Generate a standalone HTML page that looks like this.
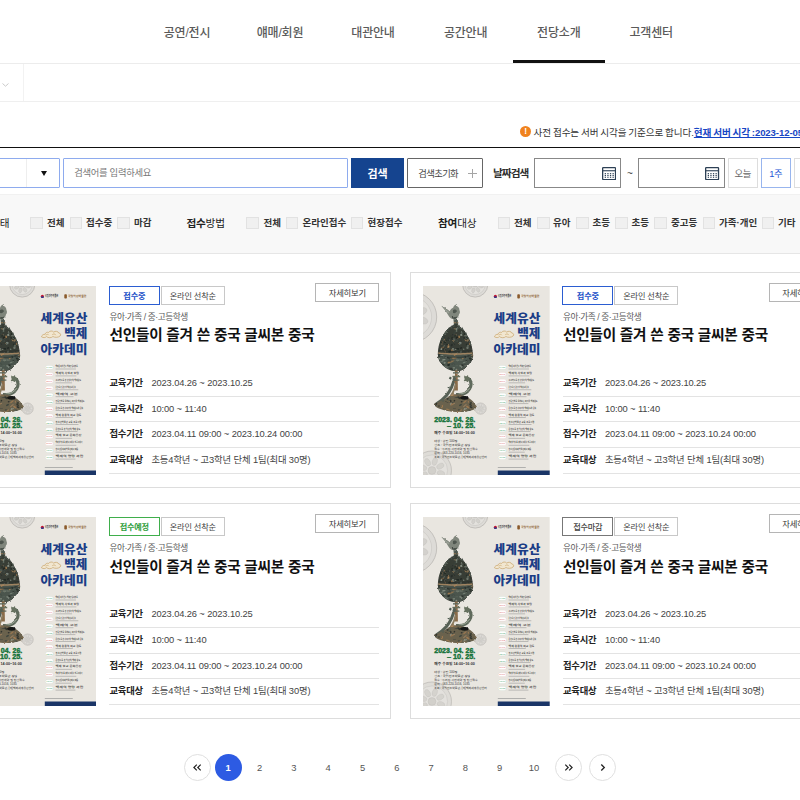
<!DOCTYPE html>
<html lang="ko"><head><meta charset="utf-8"><title>교육 프로그램</title>
<style>
*{box-sizing:border-box;margin:0;padding:0}
html,body{width:800px;height:800px;overflow:hidden;background:#fff}
body{position:relative;font-family:"Liberation Sans","Noto Sans CJK KR",sans-serif;color:#333;font-size:10.67px;line-height:1}
.abs{position:absolute}
.nav{position:absolute;top:0;left:0;width:800px;height:64px;border-bottom:1px solid #ececec}
.nav span{position:absolute;top:23.7px;width:93px;text-align:center;font-size:12px;font-weight:500;color:#5a5a5a;line-height:18px;letter-spacing:-0.2px}
.nav i{position:absolute;left:512.5px;top:60.3px;width:92.5px;height:2.4px;background:#111}
.sub{position:absolute;top:64px;left:0;width:800px;height:37.6px;border-bottom:1px solid #efefef}
.sub b{position:absolute;left:23px;top:0;width:1px;height:36.6px;background:#f2f2f2}
.notice{position:absolute;top:122px;left:519px;height:19px;white-space:nowrap;font-size:9.6px;line-height:19px;color:#333}
.notice .ic{position:absolute;left:1.2px;top:3.5px;width:11.2px;height:11.2px;border-radius:50%;background:#f0821e;color:#fff;font-size:8.5px;font-weight:700;text-align:center;line-height:11.4px}
.notice .t{position:absolute;left:14.6px;top:0.8px;letter-spacing:-0.1px;word-spacing:-0.7px}
.notice a{color:#1746c4;font-weight:700;text-decoration:underline}
.sbox{position:absolute;top:146.5px;left:0;width:800px;height:48px;border-top:1.6px solid #111;background:#fff}
.filt{position:absolute;top:194px;left:0;width:800px;height:60px;background:#f8f8f8;border-top:1px solid #f1f1f1;border-bottom:1px solid #e6e6e6}
.sel{position:absolute;left:-40px;top:158px;width:100px;height:30px;border:1px solid #8eabee;border-radius:1px;background:#fff}
.sel b{position:absolute;right:32px;top:0;width:1px;height:28px;background:#eee}
.sel i{position:absolute;right:12.5px;top:12px;width:0;height:0;border-left:3.3px solid transparent;border-right:3.3px solid transparent;border-top:5px solid #111}
.inp{position:absolute;left:63px;top:158px;width:285px;height:30px;border:1px solid #8eabee;border-radius:1px;background:#fff;font-size:9.33px;color:#777;line-height:29px;padding-left:10.2px;letter-spacing:-0.3px}
.btns{position:absolute;left:351px;top:158px;width:53px;height:30px;background:#15448f;color:#fff;font-weight:700;font-size:11px;text-align:center;line-height:32.5px}
.btnr{position:absolute;left:407px;top:158px;width:76px;height:30px;border:1px solid #666;background:#fff;font-size:9.33px;color:#444;line-height:31.5px;padding-left:10.2px;letter-spacing:-0.6px;border-radius:1px}
.btnr i{position:absolute;left:59.8px;top:10.4px;width:9px;height:9px}
.btnr i:before{content:"";position:absolute;left:0;top:4px;width:9px;height:1px;background:#a5a5a5}
.btnr i:after{content:"";position:absolute;left:4px;top:0;width:1px;height:9px;background:#a5a5a5}
.dlab{position:absolute;left:493px;top:158px;line-height:31.6px;font-weight:700;font-size:10.67px;color:#2e2e2e;letter-spacing:-0.95px}
.date{position:absolute;top:158px;width:87px;height:30px;border:1px solid #888;background:#fff}
.date svg{position:absolute;right:4.2px;top:7.8px;width:14.2px;height:13.2px}
.tilde{position:absolute;left:627px;top:159px;line-height:30px;font-size:10px;color:#444}
.db{position:absolute;top:158px;width:30px;height:30px;border:1px solid #ddd;background:#fff;font-size:9.33px;color:#666;text-align:center;line-height:31px;letter-spacing:-0.3px}
.db.on{border-color:#98b5ee;color:#2456d6}
.fl{position:absolute;top:213.5px;line-height:18px;font-size:10.67px;color:#222;letter-spacing:-0.2px;white-space:nowrap}
.fl b{font-weight:700}
.cb{position:absolute;top:216.5px;width:12.5px;height:12.5px;background:#f0f0f0;border:1px solid #e2e2e2}
.ct{position:absolute;top:213.5px;line-height:18px;font-size:9.5px;font-weight:700;color:#333;letter-spacing:0;white-space:nowrap}
.card{position:absolute;width:434.5px;height:215.5px;border:1px solid #ddd;background:#fff}
.card .poster{position:absolute;left:12.5px;top:13px;width:126.7px;height:189px}
.bd{position:absolute;top:12.7px;height:19.5px;border:1px solid #c8c8c8;font-size:8.2px;line-height:20.5px;text-align:center;color:#444;letter-spacing:-0.2px;background:#fff}
.bd.b1{left:151.8px;width:51px;font-weight:700}
.bd.b2{left:203.8px;width:64px}
.bd.blue{border-color:#2b5dd1;color:#2150c8}
.bd.green{border-color:#3fae4b;color:#2f9e3d}
.bd.gray{border-color:#777;color:#444;font-weight:500}
.more{position:absolute;left:358.3px;top:9.6px;width:64px;height:19.3px;border:1px solid #b5b5b5;font-size:8.3px;line-height:18.5px;text-align:center;color:#333;letter-spacing:-0.2px;background:#fff}
.cat{position:absolute;left:152.4px;top:36.1px;font-size:8.67px;line-height:16px;color:#5a5a5a;letter-spacing:-0.45px;white-space:nowrap}
.tit{position:absolute;left:152.4px;top:50.4px;font-size:14.67px;line-height:24px;font-weight:700;color:#111;letter-spacing:-0.21px;white-space:nowrap}
.row{position:absolute;left:152.4px;width:270px;height:25.75px;border-bottom:1px solid #e3e3e3;font-size:9.33px;line-height:25.5px;color:#444;white-space:nowrap;letter-spacing:-0.12px}
.row b{display:inline-block;width:42px;color:#222;font-weight:700;letter-spacing:-0.2px}
.pg{position:absolute;top:754px;width:27px;height:27px;border-radius:50%;font-size:9.4px;line-height:27px;text-align:center;color:#555}
.pg.c{border:1px solid #e0e0e0}.pg.c svg{position:absolute;left:0;top:0;width:25px;height:25px}
.pg.on{background:#2d5be3;color:#fff;font-weight:700}
</style></head><body>
<div class="nav"><span style="left:140.5px">공연/전시</span><span style="left:233.5px">얘매/회원</span><span style="left:326.5px">대관안내</span><span style="left:419.1px">공간안내</span><span style="left:512.3px">전당소개</span><span style="left:604.7px">고객센터</span><i></i></div>
<div class="sub"><b></b><svg class="abs" style="left:1.6px;top:18.9px" width="7" height="4" viewBox="0 0 7 4"><path d="M0.5 0.5L3.5 3.2L6.5 0.5" fill="none" stroke="#c4c4c4" stroke-width="0.9"/></svg></div>
<div class="notice"><span class="ic">!</span><span class="t">사전 접수는 서버 시각을 기준으로 합니다.<a>현재 서버 시각 :2023-12-05 14:25:31</a></span></div>
<div class="sbox"></div>
<div class="filt"></div>
<div class="sel"><b></b><i></i></div>
<div class="inp">검색어를 입력하세요</div>
<div class="btns">검색</div>
<div class="btnr">검색초기화<i></i></div>
<div class="dlab">날짜검색</div>
<div class="date" style="left:534px"><svg viewBox="0 0 14.2 13.2"><rect x="0.65" y="0.65" width="12.9" height="11.9" rx="0.6" fill="#fff" stroke="#2d4055" stroke-width="1.3"/><rect x="0.6" y="3.2" width="13" height="1.1" fill="#2d4055"/><g fill="#2d4055"><rect x="2.7" y="6.1" width="1.3" height="1.1"/><rect x="2.7" y="7.9" width="1.3" height="1.1"/><rect x="2.7" y="9.7" width="1.3" height="1.1"/><rect x="5.3" y="6.1" width="1.3" height="1.1"/><rect x="5.3" y="7.9" width="1.3" height="1.1"/><rect x="5.3" y="9.7" width="1.3" height="1.1"/><rect x="7.9" y="6.1" width="1.3" height="1.1"/><rect x="7.9" y="7.9" width="1.3" height="1.1"/><rect x="7.9" y="9.7" width="1.3" height="1.1"/><rect x="10.5" y="6.1" width="1.3" height="1.1"/><rect x="10.5" y="7.9" width="1.3" height="1.1"/><rect x="10.5" y="9.7" width="1.3" height="1.1"/></g></svg></div><div class="tilde">~</div><div class="date" style="left:637.7px"><svg viewBox="0 0 14.2 13.2"><rect x="0.65" y="0.65" width="12.9" height="11.9" rx="0.6" fill="#fff" stroke="#2d4055" stroke-width="1.3"/><rect x="0.6" y="3.2" width="13" height="1.1" fill="#2d4055"/><g fill="#2d4055"><rect x="2.7" y="6.1" width="1.3" height="1.1"/><rect x="2.7" y="7.9" width="1.3" height="1.1"/><rect x="2.7" y="9.7" width="1.3" height="1.1"/><rect x="5.3" y="6.1" width="1.3" height="1.1"/><rect x="5.3" y="7.9" width="1.3" height="1.1"/><rect x="5.3" y="9.7" width="1.3" height="1.1"/><rect x="7.9" y="6.1" width="1.3" height="1.1"/><rect x="7.9" y="7.9" width="1.3" height="1.1"/><rect x="7.9" y="9.7" width="1.3" height="1.1"/><rect x="10.5" y="6.1" width="1.3" height="1.1"/><rect x="10.5" y="7.9" width="1.3" height="1.1"/><rect x="10.5" y="9.7" width="1.3" height="1.1"/></g></svg></div>
<div class="db" style="left:727.8px">오늘</div><div class="db on" style="left:760.6px;width:30.3px">1주</div><div class="db" style="left:793.8px"></div>
<div class="fl" style="left:-29px"><b>접수</b>상태</div><div class="cb" style="left:30px"></div><div class="ct" style="left:47px">전체</div><div class="cb" style="left:69.5px"></div><div class="ct" style="left:86px">접수중</div><div class="cb" style="left:117px"></div><div class="ct" style="left:134px">마감</div><div class="fl" style="left:186.4px"><b>접수</b>방법</div><div class="cb" style="left:246.4px"></div><div class="ct" style="left:263.6px">전체</div><div class="cb" style="left:285.7px"></div><div class="ct" style="left:302.6px">온라인접수</div><div class="cb" style="left:350.6px"></div><div class="ct" style="left:367.5px">현장접수</div><div class="fl" style="left:438px"><b>참여</b>대상</div><div class="cb" style="left:497.5px"></div><div class="ct" style="left:514px">전체</div><div class="cb" style="left:537px"></div><div class="ct" style="left:553px">유아</div><div class="cb" style="left:576px"></div><div class="ct" style="left:592.5px">초등</div><div class="cb" style="left:615px"></div><div class="ct" style="left:631.5px">초등</div><div class="cb" style="left:654px"></div><div class="ct" style="left:671px">중고등</div><div class="cb" style="left:702.5px"></div><div class="ct" style="left:719px">가족·개인</div><div class="cb" style="left:761.5px"></div><div class="ct" style="left:778px">기타</div>
<div class="card" style="left:-44px;top:272px"><svg class="poster" viewBox="0 0 126.7 189" preserveAspectRatio="none"><rect width="126.7" height="189" fill="#e9e6e0"/><g opacity="1.0"><circle cx="52.2" cy="-1.5" r="12.6" fill="#dddbd7" stroke="#b4b2ae" stroke-width="0.7"/><circle cx="52.2" cy="-1.5" r="10.08" fill="#e3e1dd" stroke="#c2c0bc" stroke-width="0.5"/><ellipse cx="57.98" cy="0.29" rx="2.52" ry="1.64" transform="rotate(17.2 57.98 0.29)" fill="#d3d1cd" stroke="#bab8b4" stroke-width="0.3"/><ellipse cx="55.02" cy="3.85" rx="2.52" ry="1.64" transform="rotate(62.2 55.02 3.85)" fill="#d3d1cd" stroke="#bab8b4" stroke-width="0.3"/><ellipse cx="50.41" cy="4.28" rx="2.52" ry="1.64" transform="rotate(107.2 50.41 4.28)" fill="#d3d1cd" stroke="#bab8b4" stroke-width="0.3"/><ellipse cx="46.85" cy="1.32" rx="2.52" ry="1.64" transform="rotate(152.2 46.85 1.32)" fill="#d3d1cd" stroke="#bab8b4" stroke-width="0.3"/><ellipse cx="46.42" cy="-3.29" rx="2.52" ry="1.64" transform="rotate(197.2 46.42 -3.29)" fill="#d3d1cd" stroke="#bab8b4" stroke-width="0.3"/><ellipse cx="49.38" cy="-6.85" rx="2.52" ry="1.64" transform="rotate(242.2 49.38 -6.85)" fill="#d3d1cd" stroke="#bab8b4" stroke-width="0.3"/><ellipse cx="53.99" cy="-7.28" rx="2.52" ry="1.64" transform="rotate(287.2 53.99 -7.28)" fill="#d3d1cd" stroke="#bab8b4" stroke-width="0.3"/><ellipse cx="57.55" cy="-4.32" rx="2.52" ry="1.64" transform="rotate(332.2 57.55 -4.32)" fill="#d3d1cd" stroke="#bab8b4" stroke-width="0.3"/><circle cx="52.2" cy="-1.5" r="2.52" fill="#d0cec9" stroke="#b8b6b2" stroke-width="0.4"/></g><g opacity="1.0"><circle cx="-11.5" cy="31" r="25.2" fill="#dddbd7" stroke="#b4b2ae" stroke-width="0.7"/><circle cx="-11.5" cy="31" r="20.16" fill="#e3e1dd" stroke="#c2c0bc" stroke-width="0.5"/><ellipse cx="0.06" cy="34.57" rx="5.04" ry="3.28" transform="rotate(17.2 0.06 34.57)" fill="#d3d1cd" stroke="#bab8b4" stroke-width="0.3"/><ellipse cx="-5.86" cy="41.70" rx="5.04" ry="3.28" transform="rotate(62.2 -5.86 41.70)" fill="#d3d1cd" stroke="#bab8b4" stroke-width="0.3"/><ellipse cx="-15.07" cy="42.56" rx="5.04" ry="3.28" transform="rotate(107.2 -15.07 42.56)" fill="#d3d1cd" stroke="#bab8b4" stroke-width="0.3"/><ellipse cx="-22.20" cy="36.64" rx="5.04" ry="3.28" transform="rotate(152.2 -22.20 36.64)" fill="#d3d1cd" stroke="#bab8b4" stroke-width="0.3"/><ellipse cx="-23.06" cy="27.43" rx="5.04" ry="3.28" transform="rotate(197.2 -23.06 27.43)" fill="#d3d1cd" stroke="#bab8b4" stroke-width="0.3"/><ellipse cx="-17.14" cy="20.30" rx="5.04" ry="3.28" transform="rotate(242.2 -17.14 20.30)" fill="#d3d1cd" stroke="#bab8b4" stroke-width="0.3"/><ellipse cx="-7.93" cy="19.44" rx="5.04" ry="3.28" transform="rotate(287.2 -7.93 19.44)" fill="#d3d1cd" stroke="#bab8b4" stroke-width="0.3"/><ellipse cx="-0.80" cy="25.36" rx="5.04" ry="3.28" transform="rotate(332.2 -0.80 25.36)" fill="#d3d1cd" stroke="#bab8b4" stroke-width="0.3"/><circle cx="-11.5" cy="31" r="5.04" fill="#d0cec9" stroke="#b8b6b2" stroke-width="0.4"/></g><g opacity="0.9"><circle cx="9" cy="184.5" r="19.5" fill="#dddbd7" stroke="#b4b2ae" stroke-width="0.7"/><circle cx="9" cy="184.5" r="15.60" fill="#e3e1dd" stroke="#c2c0bc" stroke-width="0.5"/><ellipse cx="17.94" cy="187.27" rx="3.90" ry="2.54" transform="rotate(17.2 17.94 187.27)" fill="#d3d1cd" stroke="#bab8b4" stroke-width="0.3"/><ellipse cx="13.37" cy="192.78" rx="3.90" ry="2.54" transform="rotate(62.2 13.37 192.78)" fill="#d3d1cd" stroke="#bab8b4" stroke-width="0.3"/><ellipse cx="6.23" cy="193.44" rx="3.90" ry="2.54" transform="rotate(107.2 6.23 193.44)" fill="#d3d1cd" stroke="#bab8b4" stroke-width="0.3"/><ellipse cx="0.72" cy="188.87" rx="3.90" ry="2.54" transform="rotate(152.2 0.72 188.87)" fill="#d3d1cd" stroke="#bab8b4" stroke-width="0.3"/><ellipse cx="0.06" cy="181.73" rx="3.90" ry="2.54" transform="rotate(197.2 0.06 181.73)" fill="#d3d1cd" stroke="#bab8b4" stroke-width="0.3"/><ellipse cx="4.63" cy="176.22" rx="3.90" ry="2.54" transform="rotate(242.2 4.63 176.22)" fill="#d3d1cd" stroke="#bab8b4" stroke-width="0.3"/><ellipse cx="11.77" cy="175.56" rx="3.90" ry="2.54" transform="rotate(287.2 11.77 175.56)" fill="#d3d1cd" stroke="#bab8b4" stroke-width="0.3"/><ellipse cx="17.28" cy="180.13" rx="3.90" ry="2.54" transform="rotate(332.2 17.28 180.13)" fill="#d3d1cd" stroke="#bab8b4" stroke-width="0.3"/><circle cx="9" cy="184.5" r="3.90" fill="#d0cec9" stroke="#b8b6b2" stroke-width="0.4"/></g><g opacity="0.9"><circle cx="57.6" cy="122.6" r="5.6" fill="#dddbd7" stroke="#b4b2ae" stroke-width="0.7"/><circle cx="57.6" cy="122.6" r="4.48" fill="#e3e1dd" stroke="#c2c0bc" stroke-width="0.5"/><ellipse cx="60.17" cy="123.39" rx="1.12" ry="0.73" transform="rotate(17.2 60.17 123.39)" fill="#d3d1cd" stroke="#bab8b4" stroke-width="0.3"/><ellipse cx="58.85" cy="124.98" rx="1.12" ry="0.73" transform="rotate(62.2 58.85 124.98)" fill="#d3d1cd" stroke="#bab8b4" stroke-width="0.3"/><ellipse cx="56.81" cy="125.17" rx="1.12" ry="0.73" transform="rotate(107.2 56.81 125.17)" fill="#d3d1cd" stroke="#bab8b4" stroke-width="0.3"/><ellipse cx="55.22" cy="123.85" rx="1.12" ry="0.73" transform="rotate(152.2 55.22 123.85)" fill="#d3d1cd" stroke="#bab8b4" stroke-width="0.3"/><ellipse cx="55.03" cy="121.81" rx="1.12" ry="0.73" transform="rotate(197.2 55.03 121.81)" fill="#d3d1cd" stroke="#bab8b4" stroke-width="0.3"/><ellipse cx="56.35" cy="120.22" rx="1.12" ry="0.73" transform="rotate(242.2 56.35 120.22)" fill="#d3d1cd" stroke="#bab8b4" stroke-width="0.3"/><ellipse cx="58.39" cy="120.03" rx="1.12" ry="0.73" transform="rotate(287.2 58.39 120.03)" fill="#d3d1cd" stroke="#bab8b4" stroke-width="0.3"/><ellipse cx="59.98" cy="121.35" rx="1.12" ry="0.73" transform="rotate(332.2 59.98 121.35)" fill="#d3d1cd" stroke="#bab8b4" stroke-width="0.3"/><circle cx="57.6" cy="122.6" r="1.12" fill="#d0cec9" stroke="#b8b6b2" stroke-width="0.4"/></g><circle cx="72.4" cy="10.4" r="1.6" fill="#c8102e"/><path d="M70.8 10.4a1.6 1.6 0 0 0 3.2 0z" fill="#1d3f94"/><text x="74.8" y="11.4" font-family="Liberation Sans,Noto Sans CJK KR,sans-serif" font-size="2.9" font-weight="700" fill="#333" textLength="13.5" lengthAdjust="spacingAndGlyphs">국립전주박물관</text><rect x="94.3" y="8.3" width="2.6" height="4.2" rx="0.8" fill="#8a5a2b"/><text x="98" y="11.3" font-family="Liberation Sans,Noto Sans CJK KR,sans-serif" font-size="2.6" font-weight="700" fill="#8a5a2b" textLength="18.5" lengthAdjust="spacingAndGlyphs">국립익산박물관</text><text x="70.6" y="36.9" font-family="Liberation Sans,Noto Sans CJK KR,sans-serif" font-weight="900" fill="#1b3d86" font-size="12.400" textLength="46.8" lengthAdjust="spacingAndGlyphs">세계유산</text><text x="94.2" y="52.4" font-family="Liberation Sans,Noto Sans CJK KR,sans-serif" font-weight="900" fill="#1b3d86" font-size="12.400" textLength="23.2" lengthAdjust="spacingAndGlyphs">백제</text><text x="70.6" y="67.6" font-family="Liberation Sans,Noto Sans CJK KR,sans-serif" font-weight="900" fill="#1b3d86" font-size="12.400" textLength="46.8" lengthAdjust="spacingAndGlyphs">아카데미</text><path d="M71.5 50.8c1.5 1.2 4 1 5-.2c1.6 1.5 5 1.5 6.4-.1c2 1.3 5.600 1 7.200-.5c1.300-1.300 .4-3-1.400-3c-.3-1.800-3.600-2.300-5-.9c-1-1.500-4.200-1.500-5 .3c-1.800-.6-3.600 .4-3.500 1.900c-1.800-.2-3.500 1-3.700 2.500z" fill="#f1e6d0" stroke="#c8a468" stroke-width="0.7"/><path d="M76 49.400c.2-1.300 2.400-1.500 2.800-.2m3.400-.2c.5-1.500 3.200-1.500 3.600 .2" fill="none" stroke="#c8a468" stroke-width="0.6"/><filter id="rg1" x="-10%" y="-10%" width="120%" height="120%"><feTurbulence type="fractalNoise" baseFrequency="0.55" numOctaves="2" seed="4" result="n"/><feDisplacementMap in="SourceGraphic" in2="n" scale="2.2" xChannelSelector="R" yChannelSelector="G"/></filter><g filter="url(#rg1)"><g transform="translate(28 34.6) scale(1.12) translate(-28 -33)"><path d="M19.400 19.800l3.200 1.600l4.300 3.300c.6-1.500 1.700-2.600 3-3.100c.3-1.400 1.300-2.600 2.600-3l1 1.500c1.300 .6 2.100 1.900 2 3.400c.8 1.300 .6 3-.4 4.100c-.2 1.800-1.300 3.200-2.900 3.800l.2 2.700h-2.200l-.2-2.500c-1.900-.3-3.500-1.500-4.300-3.200l-2.200-3.600z" fill="#80867c"/><path d="M19.400 19.800l7.200 5.800l-1 1z" fill="#9aa096"/><path d="M30 23.500c1.200-.8 2.800-.4 3.400 1c-.6 1.600-2.400 2.300-3.900 1.500z" fill="#4f5750"/><path d="M28.500 29.500c1.500 1 3.500 1 4.800-.2l-.3 1.600c-1.300 .8-3 .7-4.200-.2z" fill="#3c443e"/></g><path d="M31.300 33.500h3.400l.7 6.500h-4.800z" fill="#4e5750"/><rect x="30.600" y="36.200" width="4.800" height="1" fill="#8d7353"/><clipPath id="eggc1"><path d="M32.5 38.3L28.5 40.5L25.8 42.3L23.2 45L19.7 50L17.7 55L16.2 60L15.5 65L15.2 70L16.7 75L20.7 80L24.5 82.6L28.2 84L33.2 85L38.2 84L41.5 82.6L43.8 80L48.3 75L49.7 70L49.2 65L48.2 60L46.7 55L44.2 50L41.2 45L38.6 42.3L36 40.5L34 38.3z"/></clipPath><path d="M32.5 38.3L28.5 40.5L25.8 42.3L23.2 45L19.7 50L17.7 55L16.2 60L15.5 65L15.2 70L16.7 75L20.7 80L24.5 82.6L28.2 84L33.2 85L38.2 84L41.5 82.6L43.8 80L48.3 75L49.7 70L49.2 65L48.2 60L46.7 55L44.2 50L41.2 45L38.6 42.3L36 40.5L34 38.3z" fill="#383d36" stroke="#383d36" stroke-width="1" stroke-linejoin="round"/><g clip-path="url(#eggc1)"><path d="M14 67h40v20h-40z" fill="#4b554d"/><ellipse cx="26.7" cy="42.2" rx="1.2" ry="0.5" fill="#3b443e" opacity="0.63" transform="rotate(-56 26.7 42.2)"/><ellipse cx="47.7" cy="44.0" rx="0.5" ry="0.7" fill="#1f2622" opacity="0.63" transform="rotate(38 47.7 44.0)"/><ellipse cx="17.1" cy="53.8" rx="1.5" ry="0.9" fill="#3b443e" opacity="0.93" transform="rotate(31 17.1 53.8)"/><ellipse cx="16.8" cy="44.2" rx="1.1" ry="0.5" fill="#8b9488" opacity="0.65" transform="rotate(-40 16.8 44.2)"/><ellipse cx="35.6" cy="53.7" rx="1.2" ry="0.5" fill="#3b443e" opacity="0.82" transform="rotate(25 35.6 53.7)"/><ellipse cx="18.5" cy="57.9" rx="1.1" ry="0.9" fill="#a57d52" opacity="0.84" transform="rotate(39 18.5 57.9)"/><ellipse cx="43.0" cy="51.0" rx="1.5" ry="0.7" fill="#1f2622" opacity="0.88" transform="rotate(-8 43.0 51.0)"/><ellipse cx="17.9" cy="46.4" rx="1.0" ry="0.7" fill="#a57d52" opacity="0.70" transform="rotate(-52 17.9 46.4)"/><ellipse cx="19.3" cy="49.7" rx="1.3" ry="0.5" fill="#a57d52" opacity="0.75" transform="rotate(-51 19.3 49.7)"/><ellipse cx="42.5" cy="54.0" rx="1.5" ry="0.7" fill="#b08a5e" opacity="0.72" transform="rotate(57 42.5 54.0)"/><ellipse cx="35.9" cy="50.8" rx="1.4" ry="1.2" fill="#a57d52" opacity="0.84" transform="rotate(-54 35.9 50.8)"/><ellipse cx="17.2" cy="57.6" rx="1.2" ry="1.2" fill="#59635a" opacity="0.76" transform="rotate(28 17.2 57.6)"/><ellipse cx="46.9" cy="47.7" rx="1.5" ry="0.7" fill="#3b443e" opacity="0.64" transform="rotate(-55 46.9 47.7)"/><ellipse cx="22.9" cy="46.0" rx="1.3" ry="0.7" fill="#59635a" opacity="0.77" transform="rotate(-28 22.9 46.0)"/><ellipse cx="31.2" cy="53.4" rx="1.5" ry="1.1" fill="#59635a" opacity="0.79" transform="rotate(36 31.2 53.4)"/><ellipse cx="50.5" cy="57.1" rx="0.9" ry="0.6" fill="#2a2f2a" opacity="0.66" transform="rotate(-11 50.5 57.1)"/><ellipse cx="38.7" cy="38.3" rx="1.4" ry="0.5" fill="#1f2622" opacity="0.60" transform="rotate(37 38.7 38.3)"/><ellipse cx="34.2" cy="55.1" rx="0.8" ry="0.5" fill="#59635a" opacity="0.78" transform="rotate(-57 34.2 55.1)"/><ellipse cx="31.4" cy="62.4" rx="1.5" ry="0.9" fill="#3b443e" opacity="0.74" transform="rotate(32 31.4 62.4)"/><ellipse cx="29.2" cy="51.5" rx="0.9" ry="0.6" fill="#1f2622" opacity="0.75" transform="rotate(-42 29.2 51.5)"/><ellipse cx="27.2" cy="39.5" rx="0.4" ry="0.5" fill="#2a2f2a" opacity="0.93" transform="rotate(-64 27.2 39.5)"/><ellipse cx="17.5" cy="43.8" rx="0.9" ry="0.9" fill="#6c7468" opacity="0.81" transform="rotate(51 17.5 43.8)"/><ellipse cx="19.4" cy="61.8" rx="1.6" ry="0.8" fill="#a57d52" opacity="0.71" transform="rotate(-34 19.4 61.8)"/><ellipse cx="18.7" cy="47.6" rx="0.7" ry="1.1" fill="#1f2622" opacity="0.78" transform="rotate(-18 18.7 47.6)"/><ellipse cx="49.2" cy="52.8" rx="0.6" ry="0.8" fill="#2a2f2a" opacity="0.87" transform="rotate(6 49.2 52.8)"/><ellipse cx="50.2" cy="62.2" rx="1.2" ry="0.6" fill="#6c7468" opacity="0.92" transform="rotate(21 50.2 62.2)"/><ellipse cx="42.8" cy="52.9" rx="1.3" ry="0.7" fill="#1f2622" opacity="0.81" transform="rotate(-21 42.8 52.9)"/><ellipse cx="44.0" cy="60.9" rx="1.3" ry="0.6" fill="#3b443e" opacity="0.77" transform="rotate(-63 44.0 60.9)"/><ellipse cx="50.6" cy="60.1" rx="1.0" ry="0.6" fill="#3b443e" opacity="0.93" transform="rotate(44 50.6 60.1)"/><ellipse cx="44.1" cy="58.2" rx="0.8" ry="1.2" fill="#2a2f2a" opacity="0.68" transform="rotate(-12 44.1 58.2)"/><ellipse cx="31.9" cy="47.5" rx="1.0" ry="1.2" fill="#3b443e" opacity="0.89" transform="rotate(52 31.9 47.5)"/><ellipse cx="47.7" cy="47.6" rx="1.2" ry="1.1" fill="#2a2f2a" opacity="0.92" transform="rotate(-19 47.7 47.6)"/><ellipse cx="32.2" cy="43.0" rx="1.3" ry="0.7" fill="#8d6f4c" opacity="0.93" transform="rotate(31 32.2 43.0)"/><ellipse cx="31.7" cy="58.8" rx="0.5" ry="0.5" fill="#1f2622" opacity="0.61" transform="rotate(49 31.7 58.8)"/><ellipse cx="44.0" cy="42.1" rx="1.4" ry="1.2" fill="#7f8a7e" opacity="0.93" transform="rotate(-31 44.0 42.1)"/><ellipse cx="34.8" cy="41.7" rx="0.4" ry="1.2" fill="#7f8a7e" opacity="0.64" transform="rotate(-35 34.8 41.7)"/><ellipse cx="30.6" cy="62.4" rx="1.4" ry="0.6" fill="#1f2622" opacity="0.67" transform="rotate(58 30.6 62.4)"/><ellipse cx="23.7" cy="54.4" rx="0.7" ry="0.7" fill="#1f2622" opacity="0.62" transform="rotate(20 23.7 54.4)"/><ellipse cx="47.3" cy="56.5" rx="1.4" ry="0.8" fill="#59635a" opacity="0.92" transform="rotate(58 47.3 56.5)"/><ellipse cx="19.7" cy="42.3" rx="1.0" ry="1.1" fill="#8d6f4c" opacity="0.66" transform="rotate(-69 19.7 42.3)"/><ellipse cx="42.9" cy="42.2" rx="0.6" ry="0.9" fill="#2a2f2a" opacity="0.79" transform="rotate(13 42.9 42.2)"/><ellipse cx="39.6" cy="52.9" rx="1.0" ry="1.0" fill="#3b443e" opacity="0.62" transform="rotate(-22 39.6 52.9)"/><ellipse cx="25.0" cy="59.6" rx="1.0" ry="0.8" fill="#8d6f4c" opacity="0.91" transform="rotate(-54 25.0 59.6)"/><ellipse cx="31.0" cy="55.2" rx="1.0" ry="0.8" fill="#b08a5e" opacity="0.70" transform="rotate(60 31.0 55.2)"/><ellipse cx="34.2" cy="51.4" rx="1.5" ry="1.0" fill="#1f2622" opacity="0.92" transform="rotate(-19 34.2 51.4)"/><ellipse cx="45.2" cy="41.8" rx="0.5" ry="0.8" fill="#2a2f2a" opacity="0.83" transform="rotate(39 45.2 41.8)"/><ellipse cx="17.6" cy="56.7" rx="1.3" ry="1.1" fill="#1f2622" opacity="0.93" transform="rotate(23 17.6 56.7)"/><ellipse cx="20.1" cy="62.7" rx="1.6" ry="0.6" fill="#2a2f2a" opacity="0.74" transform="rotate(54 20.1 62.7)"/><ellipse cx="20.9" cy="56.7" rx="0.7" ry="1.0" fill="#3b443e" opacity="0.74" transform="rotate(37 20.9 56.7)"/><ellipse cx="22.0" cy="46.9" rx="1.3" ry="0.4" fill="#3b443e" opacity="0.76" transform="rotate(-66 22.0 46.9)"/><ellipse cx="28.8" cy="52.5" rx="0.8" ry="1.2" fill="#2a2f2a" opacity="0.94" transform="rotate(-12 28.8 52.5)"/><ellipse cx="50.0" cy="40.9" rx="0.7" ry="0.4" fill="#8d6f4c" opacity="0.66" transform="rotate(-37 50.0 40.9)"/><ellipse cx="44.5" cy="61.8" rx="1.2" ry="1.2" fill="#8b9488" opacity="0.65" transform="rotate(61 44.5 61.8)"/><ellipse cx="35.5" cy="57.6" rx="0.5" ry="0.4" fill="#b08a5e" opacity="0.66" transform="rotate(-52 35.5 57.6)"/><ellipse cx="24.7" cy="38.5" rx="0.5" ry="0.6" fill="#3b443e" opacity="0.90" transform="rotate(-53 24.7 38.5)"/><ellipse cx="24.5" cy="41.4" rx="0.4" ry="1.2" fill="#8b9488" opacity="0.92" transform="rotate(-2 24.5 41.4)"/><ellipse cx="37.4" cy="39.2" rx="1.3" ry="1.2" fill="#1f2622" opacity="0.69" transform="rotate(-24 37.4 39.2)"/><ellipse cx="22.3" cy="46.7" rx="0.8" ry="1.0" fill="#1f2622" opacity="0.76" transform="rotate(-25 22.3 46.7)"/><ellipse cx="24.7" cy="60.5" rx="1.6" ry="0.4" fill="#2a2f2a" opacity="0.86" transform="rotate(-22 24.7 60.5)"/><ellipse cx="33.5" cy="44.9" rx="0.9" ry="0.9" fill="#7f8a7e" opacity="0.75" transform="rotate(56 33.5 44.9)"/><ellipse cx="34.7" cy="62.9" rx="1.6" ry="0.6" fill="#1f2622" opacity="0.94" transform="rotate(17 34.7 62.9)"/><ellipse cx="22.2" cy="62.7" rx="1.3" ry="0.5" fill="#6c7468" opacity="0.94" transform="rotate(-37 22.2 62.7)"/><ellipse cx="15.5" cy="55.5" rx="1.5" ry="0.7" fill="#2a2f2a" opacity="0.63" transform="rotate(27 15.5 55.5)"/><ellipse cx="46.3" cy="56.8" rx="0.7" ry="0.6" fill="#1f2622" opacity="0.62" transform="rotate(-23 46.3 56.8)"/><ellipse cx="20.7" cy="50.5" rx="0.7" ry="1.2" fill="#3b443e" opacity="0.71" transform="rotate(-62 20.7 50.5)"/><ellipse cx="49.8" cy="46.7" rx="0.8" ry="0.4" fill="#8b9488" opacity="0.63" transform="rotate(1 49.8 46.7)"/><ellipse cx="33.1" cy="43.6" rx="1.0" ry="0.4" fill="#1f2622" opacity="0.89" transform="rotate(-34 33.1 43.6)"/><ellipse cx="29.4" cy="39.2" rx="0.4" ry="0.6" fill="#1f2622" opacity="0.63" transform="rotate(65 29.4 39.2)"/><ellipse cx="45.7" cy="42.3" rx="1.5" ry="1.0" fill="#3b443e" opacity="0.74" transform="rotate(13 45.7 42.3)"/><ellipse cx="40.9" cy="51.8" rx="0.7" ry="0.9" fill="#1f2622" opacity="0.62" transform="rotate(61 40.9 51.8)"/><ellipse cx="37.6" cy="58.5" rx="1.4" ry="0.5" fill="#3b443e" opacity="0.86" transform="rotate(-66 37.6 58.5)"/><ellipse cx="44.8" cy="54.4" rx="1.5" ry="0.9" fill="#b08a5e" opacity="0.83" transform="rotate(-49 44.8 54.4)"/><ellipse cx="16.1" cy="41.7" rx="0.8" ry="0.5" fill="#59635a" opacity="0.76" transform="rotate(-58 16.1 41.7)"/><ellipse cx="37.6" cy="55.5" rx="1.2" ry="0.8" fill="#2a2f2a" opacity="0.76" transform="rotate(-53 37.6 55.5)"/><ellipse cx="41.9" cy="52.1" rx="1.0" ry="0.9" fill="#2a2f2a" opacity="0.86" transform="rotate(51 41.9 52.1)"/><ellipse cx="24.1" cy="40.1" rx="0.7" ry="1.0" fill="#1f2622" opacity="0.68" transform="rotate(47 24.1 40.1)"/><ellipse cx="32.8" cy="48.7" rx="1.0" ry="0.9" fill="#8d6f4c" opacity="0.62" transform="rotate(-20 32.8 48.7)"/><ellipse cx="17.8" cy="42.1" rx="0.7" ry="1.0" fill="#1f2622" opacity="0.82" transform="rotate(-36 17.8 42.1)"/><ellipse cx="15.4" cy="39.7" rx="0.7" ry="0.9" fill="#b08a5e" opacity="0.68" transform="rotate(55 15.4 39.7)"/><ellipse cx="25.5" cy="52.5" rx="1.0" ry="0.8" fill="#2a2f2a" opacity="0.95" transform="rotate(70 25.5 52.5)"/><ellipse cx="22.2" cy="65.4" rx="1.5" ry="0.4" fill="#a57d52" opacity="0.63" transform="rotate(59 22.2 65.4)"/><ellipse cx="49.9" cy="50.6" rx="0.7" ry="0.6" fill="#1f2622" opacity="0.63" transform="rotate(-47 49.9 50.6)"/><ellipse cx="20.1" cy="52.7" rx="1.5" ry="0.5" fill="#59635a" opacity="0.82" transform="rotate(1 20.1 52.7)"/><ellipse cx="46.9" cy="57.7" rx="0.7" ry="1.1" fill="#a57d52" opacity="0.74" transform="rotate(-30 46.9 57.7)"/><ellipse cx="15.1" cy="51.8" rx="0.9" ry="0.6" fill="#1f2622" opacity="0.75" transform="rotate(26 15.1 51.8)"/><ellipse cx="26.4" cy="61.5" rx="0.4" ry="1.0" fill="#59635a" opacity="0.74" transform="rotate(-20 26.4 61.5)"/><ellipse cx="40.7" cy="63.2" rx="0.7" ry="0.7" fill="#8b9488" opacity="0.74" transform="rotate(-51 40.7 63.2)"/><ellipse cx="28.0" cy="50.0" rx="0.7" ry="0.4" fill="#2a2f2a" opacity="0.62" transform="rotate(3 28.0 50.0)"/><ellipse cx="37.9" cy="42.2" rx="1.6" ry="0.7" fill="#6c7468" opacity="0.67" transform="rotate(25 37.9 42.2)"/><ellipse cx="43.3" cy="50.0" rx="0.4" ry="1.0" fill="#8b9488" opacity="0.92" transform="rotate(70 43.3 50.0)"/><ellipse cx="22.3" cy="40.3" rx="1.5" ry="0.7" fill="#3b443e" opacity="0.86" transform="rotate(3 22.3 40.3)"/><ellipse cx="32.5" cy="63.5" rx="1.1" ry="0.5" fill="#8b9488" opacity="0.72" transform="rotate(6 32.5 63.5)"/><ellipse cx="24.2" cy="58.7" rx="1.2" ry="0.7" fill="#1f2622" opacity="0.71" transform="rotate(30 24.2 58.7)"/><ellipse cx="19.3" cy="56.0" rx="0.5" ry="0.8" fill="#8d6f4c" opacity="0.77" transform="rotate(-14 19.3 56.0)"/><ellipse cx="31.3" cy="47.3" rx="1.3" ry="0.7" fill="#3b443e" opacity="0.67" transform="rotate(-47 31.3 47.3)"/><ellipse cx="21.3" cy="53.6" rx="0.8" ry="0.7" fill="#8d6f4c" opacity="0.80" transform="rotate(-65 21.3 53.6)"/><ellipse cx="42.0" cy="49.6" rx="0.9" ry="0.8" fill="#8b9488" opacity="0.69" transform="rotate(-55 42.0 49.6)"/><ellipse cx="32.9" cy="54.1" rx="0.8" ry="0.9" fill="#3b443e" opacity="0.82" transform="rotate(-15 32.9 54.1)"/><ellipse cx="18.3" cy="63.1" rx="0.9" ry="0.9" fill="#8b9488" opacity="0.93" transform="rotate(-65 18.3 63.1)"/><ellipse cx="19.6" cy="49.9" rx="1.3" ry="1.0" fill="#3b443e" opacity="0.77" transform="rotate(-52 19.6 49.9)"/><ellipse cx="29.1" cy="64.0" rx="1.4" ry="1.1" fill="#a57d52" opacity="0.69" transform="rotate(-43 29.1 64.0)"/><ellipse cx="23.1" cy="42.3" rx="1.6" ry="0.5" fill="#59635a" opacity="0.85" transform="rotate(47 23.1 42.3)"/><ellipse cx="18.1" cy="59.8" rx="0.4" ry="0.5" fill="#3b443e" opacity="0.92" transform="rotate(7 18.1 59.8)"/><ellipse cx="49.6" cy="55.5" rx="1.0" ry="0.7" fill="#8d6f4c" opacity="0.64" transform="rotate(-52 49.6 55.5)"/><ellipse cx="25.8" cy="64.4" rx="0.6" ry="0.6" fill="#8d6f4c" opacity="0.81" transform="rotate(-68 25.8 64.4)"/><ellipse cx="34.3" cy="65.9" rx="0.7" ry="0.7" fill="#59635a" opacity="0.91" transform="rotate(51 34.3 65.9)"/><ellipse cx="33.9" cy="53.3" rx="0.4" ry="0.7" fill="#7f8a7e" opacity="0.71" transform="rotate(-65 33.9 53.3)"/><ellipse cx="22.0" cy="62.8" rx="1.2" ry="0.5" fill="#1f2622" opacity="0.83" transform="rotate(24 22.0 62.8)"/><ellipse cx="23.2" cy="39.0" rx="0.8" ry="0.7" fill="#7f8a7e" opacity="0.74" transform="rotate(-69 23.2 39.0)"/><ellipse cx="43.7" cy="58.7" rx="1.0" ry="0.6" fill="#1f2622" opacity="0.71" transform="rotate(-21 43.7 58.7)"/><ellipse cx="23.3" cy="44.2" rx="1.3" ry="0.6" fill="#3b443e" opacity="0.77" transform="rotate(-23 23.3 44.2)"/><ellipse cx="47.3" cy="51.6" rx="1.5" ry="0.4" fill="#3b443e" opacity="0.65" transform="rotate(30 47.3 51.6)"/><ellipse cx="17.0" cy="38.7" rx="1.1" ry="0.7" fill="#b08a5e" opacity="0.62" transform="rotate(30 17.0 38.7)"/><ellipse cx="31.2" cy="57.9" rx="0.8" ry="0.5" fill="#2a2f2a" opacity="0.93" transform="rotate(14 31.2 57.9)"/><ellipse cx="21.9" cy="56.3" rx="1.0" ry="0.8" fill="#1f2622" opacity="0.83" transform="rotate(26 21.9 56.3)"/><ellipse cx="45.2" cy="65.6" rx="0.9" ry="0.5" fill="#2a2f2a" opacity="0.70" transform="rotate(19 45.2 65.6)"/><ellipse cx="30.1" cy="62.8" rx="1.1" ry="1.0" fill="#8b9488" opacity="0.72" transform="rotate(9 30.1 62.8)"/><ellipse cx="44.6" cy="50.1" rx="0.5" ry="0.8" fill="#6c7468" opacity="0.79" transform="rotate(44 44.6 50.1)"/><ellipse cx="21.9" cy="48.2" rx="1.5" ry="0.4" fill="#8b9488" opacity="0.69" transform="rotate(33 21.9 48.2)"/><ellipse cx="16.5" cy="39.0" rx="0.5" ry="1.1" fill="#1f2622" opacity="0.67" transform="rotate(-54 16.5 39.0)"/><ellipse cx="47.3" cy="47.5" rx="0.7" ry="1.2" fill="#3b443e" opacity="0.62" transform="rotate(11 47.3 47.5)"/><ellipse cx="48.3" cy="46.3" rx="1.3" ry="0.9" fill="#8d6f4c" opacity="0.82" transform="rotate(-54 48.3 46.3)"/><ellipse cx="15.9" cy="44.5" rx="1.0" ry="1.2" fill="#8d6f4c" opacity="0.74" transform="rotate(-6 15.9 44.5)"/><ellipse cx="47.9" cy="60.8" rx="0.6" ry="0.8" fill="#2a2f2a" opacity="0.88" transform="rotate(7 47.9 60.8)"/><ellipse cx="44.6" cy="59.6" rx="1.1" ry="0.7" fill="#6c7468" opacity="0.76" transform="rotate(-50 44.6 59.6)"/><ellipse cx="33.4" cy="49.0" rx="0.6" ry="0.7" fill="#7f8a7e" opacity="0.61" transform="rotate(69 33.4 49.0)"/><ellipse cx="26.7" cy="65.4" rx="1.5" ry="1.2" fill="#1f2622" opacity="0.82" transform="rotate(-17 26.7 65.4)"/><ellipse cx="18.5" cy="52.0" rx="1.3" ry="0.8" fill="#1f2622" opacity="0.65" transform="rotate(47 18.5 52.0)"/><ellipse cx="37.3" cy="56.9" rx="1.3" ry="1.1" fill="#7f8a7e" opacity="0.87" transform="rotate(5 37.3 56.9)"/><ellipse cx="25.6" cy="53.9" rx="0.8" ry="1.0" fill="#1f2622" opacity="0.75" transform="rotate(-23 25.6 53.9)"/><ellipse cx="23.8" cy="42.3" rx="1.5" ry="0.9" fill="#6c7468" opacity="0.62" transform="rotate(-6 23.8 42.3)"/><ellipse cx="50.7" cy="52.2" rx="0.7" ry="1.0" fill="#7f8a7e" opacity="0.76" transform="rotate(-61 50.7 52.2)"/><ellipse cx="18.7" cy="51.3" rx="1.4" ry="1.1" fill="#6c7468" opacity="0.61" transform="rotate(5 18.7 51.3)"/><ellipse cx="23.4" cy="39.4" rx="1.1" ry="1.1" fill="#1f2622" opacity="0.93" transform="rotate(25 23.4 39.4)"/><ellipse cx="33.5" cy="43.0" rx="1.1" ry="1.0" fill="#7f8a7e" opacity="0.93" transform="rotate(-43 33.5 43.0)"/><ellipse cx="37.9" cy="57.9" rx="0.8" ry="0.4" fill="#6c7468" opacity="0.65" transform="rotate(-18 37.9 57.9)"/><ellipse cx="51.0" cy="39.1" rx="1.3" ry="1.1" fill="#59635a" opacity="0.60" transform="rotate(13 51.0 39.1)"/><ellipse cx="29.7" cy="48.4" rx="1.1" ry="0.5" fill="#2a2f2a" opacity="0.88" transform="rotate(70 29.7 48.4)"/><ellipse cx="32.4" cy="49.4" rx="1.4" ry="0.9" fill="#1f2622" opacity="0.82" transform="rotate(-47 32.4 49.4)"/><ellipse cx="38.5" cy="49.1" rx="0.7" ry="1.2" fill="#7f8a7e" opacity="0.71" transform="rotate(-57 38.5 49.1)"/><ellipse cx="26.2" cy="53.9" rx="0.8" ry="0.7" fill="#59635a" opacity="0.87" transform="rotate(23 26.2 53.9)"/><ellipse cx="38.2" cy="48.9" rx="0.9" ry="1.2" fill="#8b9488" opacity="0.92" transform="rotate(38 38.2 48.9)"/><ellipse cx="19.1" cy="40.5" rx="1.1" ry="0.7" fill="#8d6f4c" opacity="0.66" transform="rotate(-67 19.1 40.5)"/><ellipse cx="16.9" cy="42.0" rx="1.4" ry="0.7" fill="#3b443e" opacity="0.82" transform="rotate(24 16.9 42.0)"/><ellipse cx="41.5" cy="42.8" rx="0.8" ry="0.5" fill="#1f2622" opacity="0.92" transform="rotate(-43 41.5 42.8)"/><ellipse cx="28.8" cy="59.1" rx="1.4" ry="1.0" fill="#1f2622" opacity="0.64" transform="rotate(-59 28.8 59.1)"/><ellipse cx="50.1" cy="51.5" rx="0.5" ry="1.1" fill="#8b9488" opacity="0.63" transform="rotate(-29 50.1 51.5)"/><ellipse cx="38.1" cy="62.0" rx="1.1" ry="0.9" fill="#1f2622" opacity="0.89" transform="rotate(-24 38.1 62.0)"/><ellipse cx="35.4" cy="39.2" rx="1.5" ry="0.5" fill="#6c7468" opacity="0.64" transform="rotate(-7 35.4 39.2)"/><ellipse cx="49.9" cy="60.8" rx="0.6" ry="1.1" fill="#59635a" opacity="0.87" transform="rotate(-61 49.9 60.8)"/><ellipse cx="39.0" cy="47.1" rx="0.9" ry="0.8" fill="#59635a" opacity="0.82" transform="rotate(8 39.0 47.1)"/><ellipse cx="38.4" cy="46.6" rx="0.7" ry="0.7" fill="#6c7468" opacity="0.76" transform="rotate(42 38.4 46.6)"/><ellipse cx="21.4" cy="38.1" rx="1.6" ry="0.8" fill="#a57d52" opacity="0.87" transform="rotate(47 21.4 38.1)"/><ellipse cx="45.1" cy="60.7" rx="0.9" ry="0.5" fill="#6c7468" opacity="0.75" transform="rotate(-47 45.1 60.7)"/><ellipse cx="43.9" cy="52.1" rx="1.2" ry="0.4" fill="#1f2622" opacity="0.63" transform="rotate(10 43.9 52.1)"/><ellipse cx="43.0" cy="52.3" rx="0.5" ry="0.8" fill="#8b9488" opacity="0.83" transform="rotate(-36 43.0 52.3)"/><ellipse cx="15.9" cy="39.9" rx="1.1" ry="1.0" fill="#2a2f2a" opacity="0.67" transform="rotate(55 15.9 39.9)"/><ellipse cx="25.4" cy="60.7" rx="1.4" ry="0.9" fill="#b08a5e" opacity="0.93" transform="rotate(-54 25.4 60.7)"/><ellipse cx="45.0" cy="55.1" rx="0.7" ry="0.7" fill="#3b443e" opacity="0.70" transform="rotate(46 45.0 55.1)"/><ellipse cx="20.2" cy="52.1" rx="1.5" ry="0.6" fill="#1f2622" opacity="0.82" transform="rotate(-10 20.2 52.1)"/><ellipse cx="26.5" cy="39.0" rx="0.6" ry="0.5" fill="#1f2622" opacity="0.84" transform="rotate(26 26.5 39.0)"/><ellipse cx="21.1" cy="60.0" rx="0.5" ry="0.8" fill="#7f8a7e" opacity="0.90" transform="rotate(45 21.1 60.0)"/><ellipse cx="35.0" cy="54.2" rx="1.5" ry="0.5" fill="#3b443e" opacity="0.82" transform="rotate(30 35.0 54.2)"/><ellipse cx="41.6" cy="48.4" rx="0.9" ry="0.7" fill="#1f2622" opacity="0.73" transform="rotate(-50 41.6 48.4)"/><ellipse cx="30.9" cy="42.9" rx="1.3" ry="0.4" fill="#59635a" opacity="0.78" transform="rotate(9 30.9 42.9)"/><ellipse cx="38.0" cy="65.6" rx="1.1" ry="0.9" fill="#6c7468" opacity="0.86" transform="rotate(-62 38.0 65.6)"/><ellipse cx="23.0" cy="46.1" rx="1.2" ry="0.7" fill="#6c7468" opacity="0.91" transform="rotate(-37 23.0 46.1)"/><ellipse cx="32.6" cy="55.2" rx="0.5" ry="0.4" fill="#3b443e" opacity="0.72" transform="rotate(-43 32.6 55.2)"/><ellipse cx="33.8" cy="53.0" rx="0.9" ry="0.6" fill="#1f2622" opacity="0.67" transform="rotate(51 33.8 53.0)"/><ellipse cx="20.7" cy="38.4" rx="1.4" ry="1.0" fill="#a57d52" opacity="0.63" transform="rotate(-33 20.7 38.4)"/><ellipse cx="46.4" cy="82.1" rx="1.3" ry="0.6" fill="#2a2f2a" opacity="0.57" transform="rotate(22 46.4 82.1)"/><ellipse cx="35.2" cy="74.3" rx="1.8" ry="0.7" fill="#7f8a7e" opacity="0.81" transform="rotate(-15 35.2 74.3)"/><ellipse cx="20.9" cy="68.0" rx="0.7" ry="0.4" fill="#1f2622" opacity="0.63" transform="rotate(-27 20.9 68.0)"/><ellipse cx="47.8" cy="69.9" rx="1.7" ry="0.9" fill="#6c7468" opacity="0.60" transform="rotate(-18 47.8 69.9)"/><ellipse cx="33.7" cy="79.6" rx="1.8" ry="0.7" fill="#59635a" opacity="0.61" transform="rotate(-11 33.7 79.6)"/><ellipse cx="17.3" cy="79.3" rx="2.4" ry="0.9" fill="#3b443e" opacity="0.80" transform="rotate(-30 17.3 79.3)"/><ellipse cx="28.5" cy="75.9" rx="2.2" ry="0.5" fill="#a57d52" opacity="0.71" transform="rotate(-16 28.5 75.9)"/><ellipse cx="50.9" cy="72.7" rx="1.8" ry="0.5" fill="#8b9488" opacity="0.80" transform="rotate(-13 50.9 72.7)"/><ellipse cx="37.9" cy="80.2" rx="1.8" ry="1.0" fill="#8b9488" opacity="0.65" transform="rotate(29 37.9 80.2)"/><ellipse cx="49.7" cy="71.9" rx="2.2" ry="0.4" fill="#8b9488" opacity="0.87" transform="rotate(23 49.7 71.9)"/><ellipse cx="41.8" cy="85.0" rx="1.9" ry="0.6" fill="#3b443e" opacity="0.66" transform="rotate(-15 41.8 85.0)"/><ellipse cx="28.7" cy="83.3" rx="2.3" ry="1.1" fill="#7f8a7e" opacity="0.71" transform="rotate(23 28.7 83.3)"/><ellipse cx="34.1" cy="68.1" rx="0.6" ry="1.1" fill="#6c7468" opacity="0.75" transform="rotate(-11 34.1 68.1)"/><ellipse cx="43.4" cy="75.0" rx="1.7" ry="0.8" fill="#1f2622" opacity="0.60" transform="rotate(-29 43.4 75.0)"/><ellipse cx="19.0" cy="79.2" rx="0.9" ry="1.1" fill="#2a2f2a" opacity="0.56" transform="rotate(-22 19.0 79.2)"/><ellipse cx="39.9" cy="79.4" rx="1.9" ry="0.9" fill="#2a2f2a" opacity="0.85" transform="rotate(18 39.9 79.4)"/><ellipse cx="28.1" cy="82.7" rx="2.1" ry="1.0" fill="#2a2f2a" opacity="0.86" transform="rotate(18 28.1 82.7)"/><ellipse cx="47.9" cy="85.0" rx="0.8" ry="0.5" fill="#2a2f2a" opacity="0.56" transform="rotate(30 47.9 85.0)"/><ellipse cx="45.5" cy="82.6" rx="1.7" ry="1.0" fill="#a57d52" opacity="0.77" transform="rotate(0 45.5 82.6)"/><ellipse cx="18.6" cy="69.8" rx="2.0" ry="0.5" fill="#9aa69a" opacity="0.67" transform="rotate(-14 18.6 69.8)"/><ellipse cx="15.8" cy="72.6" rx="1.1" ry="0.9" fill="#9aa69a" opacity="0.87" transform="rotate(19 15.8 72.6)"/><ellipse cx="49.7" cy="77.1" rx="2.1" ry="0.8" fill="#2a2f2a" opacity="0.83" transform="rotate(-29 49.7 77.1)"/><ellipse cx="30.7" cy="81.9" rx="1.2" ry="0.9" fill="#7f8a7e" opacity="0.75" transform="rotate(15 30.7 81.9)"/><ellipse cx="46.0" cy="69.6" rx="2.1" ry="0.5" fill="#2a2f2a" opacity="0.73" transform="rotate(-12 46.0 69.6)"/><ellipse cx="42.4" cy="85.6" rx="0.6" ry="0.7" fill="#3b443e" opacity="0.79" transform="rotate(22 42.4 85.6)"/><ellipse cx="21.6" cy="76.9" rx="1.2" ry="1.0" fill="#8b9488" opacity="0.75" transform="rotate(-20 21.6 76.9)"/><ellipse cx="25.2" cy="71.9" rx="1.9" ry="0.7" fill="#2a2f2a" opacity="0.88" transform="rotate(19 25.2 71.9)"/><ellipse cx="17.9" cy="82.2" rx="1.9" ry="1.0" fill="#a57d52" opacity="0.66" transform="rotate(-24 17.9 82.2)"/><ellipse cx="29.4" cy="75.1" rx="2.2" ry="0.5" fill="#a57d52" opacity="0.56" transform="rotate(-17 29.4 75.1)"/><ellipse cx="25.9" cy="75.7" rx="1.6" ry="0.5" fill="#a57d52" opacity="0.63" transform="rotate(-1 25.9 75.7)"/><ellipse cx="19.6" cy="78.7" rx="1.8" ry="0.8" fill="#2a2f2a" opacity="0.67" transform="rotate(-10 19.6 78.7)"/><ellipse cx="33.8" cy="83.6" rx="1.4" ry="0.8" fill="#9aa69a" opacity="0.61" transform="rotate(-2 33.8 83.6)"/><ellipse cx="39.8" cy="72.6" rx="1.0" ry="0.6" fill="#a57d52" opacity="0.86" transform="rotate(-15 39.8 72.6)"/><ellipse cx="33.3" cy="72.8" rx="2.0" ry="1.0" fill="#59635a" opacity="0.60" transform="rotate(-21 33.3 72.8)"/><ellipse cx="50.1" cy="81.0" rx="1.7" ry="0.6" fill="#6c7468" opacity="0.66" transform="rotate(-18 50.1 81.0)"/><ellipse cx="24.3" cy="85.2" rx="2.4" ry="0.5" fill="#a57d52" opacity="0.59" transform="rotate(-6 24.3 85.2)"/><ellipse cx="20.4" cy="70.7" rx="1.1" ry="0.6" fill="#8b9488" opacity="0.62" transform="rotate(10 20.4 70.7)"/><ellipse cx="47.8" cy="73.1" rx="2.2" ry="0.7" fill="#2a2f2a" opacity="0.69" transform="rotate(20 47.8 73.1)"/><ellipse cx="30.7" cy="72.0" rx="2.4" ry="0.6" fill="#2a2f2a" opacity="0.60" transform="rotate(8 30.7 72.0)"/><ellipse cx="41.6" cy="68.1" rx="1.0" ry="1.0" fill="#59635a" opacity="0.76" transform="rotate(11 41.6 68.1)"/><ellipse cx="30.2" cy="72.1" rx="1.9" ry="1.0" fill="#a57d52" opacity="0.80" transform="rotate(24 30.2 72.1)"/><ellipse cx="23.2" cy="71.3" rx="0.8" ry="0.7" fill="#8b9488" opacity="0.77" transform="rotate(-24 23.2 71.3)"/><ellipse cx="47.2" cy="72.4" rx="1.3" ry="0.9" fill="#1f2622" opacity="0.64" transform="rotate(-3 47.2 72.4)"/><ellipse cx="32.4" cy="68.4" rx="2.1" ry="0.8" fill="#a57d52" opacity="0.88" transform="rotate(-19 32.4 68.4)"/><ellipse cx="47.2" cy="73.9" rx="0.6" ry="1.0" fill="#2a2f2a" opacity="0.56" transform="rotate(4 47.2 73.9)"/><ellipse cx="22.8" cy="80.9" rx="2.3" ry="0.5" fill="#9aa69a" opacity="0.59" transform="rotate(6 22.8 80.9)"/><ellipse cx="31.4" cy="71.7" rx="1.5" ry="0.4" fill="#9aa69a" opacity="0.73" transform="rotate(-4 31.4 71.7)"/><ellipse cx="41.7" cy="76.2" rx="2.4" ry="0.5" fill="#7f8a7e" opacity="0.82" transform="rotate(-23 41.7 76.2)"/><ellipse cx="41.2" cy="79.1" rx="1.7" ry="0.6" fill="#3b443e" opacity="0.69" transform="rotate(-30 41.2 79.1)"/><ellipse cx="17.7" cy="84.5" rx="1.7" ry="0.9" fill="#59635a" opacity="0.64" transform="rotate(-16 17.7 84.5)"/><ellipse cx="25.9" cy="75.2" rx="2.3" ry="1.1" fill="#3b443e" opacity="0.71" transform="rotate(-20 25.9 75.2)"/><ellipse cx="19.7" cy="82.0" rx="2.1" ry="0.8" fill="#3b443e" opacity="0.77" transform="rotate(16 19.7 82.0)"/><ellipse cx="23.1" cy="85.3" rx="1.2" ry="0.8" fill="#3b443e" opacity="0.71" transform="rotate(-12 23.1 85.3)"/><ellipse cx="42.4" cy="79.7" rx="2.0" ry="0.7" fill="#6c7468" opacity="0.64" transform="rotate(-6 42.4 79.7)"/><ellipse cx="39.7" cy="85.7" rx="1.8" ry="0.7" fill="#8b9488" opacity="0.68" transform="rotate(11 39.7 85.7)"/><ellipse cx="25.9" cy="76.6" rx="1.4" ry="0.8" fill="#a57d52" opacity="0.86" transform="rotate(-21 25.9 76.6)"/><ellipse cx="48.4" cy="83.4" rx="0.7" ry="1.0" fill="#9aa69a" opacity="0.82" transform="rotate(-22 48.4 83.4)"/><ellipse cx="34.1" cy="74.2" rx="1.6" ry="0.9" fill="#6c7468" opacity="0.88" transform="rotate(11 34.1 74.2)"/><ellipse cx="25.5" cy="78.9" rx="1.6" ry="1.0" fill="#1f2622" opacity="0.82" transform="rotate(-8 25.5 78.9)"/><ellipse cx="43.3" cy="71.8" rx="1.3" ry="0.8" fill="#59635a" opacity="0.86" transform="rotate(8 43.3 71.8)"/><ellipse cx="50.2" cy="69.6" rx="2.2" ry="0.8" fill="#a57d52" opacity="0.84" transform="rotate(-18 50.2 69.6)"/><ellipse cx="32.8" cy="71.8" rx="0.7" ry="1.0" fill="#a57d52" opacity="0.86" transform="rotate(5 32.8 71.8)"/><ellipse cx="19.3" cy="75.5" rx="2.1" ry="0.7" fill="#7f8a7e" opacity="0.57" transform="rotate(-1 19.3 75.5)"/><ellipse cx="47.6" cy="80.6" rx="1.0" ry="0.5" fill="#59635a" opacity="0.85" transform="rotate(-30 47.6 80.6)"/><ellipse cx="20.8" cy="73.8" rx="1.9" ry="0.7" fill="#8b9488" opacity="0.84" transform="rotate(-7 20.8 73.8)"/><ellipse cx="30.3" cy="86.0" rx="1.8" ry="0.5" fill="#9aa69a" opacity="0.77" transform="rotate(-29 30.3 86.0)"/><ellipse cx="15.7" cy="68.8" rx="1.9" ry="1.1" fill="#2a2f2a" opacity="0.73" transform="rotate(1 15.7 68.8)"/><ellipse cx="42.3" cy="70.6" rx="1.0" ry="0.7" fill="#1f2622" opacity="0.67" transform="rotate(25 42.3 70.6)"/><ellipse cx="38.7" cy="74.1" rx="2.0" ry="0.8" fill="#6c7468" opacity="0.65" transform="rotate(-9 38.7 74.1)"/><ellipse cx="30.2" cy="78.0" rx="2.1" ry="0.6" fill="#3b443e" opacity="0.69" transform="rotate(2 30.2 78.0)"/></g><path d="M24.5 44.5l1-3.2l1 3.2z" fill="#4a534c"/><path d="M27.5 42.5l1-3.6l1 3.6z" fill="#4a534c"/><path d="M35.5 42l1-3.4l1 3.4z" fill="#4a534c"/><path d="M38.5 44l1-3.2l1 3.2z" fill="#4a534c"/><path d="M21.5 48.5l1-2.8l1 2.8z" fill="#4a534c"/><path d="M42 48.5l1-2.8l1 2.8z" fill="#4a534c"/><path d="M19 53.5l1-2.4l1 2.4z" fill="#4a534c"/><path d="M44.6 53.5l1-2.4l1 2.4z" fill="#4a534c"/><path d="M17 59l1-2.2l1 2.2z" fill="#4a534c"/><path d="M46.5 59l1-2.2l1 2.2z" fill="#4a534c"/><path d="M30 41l1-2.5l1 2.5z" fill="#4a534c"/></g><path d="M15.300 66.200c6 1.300 28 1.300 34.200 0v1.500c-6 1.300-28 1.300-34.200 0z" fill="#a88863" opacity="0.9"/><path d="M15.200 69.800c6 1.300 28.500 1.300 34.500 0v.9c-6 1.300-28.500 1.300-34.500 0z" fill="#2a322d" opacity="0.7"/><path d="M15.800 64c6 1.200 27 1.200 33.200 0v.8c-6 1.200-27 1.200-33.200 0z" fill="#232a26" opacity="0.7"/><g filter="url(#rg1)"><path d="M32 84.500h2.600l.3 20h-3.200z" fill="#8a6c4a"/><rect x="30" y="86.200" width="6.600" height="1.300" fill="#5b6558"/><rect x="29.400" y="89.800" width="7.800" height="1.500" fill="#6b6f5c"/><rect x="30.200" y="93.500" width="6.200" height="1.200" fill="#5b6558"/><path d="M31.500 92c-1.200 6-3.500 12-8 17.500c-2.500 3-6 6-11 9" fill="none" stroke-linecap="round" stroke="#566054" stroke-width="3"/><path d="M32.500 99c-1 5-3.500 10-7.500 14c-2 2-4 3.500-6 4.500" fill="none" stroke-linecap="round" stroke="#8a7a5e" stroke-width="1.800"/><path d="M27 90.500l1.800 1.200l-1 2l-2-1.200zM25.500 100l1.500 1l-1 1.600l-1.600-1z" fill="#4f5a50"/><path d="M34.500 108.500c5 .5 9.500-1.500 12-5.500c1.800-3 2-6.500 .3-9c-.8-1.200-2.200-1.800-3.500-1.600" fill="none" stroke-linecap="round" stroke="#5f6a5c" stroke-width="3.200"/><path d="M41 89.500l2.200 1l1.800-1.500l.4 2.500l2 1.200l-2 1.200l-.5 2.300l-2-1.300l-2.300 .3l1.200-2.200z" fill="#66715f"/><path d="M36 108c4.500 0 8.500-2 10.500-5.500" fill="none" stroke-linecap="round" stroke="#a3ad9c" stroke-width="0.900"/><clipPath id="basec1"><path d="M11 118.500c2.500-2.200 6-3.200 9-4.500c3-1.500 6-3.500 8.500-5.500c2.500-.5 5.500-.5 8 0c3 .5 6 1.500 8.500 3c3.500 2 6.500 5 9 9.500c-1 1.600-3 2.600-5 3.200c-4.500 1.500-10 2-15.500 1.800c-6-.2-12-1.200-17-3.200c-2.500-1-4.700-2.500-5.500-4.300z"/></clipPath><path d="M11 118.500c2.500-2.200 6-3.200 9-4.500c3-1.500 6-3.500 8.500-5.500c2.500-.5 5.500-.5 8 0c3 .5 6 1.500 8.500 3c3.500 2 6.500 5 9 9.500c-1 1.600-3 2.600-5 3.200c-4.500 1.500-10 2-15.500 1.800c-6-.2-12-1.200-17-3.200c-2.500-1-4.700-2.500-5.500-4.300z" fill="#6b624e"/><g clip-path="url(#basec1)"><ellipse cx="54.3" cy="124.3" rx="1.2" ry="0.5" fill="#565e53" opacity="0.88" transform="rotate(2 54.3 124.3)"/><ellipse cx="18.7" cy="121.0" rx="0.8" ry="1.1" fill="#a57d52" opacity="0.87" transform="rotate(-35 18.7 121.0)"/><ellipse cx="27.9" cy="117.6" rx="1.3" ry="0.8" fill="#8b9488" opacity="0.71" transform="rotate(-40 27.9 117.6)"/><ellipse cx="12.1" cy="123.3" rx="1.5" ry="0.9" fill="#a57d52" opacity="0.88" transform="rotate(29 12.1 123.3)"/><ellipse cx="37.5" cy="119.0" rx="1.7" ry="0.9" fill="#3b443e" opacity="0.91" transform="rotate(-30 37.5 119.0)"/><ellipse cx="19.6" cy="120.0" rx="1.4" ry="0.9" fill="#a57d52" opacity="0.83" transform="rotate(-36 19.6 120.0)"/><ellipse cx="29.0" cy="108.1" rx="2.3" ry="0.4" fill="#b89068" opacity="0.88" transform="rotate(31 29.0 108.1)"/><ellipse cx="42.0" cy="124.1" rx="0.9" ry="0.4" fill="#a57d52" opacity="0.75" transform="rotate(34 42.0 124.1)"/><ellipse cx="52.0" cy="107.1" rx="1.6" ry="0.4" fill="#a57d52" opacity="0.87" transform="rotate(13 52.0 107.1)"/><ellipse cx="35.9" cy="125.3" rx="1.4" ry="0.4" fill="#8b9488" opacity="0.81" transform="rotate(-21 35.9 125.3)"/><ellipse cx="31.4" cy="114.7" rx="0.8" ry="0.9" fill="#2a2f2a" opacity="0.91" transform="rotate(40 31.4 114.7)"/><ellipse cx="10.7" cy="106.1" rx="1.8" ry="0.5" fill="#a57d52" opacity="0.68" transform="rotate(-25 10.7 106.1)"/><ellipse cx="15.8" cy="106.4" rx="1.9" ry="0.6" fill="#b89068" opacity="0.92" transform="rotate(6 15.8 106.4)"/><ellipse cx="44.8" cy="121.0" rx="2.1" ry="0.9" fill="#a57d52" opacity="0.70" transform="rotate(31 44.8 121.0)"/><ellipse cx="41.9" cy="115.7" rx="2.3" ry="0.6" fill="#a57d52" opacity="0.85" transform="rotate(-39 41.9 115.7)"/><ellipse cx="12.7" cy="124.5" rx="1.8" ry="0.8" fill="#8b9488" opacity="0.71" transform="rotate(36 12.7 124.5)"/><ellipse cx="17.5" cy="124.1" rx="1.5" ry="0.4" fill="#2a2f2a" opacity="0.93" transform="rotate(16 17.5 124.1)"/><ellipse cx="31.1" cy="109.5" rx="2.3" ry="0.5" fill="#8d6f4c" opacity="0.66" transform="rotate(13 31.1 109.5)"/><ellipse cx="31.5" cy="122.3" rx="1.4" ry="0.6" fill="#3b443e" opacity="0.72" transform="rotate(-5 31.5 122.3)"/><ellipse cx="12.7" cy="126.5" rx="1.9" ry="1.0" fill="#2a2f2a" opacity="0.90" transform="rotate(-39 12.7 126.5)"/><ellipse cx="47.4" cy="118.6" rx="1.2" ry="0.7" fill="#2a2f2a" opacity="0.73" transform="rotate(8 47.4 118.6)"/><ellipse cx="37.1" cy="124.8" rx="2.1" ry="0.6" fill="#a57d52" opacity="0.71" transform="rotate(-6 37.1 124.8)"/><ellipse cx="29.0" cy="118.3" rx="2.1" ry="1.0" fill="#a57d52" opacity="0.70" transform="rotate(-22 29.0 118.3)"/><ellipse cx="46.5" cy="124.2" rx="1.6" ry="0.6" fill="#3b443e" opacity="0.84" transform="rotate(23 46.5 124.2)"/><ellipse cx="25.6" cy="107.8" rx="1.6" ry="1.0" fill="#2a2f2a" opacity="0.88" transform="rotate(-11 25.6 107.8)"/><ellipse cx="23.9" cy="107.2" rx="1.3" ry="0.9" fill="#2a2f2a" opacity="0.81" transform="rotate(-39 23.9 107.2)"/><ellipse cx="45.6" cy="115.7" rx="0.8" ry="1.0" fill="#a57d52" opacity="0.68" transform="rotate(34 45.6 115.7)"/><ellipse cx="33.4" cy="111.5" rx="2.1" ry="0.6" fill="#3b443e" opacity="0.81" transform="rotate(-16 33.4 111.5)"/><ellipse cx="19.6" cy="107.9" rx="2.1" ry="0.6" fill="#3b443e" opacity="0.80" transform="rotate(11 19.6 107.9)"/><ellipse cx="45.1" cy="124.0" rx="1.0" ry="1.0" fill="#565e53" opacity="0.73" transform="rotate(-27 45.1 124.0)"/><ellipse cx="26.7" cy="115.7" rx="0.7" ry="0.6" fill="#a57d52" opacity="0.72" transform="rotate(26 26.7 115.7)"/><ellipse cx="37.3" cy="108.0" rx="1.0" ry="1.0" fill="#3b443e" opacity="0.77" transform="rotate(32 37.3 108.0)"/><ellipse cx="19.6" cy="125.4" rx="1.1" ry="0.5" fill="#565e53" opacity="0.87" transform="rotate(37 19.6 125.4)"/><ellipse cx="53.4" cy="111.3" rx="0.7" ry="0.5" fill="#b89068" opacity="0.73" transform="rotate(-37 53.4 111.3)"/><ellipse cx="12.3" cy="117.7" rx="2.2" ry="0.7" fill="#a57d52" opacity="0.90" transform="rotate(10 12.3 117.7)"/><ellipse cx="51.5" cy="120.8" rx="0.8" ry="0.6" fill="#2a2f2a" opacity="0.82" transform="rotate(24 51.5 120.8)"/><ellipse cx="27.7" cy="115.4" rx="0.9" ry="1.1" fill="#2a2f2a" opacity="0.66" transform="rotate(-8 27.7 115.4)"/><ellipse cx="52.4" cy="107.2" rx="1.6" ry="0.4" fill="#a57d52" opacity="0.69" transform="rotate(25 52.4 107.2)"/><ellipse cx="41.9" cy="119.6" rx="2.4" ry="0.4" fill="#b89068" opacity="0.71" transform="rotate(-40 41.9 119.6)"/><ellipse cx="52.3" cy="120.2" rx="1.1" ry="0.8" fill="#8d6f4c" opacity="0.64" transform="rotate(1 52.3 120.2)"/><ellipse cx="26.7" cy="114.2" rx="1.3" ry="0.7" fill="#565e53" opacity="0.68" transform="rotate(-22 26.7 114.2)"/><ellipse cx="51.1" cy="124.7" rx="1.4" ry="1.0" fill="#a57d52" opacity="0.65" transform="rotate(-12 51.1 124.7)"/><ellipse cx="13.5" cy="119.0" rx="1.3" ry="0.9" fill="#565e53" opacity="0.94" transform="rotate(9 13.5 119.0)"/><ellipse cx="47.9" cy="119.2" rx="1.4" ry="0.6" fill="#2a2f2a" opacity="0.77" transform="rotate(40 47.9 119.2)"/><ellipse cx="26.5" cy="113.0" rx="1.9" ry="0.5" fill="#565e53" opacity="0.79" transform="rotate(-22 26.5 113.0)"/><ellipse cx="29.8" cy="109.1" rx="1.4" ry="0.6" fill="#a57d52" opacity="0.69" transform="rotate(-3 29.8 109.1)"/><ellipse cx="25.1" cy="109.5" rx="1.5" ry="0.6" fill="#565e53" opacity="0.64" transform="rotate(25 25.1 109.5)"/><ellipse cx="12.6" cy="124.8" rx="1.8" ry="0.5" fill="#565e53" opacity="0.89" transform="rotate(-25 12.6 124.8)"/><ellipse cx="21.6" cy="110.2" rx="1.3" ry="1.1" fill="#2a2f2a" opacity="0.92" transform="rotate(-28 21.6 110.2)"/><ellipse cx="27.6" cy="114.7" rx="0.9" ry="1.0" fill="#2a2f2a" opacity="0.65" transform="rotate(-38 27.6 114.7)"/><ellipse cx="29.9" cy="116.7" rx="1.5" ry="0.7" fill="#3b443e" opacity="0.70" transform="rotate(6 29.9 116.7)"/><ellipse cx="29.6" cy="125.2" rx="1.0" ry="0.8" fill="#b89068" opacity="0.90" transform="rotate(26 29.6 125.2)"/><ellipse cx="44.7" cy="120.9" rx="1.0" ry="0.5" fill="#a57d52" opacity="0.91" transform="rotate(23 44.7 120.9)"/><ellipse cx="44.3" cy="109.7" rx="0.8" ry="0.9" fill="#8d6f4c" opacity="0.88" transform="rotate(34 44.3 109.7)"/><ellipse cx="23.9" cy="106.2" rx="1.8" ry="0.8" fill="#a57d52" opacity="0.78" transform="rotate(4 23.9 106.2)"/><ellipse cx="25.1" cy="123.7" rx="2.2" ry="0.7" fill="#a57d52" opacity="0.74" transform="rotate(21 25.1 123.7)"/><ellipse cx="16.0" cy="120.0" rx="1.0" ry="0.8" fill="#2a2f2a" opacity="0.61" transform="rotate(7 16.0 120.0)"/><ellipse cx="35.9" cy="124.0" rx="1.2" ry="1.1" fill="#3b443e" opacity="0.62" transform="rotate(5 35.9 124.0)"/><ellipse cx="42.2" cy="123.1" rx="2.2" ry="0.6" fill="#8b9488" opacity="0.80" transform="rotate(-33 42.2 123.1)"/><ellipse cx="23.1" cy="108.3" rx="1.9" ry="0.7" fill="#a57d52" opacity="0.79" transform="rotate(28 23.1 108.3)"/><ellipse cx="16.0" cy="111.1" rx="0.8" ry="0.8" fill="#b89068" opacity="0.64" transform="rotate(-8 16.0 111.1)"/><ellipse cx="35.0" cy="126.1" rx="0.6" ry="1.0" fill="#2a2f2a" opacity="0.69" transform="rotate(36 35.0 126.1)"/><ellipse cx="38.7" cy="115.7" rx="1.0" ry="0.7" fill="#2a2f2a" opacity="0.90" transform="rotate(-18 38.7 115.7)"/><ellipse cx="12.0" cy="108.6" rx="1.5" ry="0.8" fill="#2a2f2a" opacity="0.64" transform="rotate(-25 12.0 108.6)"/><ellipse cx="28.3" cy="108.9" rx="1.7" ry="1.0" fill="#b89068" opacity="0.83" transform="rotate(19 28.3 108.9)"/><ellipse cx="43.6" cy="109.5" rx="2.1" ry="1.1" fill="#8b9488" opacity="0.84" transform="rotate(36 43.6 109.5)"/><ellipse cx="47.8" cy="117.0" rx="1.3" ry="1.1" fill="#2a2f2a" opacity="0.72" transform="rotate(-10 47.8 117.0)"/><ellipse cx="47.7" cy="121.0" rx="2.1" ry="0.8" fill="#2a2f2a" opacity="0.89" transform="rotate(31 47.7 121.0)"/><ellipse cx="12.4" cy="116.9" rx="2.3" ry="1.1" fill="#2a2f2a" opacity="0.90" transform="rotate(40 12.4 116.9)"/><ellipse cx="10.5" cy="108.3" rx="0.9" ry="0.6" fill="#2a2f2a" opacity="0.78" transform="rotate(-38 10.5 108.3)"/><ellipse cx="20.1" cy="114.8" rx="1.3" ry="1.1" fill="#565e53" opacity="0.82" transform="rotate(-35 20.1 114.8)"/><ellipse cx="11.5" cy="119.5" rx="1.1" ry="0.9" fill="#2a2f2a" opacity="0.82" transform="rotate(-36 11.5 119.5)"/><ellipse cx="38.0" cy="111.3" rx="1.5" ry="0.7" fill="#a57d52" opacity="0.70" transform="rotate(-1 38.0 111.3)"/><ellipse cx="25.6" cy="109.5" rx="0.7" ry="1.1" fill="#3b443e" opacity="0.92" transform="rotate(-30 25.6 109.5)"/><ellipse cx="31.0" cy="117.2" rx="0.9" ry="0.5" fill="#b89068" opacity="0.91" transform="rotate(12 31.0 117.2)"/><ellipse cx="36.0" cy="111.8" rx="1.9" ry="0.9" fill="#2a2f2a" opacity="0.89" transform="rotate(38 36.0 111.8)"/><ellipse cx="41.3" cy="110.7" rx="1.3" ry="0.8" fill="#2a2f2a" opacity="0.76" transform="rotate(30 41.3 110.7)"/><ellipse cx="23.7" cy="116.0" rx="2.1" ry="0.4" fill="#2a2f2a" opacity="0.68" transform="rotate(25 23.7 116.0)"/><ellipse cx="34.6" cy="126.4" rx="1.3" ry="1.0" fill="#b89068" opacity="0.90" transform="rotate(-10 34.6 126.4)"/><ellipse cx="24.6" cy="112.8" rx="1.1" ry="1.0" fill="#2a2f2a" opacity="0.70" transform="rotate(-38 24.6 112.8)"/></g><path d="M37 111c2.500-1.200 6.500-1.200 8.500 .2l-.5 2c-2.500 .8-5.500 .6-7.500-.4z" fill="#151916"/></g><text x="11.3" y="135.700" font-family="Liberation Sans,Noto Sans CJK KR,sans-serif" font-weight="900" fill="#16733a" stroke="#16733a" stroke-width="0.45" stroke-linejoin="round" font-size="7.700" textLength="41" lengthAdjust="spacingAndGlyphs">2023. 04. 26.</text><text x="24" y="142.500" font-family="Liberation Sans,Noto Sans CJK KR,sans-serif" font-weight="900" fill="#16733a" stroke="#16733a" stroke-width="0.45" stroke-linejoin="round" font-size="7.700" textLength="28.3" lengthAdjust="spacingAndGlyphs">– 10. 25.</text><text x="11.3" y="148.300" font-family="Liberation Sans,Noto Sans CJK KR,sans-serif" fill="#333" font-weight="700" font-size="3.6" textLength="40.500" lengthAdjust="spacingAndGlyphs">매주 수요일 14:00~16:00</text><text x="11.3" y="155.70" font-family="Liberation Sans,Noto Sans CJK KR,sans-serif" fill="#333" font-size="2.800" textLength="23" lengthAdjust="spacingAndGlyphs">대상 : 성인 100명</text><text x="11.3" y="159.78" font-family="Liberation Sans,Noto Sans CJK KR,sans-serif" fill="#333" font-size="2.800" textLength="36" lengthAdjust="spacingAndGlyphs">장소 : 국립전주박물관 강당</text><text x="11.3" y="163.86" font-family="Liberation Sans,Noto Sans CJK KR,sans-serif" fill="#333" font-size="2.800" textLength="43.5" lengthAdjust="spacingAndGlyphs">접수 : 누리집 사전예약 및 현장접수</text><text x="11.3" y="167.94" font-family="Liberation Sans,Noto Sans CJK KR,sans-serif" fill="#333" font-size="2.800" textLength="35.5" lengthAdjust="spacingAndGlyphs">문의 : 063-220-1016, 1035</text><text x="11.3" y="172.02" font-family="Liberation Sans,Noto Sans CJK KR,sans-serif" fill="#333" font-size="2.800" textLength="52.5" lengthAdjust="spacingAndGlyphs">주최 : 국립전주박물관, (재)백제세계유산센터</text><rect x="75.400" y="79.50" width="7.800" height="3.800" rx="1.900" fill="#fff" stroke="#3e9a5e" stroke-width="0.2" stroke-opacity="0.35"/><text x="76.300" y="82.20" font-family="Liberation Sans,sans-serif" font-size="2.200" font-weight="700" fill="#3e9a5e" fill-opacity="0.7" textLength="6" lengthAdjust="spacingAndGlyphs">04/26</text><text x="85.600" y="81.20" font-family="Liberation Sans,Noto Sans CJK KR,sans-serif" fill="#333" font-weight="700" font-size="2.300" fill-opacity="0.85" textLength="22.1" lengthAdjust="spacingAndGlyphs">백제문화의 정수 백제금동대향로</text><rect x="85.600" y="82.60" width="20.4" height="0.800" fill="#888" opacity="0.6"/><rect x="75.400" y="86.43" width="7.800" height="3.800" rx="1.900" fill="#fff" stroke="#d75a5a" stroke-width="0.2" stroke-opacity="0.35"/><text x="76.300" y="89.13" font-family="Liberation Sans,sans-serif" font-size="2.200" font-weight="700" fill="#d75a5a" fill-opacity="0.7" textLength="6" lengthAdjust="spacingAndGlyphs">05/10</text><text x="85.600" y="88.13" font-family="Liberation Sans,Noto Sans CJK KR,sans-serif" fill="#333" font-weight="700" font-size="2.300" fill-opacity="0.85" textLength="23.3" lengthAdjust="spacingAndGlyphs">백제의 사찰과 불탑</text><rect x="85.600" y="89.53" width="20.8" height="0.800" fill="#888" opacity="0.6"/><rect x="75.400" y="93.36" width="7.800" height="3.800" rx="1.900" fill="#fff" stroke="#d75a5a" stroke-width="0.2" stroke-opacity="0.35"/><text x="76.300" y="96.06" font-family="Liberation Sans,sans-serif" font-size="2.200" font-weight="700" fill="#d75a5a" fill-opacity="0.7" textLength="6" lengthAdjust="spacingAndGlyphs">05/17</text><text x="85.600" y="95.06" font-family="Liberation Sans,Noto Sans CJK KR,sans-serif" fill="#333" font-weight="700" font-size="2.300" fill-opacity="0.85" textLength="25.6" lengthAdjust="spacingAndGlyphs">고고학으로 본 한성기의 백제왕도</text><rect x="85.600" y="96.46" width="16.5" height="0.800" fill="#888" opacity="0.6"/><rect x="75.400" y="100.29" width="7.800" height="3.800" rx="1.900" fill="#fff" stroke="#d75a5a" stroke-width="0.2" stroke-opacity="0.35"/><text x="76.300" y="102.99" font-family="Liberation Sans,sans-serif" font-size="2.200" font-weight="700" fill="#d75a5a" fill-opacity="0.7" textLength="6" lengthAdjust="spacingAndGlyphs">05/24</text><text x="85.600" y="101.99" font-family="Liberation Sans,Noto Sans CJK KR,sans-serif" fill="#333" font-weight="700" font-size="2.300" fill-opacity="0.85" textLength="20.1" lengthAdjust="spacingAndGlyphs">문헌으로 본 웅진기의 백제왕도와 문화</text><rect x="85.600" y="103.39" width="22.7" height="0.800" fill="#888" opacity="0.6"/><rect x="75.400" y="107.22" width="7.800" height="3.800" rx="1.900" fill="#fff" stroke="#3e9a5e" stroke-width="0.2" stroke-opacity="0.35"/><text x="76.300" y="109.92" font-family="Liberation Sans,sans-serif" font-size="2.200" font-weight="700" fill="#3e9a5e" fill-opacity="0.7" textLength="6" lengthAdjust="spacingAndGlyphs">06/14</text><text x="85.600" y="108.92" font-family="Liberation Sans,Noto Sans CJK KR,sans-serif" fill="#333" font-weight="700" font-size="2.300" fill-opacity="0.85" textLength="22.3" lengthAdjust="spacingAndGlyphs">백제의 고분</text><rect x="85.600" y="110.32" width="17.9" height="0.800" fill="#888" opacity="0.6"/><rect x="75.400" y="114.15" width="7.800" height="3.800" rx="1.900" fill="#fff" stroke="#3e9a5e" stroke-width="0.2" stroke-opacity="0.35"/><text x="76.300" y="116.85" font-family="Liberation Sans,sans-serif" font-size="2.200" font-weight="700" fill="#3e9a5e" fill-opacity="0.7" textLength="6" lengthAdjust="spacingAndGlyphs">06/28</text><text x="85.600" y="115.85" font-family="Liberation Sans,Noto Sans CJK KR,sans-serif" fill="#333" font-weight="700" font-size="2.300" fill-opacity="0.85" textLength="29.0" lengthAdjust="spacingAndGlyphs">금동신발로 풀어보는 마지막 백제왕도</text><rect x="85.600" y="117.25" width="19.8" height="0.800" fill="#888" opacity="0.6"/><rect x="75.400" y="121.08" width="7.800" height="3.800" rx="1.900" fill="#fff" stroke="#d75a5a" stroke-width="0.2" stroke-opacity="0.35"/><text x="76.300" y="123.78" font-family="Liberation Sans,sans-serif" font-size="2.200" font-weight="700" fill="#d75a5a" fill-opacity="0.7" textLength="6" lengthAdjust="spacingAndGlyphs">07/05</text><text x="85.600" y="122.78" font-family="Liberation Sans,Noto Sans CJK KR,sans-serif" fill="#333" font-weight="700" font-size="2.300" fill-opacity="0.85" textLength="27.5" lengthAdjust="spacingAndGlyphs">문헌으로 본 사비기의 백제왕도와 문화</text><rect x="85.600" y="124.18" width="19.8" height="0.800" fill="#888" opacity="0.6"/><rect x="75.400" y="128.01" width="7.800" height="3.800" rx="1.900" fill="#fff" stroke="#d75a5a" stroke-width="0.2" stroke-opacity="0.35"/><text x="76.300" y="130.71" font-family="Liberation Sans,sans-serif" font-size="2.200" font-weight="700" fill="#d75a5a" fill-opacity="0.7" textLength="6" lengthAdjust="spacingAndGlyphs">07/19</text><text x="85.600" y="129.71" font-family="Liberation Sans,Noto Sans CJK KR,sans-serif" fill="#333" font-weight="700" font-size="2.300" fill-opacity="0.85" textLength="25.8" lengthAdjust="spacingAndGlyphs">백제 왕릉의 비교 검토</text><rect x="85.600" y="131.11" width="17.2" height="0.800" fill="#888" opacity="0.6"/><rect x="75.400" y="134.94" width="7.800" height="3.800" rx="1.900" fill="#fff" stroke="#3e9a5e" stroke-width="0.2" stroke-opacity="0.35"/><text x="76.300" y="137.64" font-family="Liberation Sans,sans-serif" font-size="2.200" font-weight="700" fill="#3e9a5e" fill-opacity="0.7" textLength="6" lengthAdjust="spacingAndGlyphs">08/16</text><text x="85.600" y="136.64" font-family="Liberation Sans,Noto Sans CJK KR,sans-serif" fill="#333" font-weight="700" font-size="2.300" fill-opacity="0.85" textLength="25.7" lengthAdjust="spacingAndGlyphs">청소년박물관 교육 프로그램</text><rect x="85.600" y="138.04" width="22.9" height="0.800" fill="#888" opacity="0.6"/><rect x="75.400" y="141.87" width="7.800" height="3.800" rx="1.900" fill="#fff" stroke="#3e9a5e" stroke-width="0.2" stroke-opacity="0.35"/><text x="76.300" y="144.57" font-family="Liberation Sans,sans-serif" font-size="2.200" font-weight="700" fill="#3e9a5e" fill-opacity="0.7" textLength="6" lengthAdjust="spacingAndGlyphs">08/30</text><text x="85.600" y="143.57" font-family="Liberation Sans,Noto Sans CJK KR,sans-serif" fill="#333" font-weight="700" font-size="2.300" fill-opacity="0.85" textLength="24.7" lengthAdjust="spacingAndGlyphs">문헌으로 본 익산의 백제 왕도</text><rect x="85.600" y="144.97" width="21.9" height="0.800" fill="#888" opacity="0.6"/><rect x="75.400" y="148.80" width="7.800" height="3.800" rx="1.900" fill="#fff" stroke="#d75a5a" stroke-width="0.2" stroke-opacity="0.35"/><text x="76.300" y="151.50" font-family="Liberation Sans,sans-serif" font-size="2.200" font-weight="700" fill="#d75a5a" fill-opacity="0.7" textLength="6" lengthAdjust="spacingAndGlyphs">09/13</text><text x="85.600" y="150.50" font-family="Liberation Sans,Noto Sans CJK KR,sans-serif" fill="#333" font-weight="700" font-size="2.300" fill-opacity="0.85" textLength="26.0" lengthAdjust="spacingAndGlyphs">백제 불교 문화유산</text><rect x="85.600" y="151.90" width="16.5" height="0.800" fill="#888" opacity="0.6"/><rect x="75.400" y="155.73" width="7.800" height="3.800" rx="1.900" fill="#fff" stroke="#d75a5a" stroke-width="0.2" stroke-opacity="0.35"/><text x="76.300" y="158.43" font-family="Liberation Sans,sans-serif" font-size="2.200" font-weight="700" fill="#d75a5a" fill-opacity="0.7" textLength="6" lengthAdjust="spacingAndGlyphs">09/27</text><text x="85.600" y="157.43" font-family="Liberation Sans,Noto Sans CJK KR,sans-serif" fill="#333" font-weight="700" font-size="2.300" fill-opacity="0.85" textLength="26.8" lengthAdjust="spacingAndGlyphs">백제의 역사를 찾아서 미륵사 발굴 이야기</text><rect x="85.600" y="158.83" width="20.7" height="0.800" fill="#888" opacity="0.6"/><rect x="75.400" y="162.66" width="7.800" height="3.800" rx="1.900" fill="#fff" stroke="#3e9a5e" stroke-width="0.2" stroke-opacity="0.35"/><text x="76.300" y="165.36" font-family="Liberation Sans,sans-serif" font-size="2.200" font-weight="700" fill="#3e9a5e" fill-opacity="0.7" textLength="6" lengthAdjust="spacingAndGlyphs">10/11</text><text x="85.600" y="164.36" font-family="Liberation Sans,Noto Sans CJK KR,sans-serif" fill="#333" font-weight="700" font-size="2.300" fill-opacity="0.85" textLength="22.7" lengthAdjust="spacingAndGlyphs">청소년문화재 박물관에서 배움</text><rect x="85.600" y="165.76" width="16.2" height="0.800" fill="#888" opacity="0.6"/><rect x="75.400" y="169.59" width="7.800" height="3.800" rx="1.900" fill="#fff" stroke="#3e9a5e" stroke-width="0.2" stroke-opacity="0.35"/><text x="76.300" y="172.29" font-family="Liberation Sans,sans-serif" font-size="2.200" font-weight="700" fill="#3e9a5e" fill-opacity="0.7" textLength="6" lengthAdjust="spacingAndGlyphs">10/25</text><text x="85.600" y="171.29" font-family="Liberation Sans,Noto Sans CJK KR,sans-serif" fill="#333" font-weight="700" font-size="2.300" fill-opacity="0.85" textLength="27.8" lengthAdjust="spacingAndGlyphs">백제의 멸망 과정</text><rect x="85.600" y="172.69" width="19.8" height="0.800" fill="#888" opacity="0.6"/><rect x="74.800" y="181.200" width="28" height="0.700" fill="#999"/><rect x="74.800" y="184.500" width="51.9" height="4.500" fill="#1a3567"/></svg>
<div class="bd b1 blue">접수중</div><div class="bd b2">온라인 선착순</div><div class="more">자세히보기</div>
<div class="cat">유아·가족 / 중·고등학생</div><div class="tit">선인들이 즐겨 쓴 중국 글씨본 중국</div><div class="row" style="top:97.9px"><b>교육기간</b>2023.04.26 ~ 2023.10.25</div><div class="row" style="top:123.65px"><b>교육시간</b>10:00 ~ 11:40</div><div class="row" style="top:149.4px"><b>접수기간</b>2023.04.11 09:00 ~ 2023.10.24 00:00</div><div class="row" style="top:175.15px"><b>교육대상</b>초등4학년 ~ 고3학년 단체 1팀(최대 30명)</div></div>
<div class="card" style="left:409.5px;top:272px"><svg class="poster" viewBox="0 0 126.7 189" preserveAspectRatio="none"><rect width="126.7" height="189" fill="#e9e6e0"/><g opacity="1.0"><circle cx="52.2" cy="-1.5" r="12.6" fill="#dddbd7" stroke="#b4b2ae" stroke-width="0.7"/><circle cx="52.2" cy="-1.5" r="10.08" fill="#e3e1dd" stroke="#c2c0bc" stroke-width="0.5"/><ellipse cx="57.98" cy="0.29" rx="2.52" ry="1.64" transform="rotate(17.2 57.98 0.29)" fill="#d3d1cd" stroke="#bab8b4" stroke-width="0.3"/><ellipse cx="55.02" cy="3.85" rx="2.52" ry="1.64" transform="rotate(62.2 55.02 3.85)" fill="#d3d1cd" stroke="#bab8b4" stroke-width="0.3"/><ellipse cx="50.41" cy="4.28" rx="2.52" ry="1.64" transform="rotate(107.2 50.41 4.28)" fill="#d3d1cd" stroke="#bab8b4" stroke-width="0.3"/><ellipse cx="46.85" cy="1.32" rx="2.52" ry="1.64" transform="rotate(152.2 46.85 1.32)" fill="#d3d1cd" stroke="#bab8b4" stroke-width="0.3"/><ellipse cx="46.42" cy="-3.29" rx="2.52" ry="1.64" transform="rotate(197.2 46.42 -3.29)" fill="#d3d1cd" stroke="#bab8b4" stroke-width="0.3"/><ellipse cx="49.38" cy="-6.85" rx="2.52" ry="1.64" transform="rotate(242.2 49.38 -6.85)" fill="#d3d1cd" stroke="#bab8b4" stroke-width="0.3"/><ellipse cx="53.99" cy="-7.28" rx="2.52" ry="1.64" transform="rotate(287.2 53.99 -7.28)" fill="#d3d1cd" stroke="#bab8b4" stroke-width="0.3"/><ellipse cx="57.55" cy="-4.32" rx="2.52" ry="1.64" transform="rotate(332.2 57.55 -4.32)" fill="#d3d1cd" stroke="#bab8b4" stroke-width="0.3"/><circle cx="52.2" cy="-1.5" r="2.52" fill="#d0cec9" stroke="#b8b6b2" stroke-width="0.4"/></g><g opacity="1.0"><circle cx="-11.5" cy="31" r="25.2" fill="#dddbd7" stroke="#b4b2ae" stroke-width="0.7"/><circle cx="-11.5" cy="31" r="20.16" fill="#e3e1dd" stroke="#c2c0bc" stroke-width="0.5"/><ellipse cx="0.06" cy="34.57" rx="5.04" ry="3.28" transform="rotate(17.2 0.06 34.57)" fill="#d3d1cd" stroke="#bab8b4" stroke-width="0.3"/><ellipse cx="-5.86" cy="41.70" rx="5.04" ry="3.28" transform="rotate(62.2 -5.86 41.70)" fill="#d3d1cd" stroke="#bab8b4" stroke-width="0.3"/><ellipse cx="-15.07" cy="42.56" rx="5.04" ry="3.28" transform="rotate(107.2 -15.07 42.56)" fill="#d3d1cd" stroke="#bab8b4" stroke-width="0.3"/><ellipse cx="-22.20" cy="36.64" rx="5.04" ry="3.28" transform="rotate(152.2 -22.20 36.64)" fill="#d3d1cd" stroke="#bab8b4" stroke-width="0.3"/><ellipse cx="-23.06" cy="27.43" rx="5.04" ry="3.28" transform="rotate(197.2 -23.06 27.43)" fill="#d3d1cd" stroke="#bab8b4" stroke-width="0.3"/><ellipse cx="-17.14" cy="20.30" rx="5.04" ry="3.28" transform="rotate(242.2 -17.14 20.30)" fill="#d3d1cd" stroke="#bab8b4" stroke-width="0.3"/><ellipse cx="-7.93" cy="19.44" rx="5.04" ry="3.28" transform="rotate(287.2 -7.93 19.44)" fill="#d3d1cd" stroke="#bab8b4" stroke-width="0.3"/><ellipse cx="-0.80" cy="25.36" rx="5.04" ry="3.28" transform="rotate(332.2 -0.80 25.36)" fill="#d3d1cd" stroke="#bab8b4" stroke-width="0.3"/><circle cx="-11.5" cy="31" r="5.04" fill="#d0cec9" stroke="#b8b6b2" stroke-width="0.4"/></g><g opacity="0.9"><circle cx="9" cy="184.5" r="19.5" fill="#dddbd7" stroke="#b4b2ae" stroke-width="0.7"/><circle cx="9" cy="184.5" r="15.60" fill="#e3e1dd" stroke="#c2c0bc" stroke-width="0.5"/><ellipse cx="17.94" cy="187.27" rx="3.90" ry="2.54" transform="rotate(17.2 17.94 187.27)" fill="#d3d1cd" stroke="#bab8b4" stroke-width="0.3"/><ellipse cx="13.37" cy="192.78" rx="3.90" ry="2.54" transform="rotate(62.2 13.37 192.78)" fill="#d3d1cd" stroke="#bab8b4" stroke-width="0.3"/><ellipse cx="6.23" cy="193.44" rx="3.90" ry="2.54" transform="rotate(107.2 6.23 193.44)" fill="#d3d1cd" stroke="#bab8b4" stroke-width="0.3"/><ellipse cx="0.72" cy="188.87" rx="3.90" ry="2.54" transform="rotate(152.2 0.72 188.87)" fill="#d3d1cd" stroke="#bab8b4" stroke-width="0.3"/><ellipse cx="0.06" cy="181.73" rx="3.90" ry="2.54" transform="rotate(197.2 0.06 181.73)" fill="#d3d1cd" stroke="#bab8b4" stroke-width="0.3"/><ellipse cx="4.63" cy="176.22" rx="3.90" ry="2.54" transform="rotate(242.2 4.63 176.22)" fill="#d3d1cd" stroke="#bab8b4" stroke-width="0.3"/><ellipse cx="11.77" cy="175.56" rx="3.90" ry="2.54" transform="rotate(287.2 11.77 175.56)" fill="#d3d1cd" stroke="#bab8b4" stroke-width="0.3"/><ellipse cx="17.28" cy="180.13" rx="3.90" ry="2.54" transform="rotate(332.2 17.28 180.13)" fill="#d3d1cd" stroke="#bab8b4" stroke-width="0.3"/><circle cx="9" cy="184.5" r="3.90" fill="#d0cec9" stroke="#b8b6b2" stroke-width="0.4"/></g><g opacity="0.9"><circle cx="57.6" cy="122.6" r="5.6" fill="#dddbd7" stroke="#b4b2ae" stroke-width="0.7"/><circle cx="57.6" cy="122.6" r="4.48" fill="#e3e1dd" stroke="#c2c0bc" stroke-width="0.5"/><ellipse cx="60.17" cy="123.39" rx="1.12" ry="0.73" transform="rotate(17.2 60.17 123.39)" fill="#d3d1cd" stroke="#bab8b4" stroke-width="0.3"/><ellipse cx="58.85" cy="124.98" rx="1.12" ry="0.73" transform="rotate(62.2 58.85 124.98)" fill="#d3d1cd" stroke="#bab8b4" stroke-width="0.3"/><ellipse cx="56.81" cy="125.17" rx="1.12" ry="0.73" transform="rotate(107.2 56.81 125.17)" fill="#d3d1cd" stroke="#bab8b4" stroke-width="0.3"/><ellipse cx="55.22" cy="123.85" rx="1.12" ry="0.73" transform="rotate(152.2 55.22 123.85)" fill="#d3d1cd" stroke="#bab8b4" stroke-width="0.3"/><ellipse cx="55.03" cy="121.81" rx="1.12" ry="0.73" transform="rotate(197.2 55.03 121.81)" fill="#d3d1cd" stroke="#bab8b4" stroke-width="0.3"/><ellipse cx="56.35" cy="120.22" rx="1.12" ry="0.73" transform="rotate(242.2 56.35 120.22)" fill="#d3d1cd" stroke="#bab8b4" stroke-width="0.3"/><ellipse cx="58.39" cy="120.03" rx="1.12" ry="0.73" transform="rotate(287.2 58.39 120.03)" fill="#d3d1cd" stroke="#bab8b4" stroke-width="0.3"/><ellipse cx="59.98" cy="121.35" rx="1.12" ry="0.73" transform="rotate(332.2 59.98 121.35)" fill="#d3d1cd" stroke="#bab8b4" stroke-width="0.3"/><circle cx="57.6" cy="122.6" r="1.12" fill="#d0cec9" stroke="#b8b6b2" stroke-width="0.4"/></g><circle cx="72.4" cy="10.4" r="1.6" fill="#c8102e"/><path d="M70.8 10.4a1.6 1.6 0 0 0 3.2 0z" fill="#1d3f94"/><text x="74.8" y="11.4" font-family="Liberation Sans,Noto Sans CJK KR,sans-serif" font-size="2.9" font-weight="700" fill="#333" textLength="13.5" lengthAdjust="spacingAndGlyphs">국립전주박물관</text><rect x="94.3" y="8.3" width="2.6" height="4.2" rx="0.8" fill="#8a5a2b"/><text x="98" y="11.3" font-family="Liberation Sans,Noto Sans CJK KR,sans-serif" font-size="2.6" font-weight="700" fill="#8a5a2b" textLength="18.5" lengthAdjust="spacingAndGlyphs">국립익산박물관</text><text x="70.6" y="36.9" font-family="Liberation Sans,Noto Sans CJK KR,sans-serif" font-weight="900" fill="#1b3d86" font-size="12.400" textLength="46.8" lengthAdjust="spacingAndGlyphs">세계유산</text><text x="94.2" y="52.4" font-family="Liberation Sans,Noto Sans CJK KR,sans-serif" font-weight="900" fill="#1b3d86" font-size="12.400" textLength="23.2" lengthAdjust="spacingAndGlyphs">백제</text><text x="70.6" y="67.6" font-family="Liberation Sans,Noto Sans CJK KR,sans-serif" font-weight="900" fill="#1b3d86" font-size="12.400" textLength="46.8" lengthAdjust="spacingAndGlyphs">아카데미</text><path d="M71.5 50.8c1.5 1.2 4 1 5-.2c1.6 1.5 5 1.5 6.4-.1c2 1.3 5.600 1 7.200-.5c1.300-1.300 .4-3-1.400-3c-.3-1.800-3.600-2.300-5-.9c-1-1.500-4.200-1.500-5 .3c-1.800-.6-3.600 .4-3.500 1.900c-1.800-.2-3.500 1-3.700 2.500z" fill="#f1e6d0" stroke="#c8a468" stroke-width="0.7"/><path d="M76 49.400c.2-1.300 2.400-1.500 2.800-.2m3.400-.2c.5-1.500 3.200-1.500 3.600 .2" fill="none" stroke="#c8a468" stroke-width="0.6"/><filter id="rg2" x="-10%" y="-10%" width="120%" height="120%"><feTurbulence type="fractalNoise" baseFrequency="0.55" numOctaves="2" seed="4" result="n"/><feDisplacementMap in="SourceGraphic" in2="n" scale="2.2" xChannelSelector="R" yChannelSelector="G"/></filter><g filter="url(#rg2)"><g transform="translate(28 34.6) scale(1.12) translate(-28 -33)"><path d="M19.400 19.800l3.200 1.600l4.300 3.300c.6-1.500 1.700-2.600 3-3.100c.3-1.400 1.300-2.600 2.600-3l1 1.500c1.300 .6 2.100 1.900 2 3.400c.8 1.300 .6 3-.4 4.100c-.2 1.800-1.300 3.200-2.900 3.800l.2 2.700h-2.200l-.2-2.500c-1.900-.3-3.500-1.500-4.300-3.200l-2.200-3.600z" fill="#80867c"/><path d="M19.400 19.800l7.200 5.800l-1 1z" fill="#9aa096"/><path d="M30 23.500c1.200-.8 2.800-.4 3.400 1c-.6 1.600-2.400 2.300-3.900 1.500z" fill="#4f5750"/><path d="M28.500 29.500c1.500 1 3.500 1 4.800-.2l-.3 1.600c-1.300 .8-3 .7-4.200-.2z" fill="#3c443e"/></g><path d="M31.300 33.500h3.400l.7 6.500h-4.800z" fill="#4e5750"/><rect x="30.600" y="36.200" width="4.800" height="1" fill="#8d7353"/><clipPath id="eggc2"><path d="M32.5 38.3L28.5 40.5L25.8 42.3L23.2 45L19.7 50L17.7 55L16.2 60L15.5 65L15.2 70L16.7 75L20.7 80L24.5 82.6L28.2 84L33.2 85L38.2 84L41.5 82.6L43.8 80L48.3 75L49.7 70L49.2 65L48.2 60L46.7 55L44.2 50L41.2 45L38.6 42.3L36 40.5L34 38.3z"/></clipPath><path d="M32.5 38.3L28.5 40.5L25.8 42.3L23.2 45L19.7 50L17.7 55L16.2 60L15.5 65L15.2 70L16.7 75L20.7 80L24.5 82.6L28.2 84L33.2 85L38.2 84L41.5 82.6L43.8 80L48.3 75L49.7 70L49.2 65L48.2 60L46.7 55L44.2 50L41.2 45L38.6 42.3L36 40.5L34 38.3z" fill="#383d36" stroke="#383d36" stroke-width="1" stroke-linejoin="round"/><g clip-path="url(#eggc2)"><path d="M14 67h40v20h-40z" fill="#4b554d"/><ellipse cx="26.7" cy="42.2" rx="1.2" ry="0.5" fill="#3b443e" opacity="0.63" transform="rotate(-56 26.7 42.2)"/><ellipse cx="47.7" cy="44.0" rx="0.5" ry="0.7" fill="#1f2622" opacity="0.63" transform="rotate(38 47.7 44.0)"/><ellipse cx="17.1" cy="53.8" rx="1.5" ry="0.9" fill="#3b443e" opacity="0.93" transform="rotate(31 17.1 53.8)"/><ellipse cx="16.8" cy="44.2" rx="1.1" ry="0.5" fill="#8b9488" opacity="0.65" transform="rotate(-40 16.8 44.2)"/><ellipse cx="35.6" cy="53.7" rx="1.2" ry="0.5" fill="#3b443e" opacity="0.82" transform="rotate(25 35.6 53.7)"/><ellipse cx="18.5" cy="57.9" rx="1.1" ry="0.9" fill="#a57d52" opacity="0.84" transform="rotate(39 18.5 57.9)"/><ellipse cx="43.0" cy="51.0" rx="1.5" ry="0.7" fill="#1f2622" opacity="0.88" transform="rotate(-8 43.0 51.0)"/><ellipse cx="17.9" cy="46.4" rx="1.0" ry="0.7" fill="#a57d52" opacity="0.70" transform="rotate(-52 17.9 46.4)"/><ellipse cx="19.3" cy="49.7" rx="1.3" ry="0.5" fill="#a57d52" opacity="0.75" transform="rotate(-51 19.3 49.7)"/><ellipse cx="42.5" cy="54.0" rx="1.5" ry="0.7" fill="#b08a5e" opacity="0.72" transform="rotate(57 42.5 54.0)"/><ellipse cx="35.9" cy="50.8" rx="1.4" ry="1.2" fill="#a57d52" opacity="0.84" transform="rotate(-54 35.9 50.8)"/><ellipse cx="17.2" cy="57.6" rx="1.2" ry="1.2" fill="#59635a" opacity="0.76" transform="rotate(28 17.2 57.6)"/><ellipse cx="46.9" cy="47.7" rx="1.5" ry="0.7" fill="#3b443e" opacity="0.64" transform="rotate(-55 46.9 47.7)"/><ellipse cx="22.9" cy="46.0" rx="1.3" ry="0.7" fill="#59635a" opacity="0.77" transform="rotate(-28 22.9 46.0)"/><ellipse cx="31.2" cy="53.4" rx="1.5" ry="1.1" fill="#59635a" opacity="0.79" transform="rotate(36 31.2 53.4)"/><ellipse cx="50.5" cy="57.1" rx="0.9" ry="0.6" fill="#2a2f2a" opacity="0.66" transform="rotate(-11 50.5 57.1)"/><ellipse cx="38.7" cy="38.3" rx="1.4" ry="0.5" fill="#1f2622" opacity="0.60" transform="rotate(37 38.7 38.3)"/><ellipse cx="34.2" cy="55.1" rx="0.8" ry="0.5" fill="#59635a" opacity="0.78" transform="rotate(-57 34.2 55.1)"/><ellipse cx="31.4" cy="62.4" rx="1.5" ry="0.9" fill="#3b443e" opacity="0.74" transform="rotate(32 31.4 62.4)"/><ellipse cx="29.2" cy="51.5" rx="0.9" ry="0.6" fill="#1f2622" opacity="0.75" transform="rotate(-42 29.2 51.5)"/><ellipse cx="27.2" cy="39.5" rx="0.4" ry="0.5" fill="#2a2f2a" opacity="0.93" transform="rotate(-64 27.2 39.5)"/><ellipse cx="17.5" cy="43.8" rx="0.9" ry="0.9" fill="#6c7468" opacity="0.81" transform="rotate(51 17.5 43.8)"/><ellipse cx="19.4" cy="61.8" rx="1.6" ry="0.8" fill="#a57d52" opacity="0.71" transform="rotate(-34 19.4 61.8)"/><ellipse cx="18.7" cy="47.6" rx="0.7" ry="1.1" fill="#1f2622" opacity="0.78" transform="rotate(-18 18.7 47.6)"/><ellipse cx="49.2" cy="52.8" rx="0.6" ry="0.8" fill="#2a2f2a" opacity="0.87" transform="rotate(6 49.2 52.8)"/><ellipse cx="50.2" cy="62.2" rx="1.2" ry="0.6" fill="#6c7468" opacity="0.92" transform="rotate(21 50.2 62.2)"/><ellipse cx="42.8" cy="52.9" rx="1.3" ry="0.7" fill="#1f2622" opacity="0.81" transform="rotate(-21 42.8 52.9)"/><ellipse cx="44.0" cy="60.9" rx="1.3" ry="0.6" fill="#3b443e" opacity="0.77" transform="rotate(-63 44.0 60.9)"/><ellipse cx="50.6" cy="60.1" rx="1.0" ry="0.6" fill="#3b443e" opacity="0.93" transform="rotate(44 50.6 60.1)"/><ellipse cx="44.1" cy="58.2" rx="0.8" ry="1.2" fill="#2a2f2a" opacity="0.68" transform="rotate(-12 44.1 58.2)"/><ellipse cx="31.9" cy="47.5" rx="1.0" ry="1.2" fill="#3b443e" opacity="0.89" transform="rotate(52 31.9 47.5)"/><ellipse cx="47.7" cy="47.6" rx="1.2" ry="1.1" fill="#2a2f2a" opacity="0.92" transform="rotate(-19 47.7 47.6)"/><ellipse cx="32.2" cy="43.0" rx="1.3" ry="0.7" fill="#8d6f4c" opacity="0.93" transform="rotate(31 32.2 43.0)"/><ellipse cx="31.7" cy="58.8" rx="0.5" ry="0.5" fill="#1f2622" opacity="0.61" transform="rotate(49 31.7 58.8)"/><ellipse cx="44.0" cy="42.1" rx="1.4" ry="1.2" fill="#7f8a7e" opacity="0.93" transform="rotate(-31 44.0 42.1)"/><ellipse cx="34.8" cy="41.7" rx="0.4" ry="1.2" fill="#7f8a7e" opacity="0.64" transform="rotate(-35 34.8 41.7)"/><ellipse cx="30.6" cy="62.4" rx="1.4" ry="0.6" fill="#1f2622" opacity="0.67" transform="rotate(58 30.6 62.4)"/><ellipse cx="23.7" cy="54.4" rx="0.7" ry="0.7" fill="#1f2622" opacity="0.62" transform="rotate(20 23.7 54.4)"/><ellipse cx="47.3" cy="56.5" rx="1.4" ry="0.8" fill="#59635a" opacity="0.92" transform="rotate(58 47.3 56.5)"/><ellipse cx="19.7" cy="42.3" rx="1.0" ry="1.1" fill="#8d6f4c" opacity="0.66" transform="rotate(-69 19.7 42.3)"/><ellipse cx="42.9" cy="42.2" rx="0.6" ry="0.9" fill="#2a2f2a" opacity="0.79" transform="rotate(13 42.9 42.2)"/><ellipse cx="39.6" cy="52.9" rx="1.0" ry="1.0" fill="#3b443e" opacity="0.62" transform="rotate(-22 39.6 52.9)"/><ellipse cx="25.0" cy="59.6" rx="1.0" ry="0.8" fill="#8d6f4c" opacity="0.91" transform="rotate(-54 25.0 59.6)"/><ellipse cx="31.0" cy="55.2" rx="1.0" ry="0.8" fill="#b08a5e" opacity="0.70" transform="rotate(60 31.0 55.2)"/><ellipse cx="34.2" cy="51.4" rx="1.5" ry="1.0" fill="#1f2622" opacity="0.92" transform="rotate(-19 34.2 51.4)"/><ellipse cx="45.2" cy="41.8" rx="0.5" ry="0.8" fill="#2a2f2a" opacity="0.83" transform="rotate(39 45.2 41.8)"/><ellipse cx="17.6" cy="56.7" rx="1.3" ry="1.1" fill="#1f2622" opacity="0.93" transform="rotate(23 17.6 56.7)"/><ellipse cx="20.1" cy="62.7" rx="1.6" ry="0.6" fill="#2a2f2a" opacity="0.74" transform="rotate(54 20.1 62.7)"/><ellipse cx="20.9" cy="56.7" rx="0.7" ry="1.0" fill="#3b443e" opacity="0.74" transform="rotate(37 20.9 56.7)"/><ellipse cx="22.0" cy="46.9" rx="1.3" ry="0.4" fill="#3b443e" opacity="0.76" transform="rotate(-66 22.0 46.9)"/><ellipse cx="28.8" cy="52.5" rx="0.8" ry="1.2" fill="#2a2f2a" opacity="0.94" transform="rotate(-12 28.8 52.5)"/><ellipse cx="50.0" cy="40.9" rx="0.7" ry="0.4" fill="#8d6f4c" opacity="0.66" transform="rotate(-37 50.0 40.9)"/><ellipse cx="44.5" cy="61.8" rx="1.2" ry="1.2" fill="#8b9488" opacity="0.65" transform="rotate(61 44.5 61.8)"/><ellipse cx="35.5" cy="57.6" rx="0.5" ry="0.4" fill="#b08a5e" opacity="0.66" transform="rotate(-52 35.5 57.6)"/><ellipse cx="24.7" cy="38.5" rx="0.5" ry="0.6" fill="#3b443e" opacity="0.90" transform="rotate(-53 24.7 38.5)"/><ellipse cx="24.5" cy="41.4" rx="0.4" ry="1.2" fill="#8b9488" opacity="0.92" transform="rotate(-2 24.5 41.4)"/><ellipse cx="37.4" cy="39.2" rx="1.3" ry="1.2" fill="#1f2622" opacity="0.69" transform="rotate(-24 37.4 39.2)"/><ellipse cx="22.3" cy="46.7" rx="0.8" ry="1.0" fill="#1f2622" opacity="0.76" transform="rotate(-25 22.3 46.7)"/><ellipse cx="24.7" cy="60.5" rx="1.6" ry="0.4" fill="#2a2f2a" opacity="0.86" transform="rotate(-22 24.7 60.5)"/><ellipse cx="33.5" cy="44.9" rx="0.9" ry="0.9" fill="#7f8a7e" opacity="0.75" transform="rotate(56 33.5 44.9)"/><ellipse cx="34.7" cy="62.9" rx="1.6" ry="0.6" fill="#1f2622" opacity="0.94" transform="rotate(17 34.7 62.9)"/><ellipse cx="22.2" cy="62.7" rx="1.3" ry="0.5" fill="#6c7468" opacity="0.94" transform="rotate(-37 22.2 62.7)"/><ellipse cx="15.5" cy="55.5" rx="1.5" ry="0.7" fill="#2a2f2a" opacity="0.63" transform="rotate(27 15.5 55.5)"/><ellipse cx="46.3" cy="56.8" rx="0.7" ry="0.6" fill="#1f2622" opacity="0.62" transform="rotate(-23 46.3 56.8)"/><ellipse cx="20.7" cy="50.5" rx="0.7" ry="1.2" fill="#3b443e" opacity="0.71" transform="rotate(-62 20.7 50.5)"/><ellipse cx="49.8" cy="46.7" rx="0.8" ry="0.4" fill="#8b9488" opacity="0.63" transform="rotate(1 49.8 46.7)"/><ellipse cx="33.1" cy="43.6" rx="1.0" ry="0.4" fill="#1f2622" opacity="0.89" transform="rotate(-34 33.1 43.6)"/><ellipse cx="29.4" cy="39.2" rx="0.4" ry="0.6" fill="#1f2622" opacity="0.63" transform="rotate(65 29.4 39.2)"/><ellipse cx="45.7" cy="42.3" rx="1.5" ry="1.0" fill="#3b443e" opacity="0.74" transform="rotate(13 45.7 42.3)"/><ellipse cx="40.9" cy="51.8" rx="0.7" ry="0.9" fill="#1f2622" opacity="0.62" transform="rotate(61 40.9 51.8)"/><ellipse cx="37.6" cy="58.5" rx="1.4" ry="0.5" fill="#3b443e" opacity="0.86" transform="rotate(-66 37.6 58.5)"/><ellipse cx="44.8" cy="54.4" rx="1.5" ry="0.9" fill="#b08a5e" opacity="0.83" transform="rotate(-49 44.8 54.4)"/><ellipse cx="16.1" cy="41.7" rx="0.8" ry="0.5" fill="#59635a" opacity="0.76" transform="rotate(-58 16.1 41.7)"/><ellipse cx="37.6" cy="55.5" rx="1.2" ry="0.8" fill="#2a2f2a" opacity="0.76" transform="rotate(-53 37.6 55.5)"/><ellipse cx="41.9" cy="52.1" rx="1.0" ry="0.9" fill="#2a2f2a" opacity="0.86" transform="rotate(51 41.9 52.1)"/><ellipse cx="24.1" cy="40.1" rx="0.7" ry="1.0" fill="#1f2622" opacity="0.68" transform="rotate(47 24.1 40.1)"/><ellipse cx="32.8" cy="48.7" rx="1.0" ry="0.9" fill="#8d6f4c" opacity="0.62" transform="rotate(-20 32.8 48.7)"/><ellipse cx="17.8" cy="42.1" rx="0.7" ry="1.0" fill="#1f2622" opacity="0.82" transform="rotate(-36 17.8 42.1)"/><ellipse cx="15.4" cy="39.7" rx="0.7" ry="0.9" fill="#b08a5e" opacity="0.68" transform="rotate(55 15.4 39.7)"/><ellipse cx="25.5" cy="52.5" rx="1.0" ry="0.8" fill="#2a2f2a" opacity="0.95" transform="rotate(70 25.5 52.5)"/><ellipse cx="22.2" cy="65.4" rx="1.5" ry="0.4" fill="#a57d52" opacity="0.63" transform="rotate(59 22.2 65.4)"/><ellipse cx="49.9" cy="50.6" rx="0.7" ry="0.6" fill="#1f2622" opacity="0.63" transform="rotate(-47 49.9 50.6)"/><ellipse cx="20.1" cy="52.7" rx="1.5" ry="0.5" fill="#59635a" opacity="0.82" transform="rotate(1 20.1 52.7)"/><ellipse cx="46.9" cy="57.7" rx="0.7" ry="1.1" fill="#a57d52" opacity="0.74" transform="rotate(-30 46.9 57.7)"/><ellipse cx="15.1" cy="51.8" rx="0.9" ry="0.6" fill="#1f2622" opacity="0.75" transform="rotate(26 15.1 51.8)"/><ellipse cx="26.4" cy="61.5" rx="0.4" ry="1.0" fill="#59635a" opacity="0.74" transform="rotate(-20 26.4 61.5)"/><ellipse cx="40.7" cy="63.2" rx="0.7" ry="0.7" fill="#8b9488" opacity="0.74" transform="rotate(-51 40.7 63.2)"/><ellipse cx="28.0" cy="50.0" rx="0.7" ry="0.4" fill="#2a2f2a" opacity="0.62" transform="rotate(3 28.0 50.0)"/><ellipse cx="37.9" cy="42.2" rx="1.6" ry="0.7" fill="#6c7468" opacity="0.67" transform="rotate(25 37.9 42.2)"/><ellipse cx="43.3" cy="50.0" rx="0.4" ry="1.0" fill="#8b9488" opacity="0.92" transform="rotate(70 43.3 50.0)"/><ellipse cx="22.3" cy="40.3" rx="1.5" ry="0.7" fill="#3b443e" opacity="0.86" transform="rotate(3 22.3 40.3)"/><ellipse cx="32.5" cy="63.5" rx="1.1" ry="0.5" fill="#8b9488" opacity="0.72" transform="rotate(6 32.5 63.5)"/><ellipse cx="24.2" cy="58.7" rx="1.2" ry="0.7" fill="#1f2622" opacity="0.71" transform="rotate(30 24.2 58.7)"/><ellipse cx="19.3" cy="56.0" rx="0.5" ry="0.8" fill="#8d6f4c" opacity="0.77" transform="rotate(-14 19.3 56.0)"/><ellipse cx="31.3" cy="47.3" rx="1.3" ry="0.7" fill="#3b443e" opacity="0.67" transform="rotate(-47 31.3 47.3)"/><ellipse cx="21.3" cy="53.6" rx="0.8" ry="0.7" fill="#8d6f4c" opacity="0.80" transform="rotate(-65 21.3 53.6)"/><ellipse cx="42.0" cy="49.6" rx="0.9" ry="0.8" fill="#8b9488" opacity="0.69" transform="rotate(-55 42.0 49.6)"/><ellipse cx="32.9" cy="54.1" rx="0.8" ry="0.9" fill="#3b443e" opacity="0.82" transform="rotate(-15 32.9 54.1)"/><ellipse cx="18.3" cy="63.1" rx="0.9" ry="0.9" fill="#8b9488" opacity="0.93" transform="rotate(-65 18.3 63.1)"/><ellipse cx="19.6" cy="49.9" rx="1.3" ry="1.0" fill="#3b443e" opacity="0.77" transform="rotate(-52 19.6 49.9)"/><ellipse cx="29.1" cy="64.0" rx="1.4" ry="1.1" fill="#a57d52" opacity="0.69" transform="rotate(-43 29.1 64.0)"/><ellipse cx="23.1" cy="42.3" rx="1.6" ry="0.5" fill="#59635a" opacity="0.85" transform="rotate(47 23.1 42.3)"/><ellipse cx="18.1" cy="59.8" rx="0.4" ry="0.5" fill="#3b443e" opacity="0.92" transform="rotate(7 18.1 59.8)"/><ellipse cx="49.6" cy="55.5" rx="1.0" ry="0.7" fill="#8d6f4c" opacity="0.64" transform="rotate(-52 49.6 55.5)"/><ellipse cx="25.8" cy="64.4" rx="0.6" ry="0.6" fill="#8d6f4c" opacity="0.81" transform="rotate(-68 25.8 64.4)"/><ellipse cx="34.3" cy="65.9" rx="0.7" ry="0.7" fill="#59635a" opacity="0.91" transform="rotate(51 34.3 65.9)"/><ellipse cx="33.9" cy="53.3" rx="0.4" ry="0.7" fill="#7f8a7e" opacity="0.71" transform="rotate(-65 33.9 53.3)"/><ellipse cx="22.0" cy="62.8" rx="1.2" ry="0.5" fill="#1f2622" opacity="0.83" transform="rotate(24 22.0 62.8)"/><ellipse cx="23.2" cy="39.0" rx="0.8" ry="0.7" fill="#7f8a7e" opacity="0.74" transform="rotate(-69 23.2 39.0)"/><ellipse cx="43.7" cy="58.7" rx="1.0" ry="0.6" fill="#1f2622" opacity="0.71" transform="rotate(-21 43.7 58.7)"/><ellipse cx="23.3" cy="44.2" rx="1.3" ry="0.6" fill="#3b443e" opacity="0.77" transform="rotate(-23 23.3 44.2)"/><ellipse cx="47.3" cy="51.6" rx="1.5" ry="0.4" fill="#3b443e" opacity="0.65" transform="rotate(30 47.3 51.6)"/><ellipse cx="17.0" cy="38.7" rx="1.1" ry="0.7" fill="#b08a5e" opacity="0.62" transform="rotate(30 17.0 38.7)"/><ellipse cx="31.2" cy="57.9" rx="0.8" ry="0.5" fill="#2a2f2a" opacity="0.93" transform="rotate(14 31.2 57.9)"/><ellipse cx="21.9" cy="56.3" rx="1.0" ry="0.8" fill="#1f2622" opacity="0.83" transform="rotate(26 21.9 56.3)"/><ellipse cx="45.2" cy="65.6" rx="0.9" ry="0.5" fill="#2a2f2a" opacity="0.70" transform="rotate(19 45.2 65.6)"/><ellipse cx="30.1" cy="62.8" rx="1.1" ry="1.0" fill="#8b9488" opacity="0.72" transform="rotate(9 30.1 62.8)"/><ellipse cx="44.6" cy="50.1" rx="0.5" ry="0.8" fill="#6c7468" opacity="0.79" transform="rotate(44 44.6 50.1)"/><ellipse cx="21.9" cy="48.2" rx="1.5" ry="0.4" fill="#8b9488" opacity="0.69" transform="rotate(33 21.9 48.2)"/><ellipse cx="16.5" cy="39.0" rx="0.5" ry="1.1" fill="#1f2622" opacity="0.67" transform="rotate(-54 16.5 39.0)"/><ellipse cx="47.3" cy="47.5" rx="0.7" ry="1.2" fill="#3b443e" opacity="0.62" transform="rotate(11 47.3 47.5)"/><ellipse cx="48.3" cy="46.3" rx="1.3" ry="0.9" fill="#8d6f4c" opacity="0.82" transform="rotate(-54 48.3 46.3)"/><ellipse cx="15.9" cy="44.5" rx="1.0" ry="1.2" fill="#8d6f4c" opacity="0.74" transform="rotate(-6 15.9 44.5)"/><ellipse cx="47.9" cy="60.8" rx="0.6" ry="0.8" fill="#2a2f2a" opacity="0.88" transform="rotate(7 47.9 60.8)"/><ellipse cx="44.6" cy="59.6" rx="1.1" ry="0.7" fill="#6c7468" opacity="0.76" transform="rotate(-50 44.6 59.6)"/><ellipse cx="33.4" cy="49.0" rx="0.6" ry="0.7" fill="#7f8a7e" opacity="0.61" transform="rotate(69 33.4 49.0)"/><ellipse cx="26.7" cy="65.4" rx="1.5" ry="1.2" fill="#1f2622" opacity="0.82" transform="rotate(-17 26.7 65.4)"/><ellipse cx="18.5" cy="52.0" rx="1.3" ry="0.8" fill="#1f2622" opacity="0.65" transform="rotate(47 18.5 52.0)"/><ellipse cx="37.3" cy="56.9" rx="1.3" ry="1.1" fill="#7f8a7e" opacity="0.87" transform="rotate(5 37.3 56.9)"/><ellipse cx="25.6" cy="53.9" rx="0.8" ry="1.0" fill="#1f2622" opacity="0.75" transform="rotate(-23 25.6 53.9)"/><ellipse cx="23.8" cy="42.3" rx="1.5" ry="0.9" fill="#6c7468" opacity="0.62" transform="rotate(-6 23.8 42.3)"/><ellipse cx="50.7" cy="52.2" rx="0.7" ry="1.0" fill="#7f8a7e" opacity="0.76" transform="rotate(-61 50.7 52.2)"/><ellipse cx="18.7" cy="51.3" rx="1.4" ry="1.1" fill="#6c7468" opacity="0.61" transform="rotate(5 18.7 51.3)"/><ellipse cx="23.4" cy="39.4" rx="1.1" ry="1.1" fill="#1f2622" opacity="0.93" transform="rotate(25 23.4 39.4)"/><ellipse cx="33.5" cy="43.0" rx="1.1" ry="1.0" fill="#7f8a7e" opacity="0.93" transform="rotate(-43 33.5 43.0)"/><ellipse cx="37.9" cy="57.9" rx="0.8" ry="0.4" fill="#6c7468" opacity="0.65" transform="rotate(-18 37.9 57.9)"/><ellipse cx="51.0" cy="39.1" rx="1.3" ry="1.1" fill="#59635a" opacity="0.60" transform="rotate(13 51.0 39.1)"/><ellipse cx="29.7" cy="48.4" rx="1.1" ry="0.5" fill="#2a2f2a" opacity="0.88" transform="rotate(70 29.7 48.4)"/><ellipse cx="32.4" cy="49.4" rx="1.4" ry="0.9" fill="#1f2622" opacity="0.82" transform="rotate(-47 32.4 49.4)"/><ellipse cx="38.5" cy="49.1" rx="0.7" ry="1.2" fill="#7f8a7e" opacity="0.71" transform="rotate(-57 38.5 49.1)"/><ellipse cx="26.2" cy="53.9" rx="0.8" ry="0.7" fill="#59635a" opacity="0.87" transform="rotate(23 26.2 53.9)"/><ellipse cx="38.2" cy="48.9" rx="0.9" ry="1.2" fill="#8b9488" opacity="0.92" transform="rotate(38 38.2 48.9)"/><ellipse cx="19.1" cy="40.5" rx="1.1" ry="0.7" fill="#8d6f4c" opacity="0.66" transform="rotate(-67 19.1 40.5)"/><ellipse cx="16.9" cy="42.0" rx="1.4" ry="0.7" fill="#3b443e" opacity="0.82" transform="rotate(24 16.9 42.0)"/><ellipse cx="41.5" cy="42.8" rx="0.8" ry="0.5" fill="#1f2622" opacity="0.92" transform="rotate(-43 41.5 42.8)"/><ellipse cx="28.8" cy="59.1" rx="1.4" ry="1.0" fill="#1f2622" opacity="0.64" transform="rotate(-59 28.8 59.1)"/><ellipse cx="50.1" cy="51.5" rx="0.5" ry="1.1" fill="#8b9488" opacity="0.63" transform="rotate(-29 50.1 51.5)"/><ellipse cx="38.1" cy="62.0" rx="1.1" ry="0.9" fill="#1f2622" opacity="0.89" transform="rotate(-24 38.1 62.0)"/><ellipse cx="35.4" cy="39.2" rx="1.5" ry="0.5" fill="#6c7468" opacity="0.64" transform="rotate(-7 35.4 39.2)"/><ellipse cx="49.9" cy="60.8" rx="0.6" ry="1.1" fill="#59635a" opacity="0.87" transform="rotate(-61 49.9 60.8)"/><ellipse cx="39.0" cy="47.1" rx="0.9" ry="0.8" fill="#59635a" opacity="0.82" transform="rotate(8 39.0 47.1)"/><ellipse cx="38.4" cy="46.6" rx="0.7" ry="0.7" fill="#6c7468" opacity="0.76" transform="rotate(42 38.4 46.6)"/><ellipse cx="21.4" cy="38.1" rx="1.6" ry="0.8" fill="#a57d52" opacity="0.87" transform="rotate(47 21.4 38.1)"/><ellipse cx="45.1" cy="60.7" rx="0.9" ry="0.5" fill="#6c7468" opacity="0.75" transform="rotate(-47 45.1 60.7)"/><ellipse cx="43.9" cy="52.1" rx="1.2" ry="0.4" fill="#1f2622" opacity="0.63" transform="rotate(10 43.9 52.1)"/><ellipse cx="43.0" cy="52.3" rx="0.5" ry="0.8" fill="#8b9488" opacity="0.83" transform="rotate(-36 43.0 52.3)"/><ellipse cx="15.9" cy="39.9" rx="1.1" ry="1.0" fill="#2a2f2a" opacity="0.67" transform="rotate(55 15.9 39.9)"/><ellipse cx="25.4" cy="60.7" rx="1.4" ry="0.9" fill="#b08a5e" opacity="0.93" transform="rotate(-54 25.4 60.7)"/><ellipse cx="45.0" cy="55.1" rx="0.7" ry="0.7" fill="#3b443e" opacity="0.70" transform="rotate(46 45.0 55.1)"/><ellipse cx="20.2" cy="52.1" rx="1.5" ry="0.6" fill="#1f2622" opacity="0.82" transform="rotate(-10 20.2 52.1)"/><ellipse cx="26.5" cy="39.0" rx="0.6" ry="0.5" fill="#1f2622" opacity="0.84" transform="rotate(26 26.5 39.0)"/><ellipse cx="21.1" cy="60.0" rx="0.5" ry="0.8" fill="#7f8a7e" opacity="0.90" transform="rotate(45 21.1 60.0)"/><ellipse cx="35.0" cy="54.2" rx="1.5" ry="0.5" fill="#3b443e" opacity="0.82" transform="rotate(30 35.0 54.2)"/><ellipse cx="41.6" cy="48.4" rx="0.9" ry="0.7" fill="#1f2622" opacity="0.73" transform="rotate(-50 41.6 48.4)"/><ellipse cx="30.9" cy="42.9" rx="1.3" ry="0.4" fill="#59635a" opacity="0.78" transform="rotate(9 30.9 42.9)"/><ellipse cx="38.0" cy="65.6" rx="1.1" ry="0.9" fill="#6c7468" opacity="0.86" transform="rotate(-62 38.0 65.6)"/><ellipse cx="23.0" cy="46.1" rx="1.2" ry="0.7" fill="#6c7468" opacity="0.91" transform="rotate(-37 23.0 46.1)"/><ellipse cx="32.6" cy="55.2" rx="0.5" ry="0.4" fill="#3b443e" opacity="0.72" transform="rotate(-43 32.6 55.2)"/><ellipse cx="33.8" cy="53.0" rx="0.9" ry="0.6" fill="#1f2622" opacity="0.67" transform="rotate(51 33.8 53.0)"/><ellipse cx="20.7" cy="38.4" rx="1.4" ry="1.0" fill="#a57d52" opacity="0.63" transform="rotate(-33 20.7 38.4)"/><ellipse cx="46.4" cy="82.1" rx="1.3" ry="0.6" fill="#2a2f2a" opacity="0.57" transform="rotate(22 46.4 82.1)"/><ellipse cx="35.2" cy="74.3" rx="1.8" ry="0.7" fill="#7f8a7e" opacity="0.81" transform="rotate(-15 35.2 74.3)"/><ellipse cx="20.9" cy="68.0" rx="0.7" ry="0.4" fill="#1f2622" opacity="0.63" transform="rotate(-27 20.9 68.0)"/><ellipse cx="47.8" cy="69.9" rx="1.7" ry="0.9" fill="#6c7468" opacity="0.60" transform="rotate(-18 47.8 69.9)"/><ellipse cx="33.7" cy="79.6" rx="1.8" ry="0.7" fill="#59635a" opacity="0.61" transform="rotate(-11 33.7 79.6)"/><ellipse cx="17.3" cy="79.3" rx="2.4" ry="0.9" fill="#3b443e" opacity="0.80" transform="rotate(-30 17.3 79.3)"/><ellipse cx="28.5" cy="75.9" rx="2.2" ry="0.5" fill="#a57d52" opacity="0.71" transform="rotate(-16 28.5 75.9)"/><ellipse cx="50.9" cy="72.7" rx="1.8" ry="0.5" fill="#8b9488" opacity="0.80" transform="rotate(-13 50.9 72.7)"/><ellipse cx="37.9" cy="80.2" rx="1.8" ry="1.0" fill="#8b9488" opacity="0.65" transform="rotate(29 37.9 80.2)"/><ellipse cx="49.7" cy="71.9" rx="2.2" ry="0.4" fill="#8b9488" opacity="0.87" transform="rotate(23 49.7 71.9)"/><ellipse cx="41.8" cy="85.0" rx="1.9" ry="0.6" fill="#3b443e" opacity="0.66" transform="rotate(-15 41.8 85.0)"/><ellipse cx="28.7" cy="83.3" rx="2.3" ry="1.1" fill="#7f8a7e" opacity="0.71" transform="rotate(23 28.7 83.3)"/><ellipse cx="34.1" cy="68.1" rx="0.6" ry="1.1" fill="#6c7468" opacity="0.75" transform="rotate(-11 34.1 68.1)"/><ellipse cx="43.4" cy="75.0" rx="1.7" ry="0.8" fill="#1f2622" opacity="0.60" transform="rotate(-29 43.4 75.0)"/><ellipse cx="19.0" cy="79.2" rx="0.9" ry="1.1" fill="#2a2f2a" opacity="0.56" transform="rotate(-22 19.0 79.2)"/><ellipse cx="39.9" cy="79.4" rx="1.9" ry="0.9" fill="#2a2f2a" opacity="0.85" transform="rotate(18 39.9 79.4)"/><ellipse cx="28.1" cy="82.7" rx="2.1" ry="1.0" fill="#2a2f2a" opacity="0.86" transform="rotate(18 28.1 82.7)"/><ellipse cx="47.9" cy="85.0" rx="0.8" ry="0.5" fill="#2a2f2a" opacity="0.56" transform="rotate(30 47.9 85.0)"/><ellipse cx="45.5" cy="82.6" rx="1.7" ry="1.0" fill="#a57d52" opacity="0.77" transform="rotate(0 45.5 82.6)"/><ellipse cx="18.6" cy="69.8" rx="2.0" ry="0.5" fill="#9aa69a" opacity="0.67" transform="rotate(-14 18.6 69.8)"/><ellipse cx="15.8" cy="72.6" rx="1.1" ry="0.9" fill="#9aa69a" opacity="0.87" transform="rotate(19 15.8 72.6)"/><ellipse cx="49.7" cy="77.1" rx="2.1" ry="0.8" fill="#2a2f2a" opacity="0.83" transform="rotate(-29 49.7 77.1)"/><ellipse cx="30.7" cy="81.9" rx="1.2" ry="0.9" fill="#7f8a7e" opacity="0.75" transform="rotate(15 30.7 81.9)"/><ellipse cx="46.0" cy="69.6" rx="2.1" ry="0.5" fill="#2a2f2a" opacity="0.73" transform="rotate(-12 46.0 69.6)"/><ellipse cx="42.4" cy="85.6" rx="0.6" ry="0.7" fill="#3b443e" opacity="0.79" transform="rotate(22 42.4 85.6)"/><ellipse cx="21.6" cy="76.9" rx="1.2" ry="1.0" fill="#8b9488" opacity="0.75" transform="rotate(-20 21.6 76.9)"/><ellipse cx="25.2" cy="71.9" rx="1.9" ry="0.7" fill="#2a2f2a" opacity="0.88" transform="rotate(19 25.2 71.9)"/><ellipse cx="17.9" cy="82.2" rx="1.9" ry="1.0" fill="#a57d52" opacity="0.66" transform="rotate(-24 17.9 82.2)"/><ellipse cx="29.4" cy="75.1" rx="2.2" ry="0.5" fill="#a57d52" opacity="0.56" transform="rotate(-17 29.4 75.1)"/><ellipse cx="25.9" cy="75.7" rx="1.6" ry="0.5" fill="#a57d52" opacity="0.63" transform="rotate(-1 25.9 75.7)"/><ellipse cx="19.6" cy="78.7" rx="1.8" ry="0.8" fill="#2a2f2a" opacity="0.67" transform="rotate(-10 19.6 78.7)"/><ellipse cx="33.8" cy="83.6" rx="1.4" ry="0.8" fill="#9aa69a" opacity="0.61" transform="rotate(-2 33.8 83.6)"/><ellipse cx="39.8" cy="72.6" rx="1.0" ry="0.6" fill="#a57d52" opacity="0.86" transform="rotate(-15 39.8 72.6)"/><ellipse cx="33.3" cy="72.8" rx="2.0" ry="1.0" fill="#59635a" opacity="0.60" transform="rotate(-21 33.3 72.8)"/><ellipse cx="50.1" cy="81.0" rx="1.7" ry="0.6" fill="#6c7468" opacity="0.66" transform="rotate(-18 50.1 81.0)"/><ellipse cx="24.3" cy="85.2" rx="2.4" ry="0.5" fill="#a57d52" opacity="0.59" transform="rotate(-6 24.3 85.2)"/><ellipse cx="20.4" cy="70.7" rx="1.1" ry="0.6" fill="#8b9488" opacity="0.62" transform="rotate(10 20.4 70.7)"/><ellipse cx="47.8" cy="73.1" rx="2.2" ry="0.7" fill="#2a2f2a" opacity="0.69" transform="rotate(20 47.8 73.1)"/><ellipse cx="30.7" cy="72.0" rx="2.4" ry="0.6" fill="#2a2f2a" opacity="0.60" transform="rotate(8 30.7 72.0)"/><ellipse cx="41.6" cy="68.1" rx="1.0" ry="1.0" fill="#59635a" opacity="0.76" transform="rotate(11 41.6 68.1)"/><ellipse cx="30.2" cy="72.1" rx="1.9" ry="1.0" fill="#a57d52" opacity="0.80" transform="rotate(24 30.2 72.1)"/><ellipse cx="23.2" cy="71.3" rx="0.8" ry="0.7" fill="#8b9488" opacity="0.77" transform="rotate(-24 23.2 71.3)"/><ellipse cx="47.2" cy="72.4" rx="1.3" ry="0.9" fill="#1f2622" opacity="0.64" transform="rotate(-3 47.2 72.4)"/><ellipse cx="32.4" cy="68.4" rx="2.1" ry="0.8" fill="#a57d52" opacity="0.88" transform="rotate(-19 32.4 68.4)"/><ellipse cx="47.2" cy="73.9" rx="0.6" ry="1.0" fill="#2a2f2a" opacity="0.56" transform="rotate(4 47.2 73.9)"/><ellipse cx="22.8" cy="80.9" rx="2.3" ry="0.5" fill="#9aa69a" opacity="0.59" transform="rotate(6 22.8 80.9)"/><ellipse cx="31.4" cy="71.7" rx="1.5" ry="0.4" fill="#9aa69a" opacity="0.73" transform="rotate(-4 31.4 71.7)"/><ellipse cx="41.7" cy="76.2" rx="2.4" ry="0.5" fill="#7f8a7e" opacity="0.82" transform="rotate(-23 41.7 76.2)"/><ellipse cx="41.2" cy="79.1" rx="1.7" ry="0.6" fill="#3b443e" opacity="0.69" transform="rotate(-30 41.2 79.1)"/><ellipse cx="17.7" cy="84.5" rx="1.7" ry="0.9" fill="#59635a" opacity="0.64" transform="rotate(-16 17.7 84.5)"/><ellipse cx="25.9" cy="75.2" rx="2.3" ry="1.1" fill="#3b443e" opacity="0.71" transform="rotate(-20 25.9 75.2)"/><ellipse cx="19.7" cy="82.0" rx="2.1" ry="0.8" fill="#3b443e" opacity="0.77" transform="rotate(16 19.7 82.0)"/><ellipse cx="23.1" cy="85.3" rx="1.2" ry="0.8" fill="#3b443e" opacity="0.71" transform="rotate(-12 23.1 85.3)"/><ellipse cx="42.4" cy="79.7" rx="2.0" ry="0.7" fill="#6c7468" opacity="0.64" transform="rotate(-6 42.4 79.7)"/><ellipse cx="39.7" cy="85.7" rx="1.8" ry="0.7" fill="#8b9488" opacity="0.68" transform="rotate(11 39.7 85.7)"/><ellipse cx="25.9" cy="76.6" rx="1.4" ry="0.8" fill="#a57d52" opacity="0.86" transform="rotate(-21 25.9 76.6)"/><ellipse cx="48.4" cy="83.4" rx="0.7" ry="1.0" fill="#9aa69a" opacity="0.82" transform="rotate(-22 48.4 83.4)"/><ellipse cx="34.1" cy="74.2" rx="1.6" ry="0.9" fill="#6c7468" opacity="0.88" transform="rotate(11 34.1 74.2)"/><ellipse cx="25.5" cy="78.9" rx="1.6" ry="1.0" fill="#1f2622" opacity="0.82" transform="rotate(-8 25.5 78.9)"/><ellipse cx="43.3" cy="71.8" rx="1.3" ry="0.8" fill="#59635a" opacity="0.86" transform="rotate(8 43.3 71.8)"/><ellipse cx="50.2" cy="69.6" rx="2.2" ry="0.8" fill="#a57d52" opacity="0.84" transform="rotate(-18 50.2 69.6)"/><ellipse cx="32.8" cy="71.8" rx="0.7" ry="1.0" fill="#a57d52" opacity="0.86" transform="rotate(5 32.8 71.8)"/><ellipse cx="19.3" cy="75.5" rx="2.1" ry="0.7" fill="#7f8a7e" opacity="0.57" transform="rotate(-1 19.3 75.5)"/><ellipse cx="47.6" cy="80.6" rx="1.0" ry="0.5" fill="#59635a" opacity="0.85" transform="rotate(-30 47.6 80.6)"/><ellipse cx="20.8" cy="73.8" rx="1.9" ry="0.7" fill="#8b9488" opacity="0.84" transform="rotate(-7 20.8 73.8)"/><ellipse cx="30.3" cy="86.0" rx="1.8" ry="0.5" fill="#9aa69a" opacity="0.77" transform="rotate(-29 30.3 86.0)"/><ellipse cx="15.7" cy="68.8" rx="1.9" ry="1.1" fill="#2a2f2a" opacity="0.73" transform="rotate(1 15.7 68.8)"/><ellipse cx="42.3" cy="70.6" rx="1.0" ry="0.7" fill="#1f2622" opacity="0.67" transform="rotate(25 42.3 70.6)"/><ellipse cx="38.7" cy="74.1" rx="2.0" ry="0.8" fill="#6c7468" opacity="0.65" transform="rotate(-9 38.7 74.1)"/><ellipse cx="30.2" cy="78.0" rx="2.1" ry="0.6" fill="#3b443e" opacity="0.69" transform="rotate(2 30.2 78.0)"/></g><path d="M24.5 44.5l1-3.2l1 3.2z" fill="#4a534c"/><path d="M27.5 42.5l1-3.6l1 3.6z" fill="#4a534c"/><path d="M35.5 42l1-3.4l1 3.4z" fill="#4a534c"/><path d="M38.5 44l1-3.2l1 3.2z" fill="#4a534c"/><path d="M21.5 48.5l1-2.8l1 2.8z" fill="#4a534c"/><path d="M42 48.5l1-2.8l1 2.8z" fill="#4a534c"/><path d="M19 53.5l1-2.4l1 2.4z" fill="#4a534c"/><path d="M44.6 53.5l1-2.4l1 2.4z" fill="#4a534c"/><path d="M17 59l1-2.2l1 2.2z" fill="#4a534c"/><path d="M46.5 59l1-2.2l1 2.2z" fill="#4a534c"/><path d="M30 41l1-2.5l1 2.5z" fill="#4a534c"/></g><path d="M15.300 66.200c6 1.300 28 1.300 34.200 0v1.500c-6 1.300-28 1.300-34.200 0z" fill="#a88863" opacity="0.9"/><path d="M15.200 69.800c6 1.300 28.500 1.300 34.500 0v.9c-6 1.300-28.500 1.300-34.500 0z" fill="#2a322d" opacity="0.7"/><path d="M15.800 64c6 1.200 27 1.200 33.200 0v.8c-6 1.200-27 1.200-33.200 0z" fill="#232a26" opacity="0.7"/><g filter="url(#rg2)"><path d="M32 84.500h2.600l.3 20h-3.200z" fill="#8a6c4a"/><rect x="30" y="86.200" width="6.600" height="1.300" fill="#5b6558"/><rect x="29.400" y="89.800" width="7.800" height="1.500" fill="#6b6f5c"/><rect x="30.200" y="93.500" width="6.200" height="1.200" fill="#5b6558"/><path d="M31.500 92c-1.200 6-3.500 12-8 17.500c-2.500 3-6 6-11 9" fill="none" stroke-linecap="round" stroke="#566054" stroke-width="3"/><path d="M32.500 99c-1 5-3.500 10-7.500 14c-2 2-4 3.500-6 4.500" fill="none" stroke-linecap="round" stroke="#8a7a5e" stroke-width="1.800"/><path d="M27 90.500l1.800 1.200l-1 2l-2-1.200zM25.500 100l1.500 1l-1 1.600l-1.600-1z" fill="#4f5a50"/><path d="M34.500 108.500c5 .5 9.500-1.500 12-5.500c1.800-3 2-6.500 .3-9c-.8-1.200-2.200-1.800-3.500-1.600" fill="none" stroke-linecap="round" stroke="#5f6a5c" stroke-width="3.200"/><path d="M41 89.500l2.200 1l1.800-1.500l.4 2.500l2 1.200l-2 1.200l-.5 2.300l-2-1.300l-2.300 .3l1.200-2.200z" fill="#66715f"/><path d="M36 108c4.500 0 8.500-2 10.500-5.500" fill="none" stroke-linecap="round" stroke="#a3ad9c" stroke-width="0.900"/><clipPath id="basec2"><path d="M11 118.500c2.500-2.200 6-3.200 9-4.500c3-1.500 6-3.500 8.500-5.500c2.500-.5 5.500-.5 8 0c3 .5 6 1.500 8.500 3c3.500 2 6.500 5 9 9.500c-1 1.600-3 2.600-5 3.200c-4.500 1.500-10 2-15.500 1.800c-6-.2-12-1.200-17-3.200c-2.500-1-4.700-2.500-5.500-4.300z"/></clipPath><path d="M11 118.500c2.500-2.200 6-3.200 9-4.500c3-1.500 6-3.500 8.500-5.500c2.500-.5 5.500-.5 8 0c3 .5 6 1.500 8.500 3c3.500 2 6.500 5 9 9.500c-1 1.600-3 2.600-5 3.200c-4.500 1.500-10 2-15.500 1.800c-6-.2-12-1.200-17-3.200c-2.500-1-4.700-2.500-5.500-4.300z" fill="#6b624e"/><g clip-path="url(#basec2)"><ellipse cx="54.3" cy="124.3" rx="1.2" ry="0.5" fill="#565e53" opacity="0.88" transform="rotate(2 54.3 124.3)"/><ellipse cx="18.7" cy="121.0" rx="0.8" ry="1.1" fill="#a57d52" opacity="0.87" transform="rotate(-35 18.7 121.0)"/><ellipse cx="27.9" cy="117.6" rx="1.3" ry="0.8" fill="#8b9488" opacity="0.71" transform="rotate(-40 27.9 117.6)"/><ellipse cx="12.1" cy="123.3" rx="1.5" ry="0.9" fill="#a57d52" opacity="0.88" transform="rotate(29 12.1 123.3)"/><ellipse cx="37.5" cy="119.0" rx="1.7" ry="0.9" fill="#3b443e" opacity="0.91" transform="rotate(-30 37.5 119.0)"/><ellipse cx="19.6" cy="120.0" rx="1.4" ry="0.9" fill="#a57d52" opacity="0.83" transform="rotate(-36 19.6 120.0)"/><ellipse cx="29.0" cy="108.1" rx="2.3" ry="0.4" fill="#b89068" opacity="0.88" transform="rotate(31 29.0 108.1)"/><ellipse cx="42.0" cy="124.1" rx="0.9" ry="0.4" fill="#a57d52" opacity="0.75" transform="rotate(34 42.0 124.1)"/><ellipse cx="52.0" cy="107.1" rx="1.6" ry="0.4" fill="#a57d52" opacity="0.87" transform="rotate(13 52.0 107.1)"/><ellipse cx="35.9" cy="125.3" rx="1.4" ry="0.4" fill="#8b9488" opacity="0.81" transform="rotate(-21 35.9 125.3)"/><ellipse cx="31.4" cy="114.7" rx="0.8" ry="0.9" fill="#2a2f2a" opacity="0.91" transform="rotate(40 31.4 114.7)"/><ellipse cx="10.7" cy="106.1" rx="1.8" ry="0.5" fill="#a57d52" opacity="0.68" transform="rotate(-25 10.7 106.1)"/><ellipse cx="15.8" cy="106.4" rx="1.9" ry="0.6" fill="#b89068" opacity="0.92" transform="rotate(6 15.8 106.4)"/><ellipse cx="44.8" cy="121.0" rx="2.1" ry="0.9" fill="#a57d52" opacity="0.70" transform="rotate(31 44.8 121.0)"/><ellipse cx="41.9" cy="115.7" rx="2.3" ry="0.6" fill="#a57d52" opacity="0.85" transform="rotate(-39 41.9 115.7)"/><ellipse cx="12.7" cy="124.5" rx="1.8" ry="0.8" fill="#8b9488" opacity="0.71" transform="rotate(36 12.7 124.5)"/><ellipse cx="17.5" cy="124.1" rx="1.5" ry="0.4" fill="#2a2f2a" opacity="0.93" transform="rotate(16 17.5 124.1)"/><ellipse cx="31.1" cy="109.5" rx="2.3" ry="0.5" fill="#8d6f4c" opacity="0.66" transform="rotate(13 31.1 109.5)"/><ellipse cx="31.5" cy="122.3" rx="1.4" ry="0.6" fill="#3b443e" opacity="0.72" transform="rotate(-5 31.5 122.3)"/><ellipse cx="12.7" cy="126.5" rx="1.9" ry="1.0" fill="#2a2f2a" opacity="0.90" transform="rotate(-39 12.7 126.5)"/><ellipse cx="47.4" cy="118.6" rx="1.2" ry="0.7" fill="#2a2f2a" opacity="0.73" transform="rotate(8 47.4 118.6)"/><ellipse cx="37.1" cy="124.8" rx="2.1" ry="0.6" fill="#a57d52" opacity="0.71" transform="rotate(-6 37.1 124.8)"/><ellipse cx="29.0" cy="118.3" rx="2.1" ry="1.0" fill="#a57d52" opacity="0.70" transform="rotate(-22 29.0 118.3)"/><ellipse cx="46.5" cy="124.2" rx="1.6" ry="0.6" fill="#3b443e" opacity="0.84" transform="rotate(23 46.5 124.2)"/><ellipse cx="25.6" cy="107.8" rx="1.6" ry="1.0" fill="#2a2f2a" opacity="0.88" transform="rotate(-11 25.6 107.8)"/><ellipse cx="23.9" cy="107.2" rx="1.3" ry="0.9" fill="#2a2f2a" opacity="0.81" transform="rotate(-39 23.9 107.2)"/><ellipse cx="45.6" cy="115.7" rx="0.8" ry="1.0" fill="#a57d52" opacity="0.68" transform="rotate(34 45.6 115.7)"/><ellipse cx="33.4" cy="111.5" rx="2.1" ry="0.6" fill="#3b443e" opacity="0.81" transform="rotate(-16 33.4 111.5)"/><ellipse cx="19.6" cy="107.9" rx="2.1" ry="0.6" fill="#3b443e" opacity="0.80" transform="rotate(11 19.6 107.9)"/><ellipse cx="45.1" cy="124.0" rx="1.0" ry="1.0" fill="#565e53" opacity="0.73" transform="rotate(-27 45.1 124.0)"/><ellipse cx="26.7" cy="115.7" rx="0.7" ry="0.6" fill="#a57d52" opacity="0.72" transform="rotate(26 26.7 115.7)"/><ellipse cx="37.3" cy="108.0" rx="1.0" ry="1.0" fill="#3b443e" opacity="0.77" transform="rotate(32 37.3 108.0)"/><ellipse cx="19.6" cy="125.4" rx="1.1" ry="0.5" fill="#565e53" opacity="0.87" transform="rotate(37 19.6 125.4)"/><ellipse cx="53.4" cy="111.3" rx="0.7" ry="0.5" fill="#b89068" opacity="0.73" transform="rotate(-37 53.4 111.3)"/><ellipse cx="12.3" cy="117.7" rx="2.2" ry="0.7" fill="#a57d52" opacity="0.90" transform="rotate(10 12.3 117.7)"/><ellipse cx="51.5" cy="120.8" rx="0.8" ry="0.6" fill="#2a2f2a" opacity="0.82" transform="rotate(24 51.5 120.8)"/><ellipse cx="27.7" cy="115.4" rx="0.9" ry="1.1" fill="#2a2f2a" opacity="0.66" transform="rotate(-8 27.7 115.4)"/><ellipse cx="52.4" cy="107.2" rx="1.6" ry="0.4" fill="#a57d52" opacity="0.69" transform="rotate(25 52.4 107.2)"/><ellipse cx="41.9" cy="119.6" rx="2.4" ry="0.4" fill="#b89068" opacity="0.71" transform="rotate(-40 41.9 119.6)"/><ellipse cx="52.3" cy="120.2" rx="1.1" ry="0.8" fill="#8d6f4c" opacity="0.64" transform="rotate(1 52.3 120.2)"/><ellipse cx="26.7" cy="114.2" rx="1.3" ry="0.7" fill="#565e53" opacity="0.68" transform="rotate(-22 26.7 114.2)"/><ellipse cx="51.1" cy="124.7" rx="1.4" ry="1.0" fill="#a57d52" opacity="0.65" transform="rotate(-12 51.1 124.7)"/><ellipse cx="13.5" cy="119.0" rx="1.3" ry="0.9" fill="#565e53" opacity="0.94" transform="rotate(9 13.5 119.0)"/><ellipse cx="47.9" cy="119.2" rx="1.4" ry="0.6" fill="#2a2f2a" opacity="0.77" transform="rotate(40 47.9 119.2)"/><ellipse cx="26.5" cy="113.0" rx="1.9" ry="0.5" fill="#565e53" opacity="0.79" transform="rotate(-22 26.5 113.0)"/><ellipse cx="29.8" cy="109.1" rx="1.4" ry="0.6" fill="#a57d52" opacity="0.69" transform="rotate(-3 29.8 109.1)"/><ellipse cx="25.1" cy="109.5" rx="1.5" ry="0.6" fill="#565e53" opacity="0.64" transform="rotate(25 25.1 109.5)"/><ellipse cx="12.6" cy="124.8" rx="1.8" ry="0.5" fill="#565e53" opacity="0.89" transform="rotate(-25 12.6 124.8)"/><ellipse cx="21.6" cy="110.2" rx="1.3" ry="1.1" fill="#2a2f2a" opacity="0.92" transform="rotate(-28 21.6 110.2)"/><ellipse cx="27.6" cy="114.7" rx="0.9" ry="1.0" fill="#2a2f2a" opacity="0.65" transform="rotate(-38 27.6 114.7)"/><ellipse cx="29.9" cy="116.7" rx="1.5" ry="0.7" fill="#3b443e" opacity="0.70" transform="rotate(6 29.9 116.7)"/><ellipse cx="29.6" cy="125.2" rx="1.0" ry="0.8" fill="#b89068" opacity="0.90" transform="rotate(26 29.6 125.2)"/><ellipse cx="44.7" cy="120.9" rx="1.0" ry="0.5" fill="#a57d52" opacity="0.91" transform="rotate(23 44.7 120.9)"/><ellipse cx="44.3" cy="109.7" rx="0.8" ry="0.9" fill="#8d6f4c" opacity="0.88" transform="rotate(34 44.3 109.7)"/><ellipse cx="23.9" cy="106.2" rx="1.8" ry="0.8" fill="#a57d52" opacity="0.78" transform="rotate(4 23.9 106.2)"/><ellipse cx="25.1" cy="123.7" rx="2.2" ry="0.7" fill="#a57d52" opacity="0.74" transform="rotate(21 25.1 123.7)"/><ellipse cx="16.0" cy="120.0" rx="1.0" ry="0.8" fill="#2a2f2a" opacity="0.61" transform="rotate(7 16.0 120.0)"/><ellipse cx="35.9" cy="124.0" rx="1.2" ry="1.1" fill="#3b443e" opacity="0.62" transform="rotate(5 35.9 124.0)"/><ellipse cx="42.2" cy="123.1" rx="2.2" ry="0.6" fill="#8b9488" opacity="0.80" transform="rotate(-33 42.2 123.1)"/><ellipse cx="23.1" cy="108.3" rx="1.9" ry="0.7" fill="#a57d52" opacity="0.79" transform="rotate(28 23.1 108.3)"/><ellipse cx="16.0" cy="111.1" rx="0.8" ry="0.8" fill="#b89068" opacity="0.64" transform="rotate(-8 16.0 111.1)"/><ellipse cx="35.0" cy="126.1" rx="0.6" ry="1.0" fill="#2a2f2a" opacity="0.69" transform="rotate(36 35.0 126.1)"/><ellipse cx="38.7" cy="115.7" rx="1.0" ry="0.7" fill="#2a2f2a" opacity="0.90" transform="rotate(-18 38.7 115.7)"/><ellipse cx="12.0" cy="108.6" rx="1.5" ry="0.8" fill="#2a2f2a" opacity="0.64" transform="rotate(-25 12.0 108.6)"/><ellipse cx="28.3" cy="108.9" rx="1.7" ry="1.0" fill="#b89068" opacity="0.83" transform="rotate(19 28.3 108.9)"/><ellipse cx="43.6" cy="109.5" rx="2.1" ry="1.1" fill="#8b9488" opacity="0.84" transform="rotate(36 43.6 109.5)"/><ellipse cx="47.8" cy="117.0" rx="1.3" ry="1.1" fill="#2a2f2a" opacity="0.72" transform="rotate(-10 47.8 117.0)"/><ellipse cx="47.7" cy="121.0" rx="2.1" ry="0.8" fill="#2a2f2a" opacity="0.89" transform="rotate(31 47.7 121.0)"/><ellipse cx="12.4" cy="116.9" rx="2.3" ry="1.1" fill="#2a2f2a" opacity="0.90" transform="rotate(40 12.4 116.9)"/><ellipse cx="10.5" cy="108.3" rx="0.9" ry="0.6" fill="#2a2f2a" opacity="0.78" transform="rotate(-38 10.5 108.3)"/><ellipse cx="20.1" cy="114.8" rx="1.3" ry="1.1" fill="#565e53" opacity="0.82" transform="rotate(-35 20.1 114.8)"/><ellipse cx="11.5" cy="119.5" rx="1.1" ry="0.9" fill="#2a2f2a" opacity="0.82" transform="rotate(-36 11.5 119.5)"/><ellipse cx="38.0" cy="111.3" rx="1.5" ry="0.7" fill="#a57d52" opacity="0.70" transform="rotate(-1 38.0 111.3)"/><ellipse cx="25.6" cy="109.5" rx="0.7" ry="1.1" fill="#3b443e" opacity="0.92" transform="rotate(-30 25.6 109.5)"/><ellipse cx="31.0" cy="117.2" rx="0.9" ry="0.5" fill="#b89068" opacity="0.91" transform="rotate(12 31.0 117.2)"/><ellipse cx="36.0" cy="111.8" rx="1.9" ry="0.9" fill="#2a2f2a" opacity="0.89" transform="rotate(38 36.0 111.8)"/><ellipse cx="41.3" cy="110.7" rx="1.3" ry="0.8" fill="#2a2f2a" opacity="0.76" transform="rotate(30 41.3 110.7)"/><ellipse cx="23.7" cy="116.0" rx="2.1" ry="0.4" fill="#2a2f2a" opacity="0.68" transform="rotate(25 23.7 116.0)"/><ellipse cx="34.6" cy="126.4" rx="1.3" ry="1.0" fill="#b89068" opacity="0.90" transform="rotate(-10 34.6 126.4)"/><ellipse cx="24.6" cy="112.8" rx="1.1" ry="1.0" fill="#2a2f2a" opacity="0.70" transform="rotate(-38 24.6 112.8)"/></g><path d="M37 111c2.500-1.200 6.500-1.200 8.500 .2l-.5 2c-2.500 .8-5.500 .6-7.500-.4z" fill="#151916"/></g><text x="11.3" y="135.700" font-family="Liberation Sans,Noto Sans CJK KR,sans-serif" font-weight="900" fill="#16733a" stroke="#16733a" stroke-width="0.45" stroke-linejoin="round" font-size="7.700" textLength="41" lengthAdjust="spacingAndGlyphs">2023. 04. 26.</text><text x="24" y="142.500" font-family="Liberation Sans,Noto Sans CJK KR,sans-serif" font-weight="900" fill="#16733a" stroke="#16733a" stroke-width="0.45" stroke-linejoin="round" font-size="7.700" textLength="28.3" lengthAdjust="spacingAndGlyphs">– 10. 25.</text><text x="11.3" y="148.300" font-family="Liberation Sans,Noto Sans CJK KR,sans-serif" fill="#333" font-weight="700" font-size="3.6" textLength="40.500" lengthAdjust="spacingAndGlyphs">매주 수요일 14:00~16:00</text><text x="11.3" y="155.70" font-family="Liberation Sans,Noto Sans CJK KR,sans-serif" fill="#333" font-size="2.800" textLength="23" lengthAdjust="spacingAndGlyphs">대상 : 성인 100명</text><text x="11.3" y="159.78" font-family="Liberation Sans,Noto Sans CJK KR,sans-serif" fill="#333" font-size="2.800" textLength="36" lengthAdjust="spacingAndGlyphs">장소 : 국립전주박물관 강당</text><text x="11.3" y="163.86" font-family="Liberation Sans,Noto Sans CJK KR,sans-serif" fill="#333" font-size="2.800" textLength="43.5" lengthAdjust="spacingAndGlyphs">접수 : 누리집 사전예약 및 현장접수</text><text x="11.3" y="167.94" font-family="Liberation Sans,Noto Sans CJK KR,sans-serif" fill="#333" font-size="2.800" textLength="35.5" lengthAdjust="spacingAndGlyphs">문의 : 063-220-1016, 1035</text><text x="11.3" y="172.02" font-family="Liberation Sans,Noto Sans CJK KR,sans-serif" fill="#333" font-size="2.800" textLength="52.5" lengthAdjust="spacingAndGlyphs">주최 : 국립전주박물관, (재)백제세계유산센터</text><rect x="75.400" y="79.50" width="7.800" height="3.800" rx="1.900" fill="#fff" stroke="#3e9a5e" stroke-width="0.2" stroke-opacity="0.35"/><text x="76.300" y="82.20" font-family="Liberation Sans,sans-serif" font-size="2.200" font-weight="700" fill="#3e9a5e" fill-opacity="0.7" textLength="6" lengthAdjust="spacingAndGlyphs">04/26</text><text x="85.600" y="81.20" font-family="Liberation Sans,Noto Sans CJK KR,sans-serif" fill="#333" font-weight="700" font-size="2.300" fill-opacity="0.85" textLength="22.1" lengthAdjust="spacingAndGlyphs">백제문화의 정수 백제금동대향로</text><rect x="85.600" y="82.60" width="20.4" height="0.800" fill="#888" opacity="0.6"/><rect x="75.400" y="86.43" width="7.800" height="3.800" rx="1.900" fill="#fff" stroke="#d75a5a" stroke-width="0.2" stroke-opacity="0.35"/><text x="76.300" y="89.13" font-family="Liberation Sans,sans-serif" font-size="2.200" font-weight="700" fill="#d75a5a" fill-opacity="0.7" textLength="6" lengthAdjust="spacingAndGlyphs">05/10</text><text x="85.600" y="88.13" font-family="Liberation Sans,Noto Sans CJK KR,sans-serif" fill="#333" font-weight="700" font-size="2.300" fill-opacity="0.85" textLength="23.3" lengthAdjust="spacingAndGlyphs">백제의 사찰과 불탑</text><rect x="85.600" y="89.53" width="20.8" height="0.800" fill="#888" opacity="0.6"/><rect x="75.400" y="93.36" width="7.800" height="3.800" rx="1.900" fill="#fff" stroke="#d75a5a" stroke-width="0.2" stroke-opacity="0.35"/><text x="76.300" y="96.06" font-family="Liberation Sans,sans-serif" font-size="2.200" font-weight="700" fill="#d75a5a" fill-opacity="0.7" textLength="6" lengthAdjust="spacingAndGlyphs">05/17</text><text x="85.600" y="95.06" font-family="Liberation Sans,Noto Sans CJK KR,sans-serif" fill="#333" font-weight="700" font-size="2.300" fill-opacity="0.85" textLength="25.6" lengthAdjust="spacingAndGlyphs">고고학으로 본 한성기의 백제왕도</text><rect x="85.600" y="96.46" width="16.5" height="0.800" fill="#888" opacity="0.6"/><rect x="75.400" y="100.29" width="7.800" height="3.800" rx="1.900" fill="#fff" stroke="#d75a5a" stroke-width="0.2" stroke-opacity="0.35"/><text x="76.300" y="102.99" font-family="Liberation Sans,sans-serif" font-size="2.200" font-weight="700" fill="#d75a5a" fill-opacity="0.7" textLength="6" lengthAdjust="spacingAndGlyphs">05/24</text><text x="85.600" y="101.99" font-family="Liberation Sans,Noto Sans CJK KR,sans-serif" fill="#333" font-weight="700" font-size="2.300" fill-opacity="0.85" textLength="20.1" lengthAdjust="spacingAndGlyphs">문헌으로 본 웅진기의 백제왕도와 문화</text><rect x="85.600" y="103.39" width="22.7" height="0.800" fill="#888" opacity="0.6"/><rect x="75.400" y="107.22" width="7.800" height="3.800" rx="1.900" fill="#fff" stroke="#3e9a5e" stroke-width="0.2" stroke-opacity="0.35"/><text x="76.300" y="109.92" font-family="Liberation Sans,sans-serif" font-size="2.200" font-weight="700" fill="#3e9a5e" fill-opacity="0.7" textLength="6" lengthAdjust="spacingAndGlyphs">06/14</text><text x="85.600" y="108.92" font-family="Liberation Sans,Noto Sans CJK KR,sans-serif" fill="#333" font-weight="700" font-size="2.300" fill-opacity="0.85" textLength="22.3" lengthAdjust="spacingAndGlyphs">백제의 고분</text><rect x="85.600" y="110.32" width="17.9" height="0.800" fill="#888" opacity="0.6"/><rect x="75.400" y="114.15" width="7.800" height="3.800" rx="1.900" fill="#fff" stroke="#3e9a5e" stroke-width="0.2" stroke-opacity="0.35"/><text x="76.300" y="116.85" font-family="Liberation Sans,sans-serif" font-size="2.200" font-weight="700" fill="#3e9a5e" fill-opacity="0.7" textLength="6" lengthAdjust="spacingAndGlyphs">06/28</text><text x="85.600" y="115.85" font-family="Liberation Sans,Noto Sans CJK KR,sans-serif" fill="#333" font-weight="700" font-size="2.300" fill-opacity="0.85" textLength="29.0" lengthAdjust="spacingAndGlyphs">금동신발로 풀어보는 마지막 백제왕도</text><rect x="85.600" y="117.25" width="19.8" height="0.800" fill="#888" opacity="0.6"/><rect x="75.400" y="121.08" width="7.800" height="3.800" rx="1.900" fill="#fff" stroke="#d75a5a" stroke-width="0.2" stroke-opacity="0.35"/><text x="76.300" y="123.78" font-family="Liberation Sans,sans-serif" font-size="2.200" font-weight="700" fill="#d75a5a" fill-opacity="0.7" textLength="6" lengthAdjust="spacingAndGlyphs">07/05</text><text x="85.600" y="122.78" font-family="Liberation Sans,Noto Sans CJK KR,sans-serif" fill="#333" font-weight="700" font-size="2.300" fill-opacity="0.85" textLength="27.5" lengthAdjust="spacingAndGlyphs">문헌으로 본 사비기의 백제왕도와 문화</text><rect x="85.600" y="124.18" width="19.8" height="0.800" fill="#888" opacity="0.6"/><rect x="75.400" y="128.01" width="7.800" height="3.800" rx="1.900" fill="#fff" stroke="#d75a5a" stroke-width="0.2" stroke-opacity="0.35"/><text x="76.300" y="130.71" font-family="Liberation Sans,sans-serif" font-size="2.200" font-weight="700" fill="#d75a5a" fill-opacity="0.7" textLength="6" lengthAdjust="spacingAndGlyphs">07/19</text><text x="85.600" y="129.71" font-family="Liberation Sans,Noto Sans CJK KR,sans-serif" fill="#333" font-weight="700" font-size="2.300" fill-opacity="0.85" textLength="25.8" lengthAdjust="spacingAndGlyphs">백제 왕릉의 비교 검토</text><rect x="85.600" y="131.11" width="17.2" height="0.800" fill="#888" opacity="0.6"/><rect x="75.400" y="134.94" width="7.800" height="3.800" rx="1.900" fill="#fff" stroke="#3e9a5e" stroke-width="0.2" stroke-opacity="0.35"/><text x="76.300" y="137.64" font-family="Liberation Sans,sans-serif" font-size="2.200" font-weight="700" fill="#3e9a5e" fill-opacity="0.7" textLength="6" lengthAdjust="spacingAndGlyphs">08/16</text><text x="85.600" y="136.64" font-family="Liberation Sans,Noto Sans CJK KR,sans-serif" fill="#333" font-weight="700" font-size="2.300" fill-opacity="0.85" textLength="25.7" lengthAdjust="spacingAndGlyphs">청소년박물관 교육 프로그램</text><rect x="85.600" y="138.04" width="22.9" height="0.800" fill="#888" opacity="0.6"/><rect x="75.400" y="141.87" width="7.800" height="3.800" rx="1.900" fill="#fff" stroke="#3e9a5e" stroke-width="0.2" stroke-opacity="0.35"/><text x="76.300" y="144.57" font-family="Liberation Sans,sans-serif" font-size="2.200" font-weight="700" fill="#3e9a5e" fill-opacity="0.7" textLength="6" lengthAdjust="spacingAndGlyphs">08/30</text><text x="85.600" y="143.57" font-family="Liberation Sans,Noto Sans CJK KR,sans-serif" fill="#333" font-weight="700" font-size="2.300" fill-opacity="0.85" textLength="24.7" lengthAdjust="spacingAndGlyphs">문헌으로 본 익산의 백제 왕도</text><rect x="85.600" y="144.97" width="21.9" height="0.800" fill="#888" opacity="0.6"/><rect x="75.400" y="148.80" width="7.800" height="3.800" rx="1.900" fill="#fff" stroke="#d75a5a" stroke-width="0.2" stroke-opacity="0.35"/><text x="76.300" y="151.50" font-family="Liberation Sans,sans-serif" font-size="2.200" font-weight="700" fill="#d75a5a" fill-opacity="0.7" textLength="6" lengthAdjust="spacingAndGlyphs">09/13</text><text x="85.600" y="150.50" font-family="Liberation Sans,Noto Sans CJK KR,sans-serif" fill="#333" font-weight="700" font-size="2.300" fill-opacity="0.85" textLength="26.0" lengthAdjust="spacingAndGlyphs">백제 불교 문화유산</text><rect x="85.600" y="151.90" width="16.5" height="0.800" fill="#888" opacity="0.6"/><rect x="75.400" y="155.73" width="7.800" height="3.800" rx="1.900" fill="#fff" stroke="#d75a5a" stroke-width="0.2" stroke-opacity="0.35"/><text x="76.300" y="158.43" font-family="Liberation Sans,sans-serif" font-size="2.200" font-weight="700" fill="#d75a5a" fill-opacity="0.7" textLength="6" lengthAdjust="spacingAndGlyphs">09/27</text><text x="85.600" y="157.43" font-family="Liberation Sans,Noto Sans CJK KR,sans-serif" fill="#333" font-weight="700" font-size="2.300" fill-opacity="0.85" textLength="26.8" lengthAdjust="spacingAndGlyphs">백제의 역사를 찾아서 미륵사 발굴 이야기</text><rect x="85.600" y="158.83" width="20.7" height="0.800" fill="#888" opacity="0.6"/><rect x="75.400" y="162.66" width="7.800" height="3.800" rx="1.900" fill="#fff" stroke="#3e9a5e" stroke-width="0.2" stroke-opacity="0.35"/><text x="76.300" y="165.36" font-family="Liberation Sans,sans-serif" font-size="2.200" font-weight="700" fill="#3e9a5e" fill-opacity="0.7" textLength="6" lengthAdjust="spacingAndGlyphs">10/11</text><text x="85.600" y="164.36" font-family="Liberation Sans,Noto Sans CJK KR,sans-serif" fill="#333" font-weight="700" font-size="2.300" fill-opacity="0.85" textLength="22.7" lengthAdjust="spacingAndGlyphs">청소년문화재 박물관에서 배움</text><rect x="85.600" y="165.76" width="16.2" height="0.800" fill="#888" opacity="0.6"/><rect x="75.400" y="169.59" width="7.800" height="3.800" rx="1.900" fill="#fff" stroke="#3e9a5e" stroke-width="0.2" stroke-opacity="0.35"/><text x="76.300" y="172.29" font-family="Liberation Sans,sans-serif" font-size="2.200" font-weight="700" fill="#3e9a5e" fill-opacity="0.7" textLength="6" lengthAdjust="spacingAndGlyphs">10/25</text><text x="85.600" y="171.29" font-family="Liberation Sans,Noto Sans CJK KR,sans-serif" fill="#333" font-weight="700" font-size="2.300" fill-opacity="0.85" textLength="27.8" lengthAdjust="spacingAndGlyphs">백제의 멸망 과정</text><rect x="85.600" y="172.69" width="19.8" height="0.800" fill="#888" opacity="0.6"/><rect x="74.800" y="181.200" width="28" height="0.700" fill="#999"/><rect x="74.800" y="184.500" width="51.9" height="4.500" fill="#1a3567"/></svg>
<div class="bd b1 blue">접수중</div><div class="bd b2">온라인 선착순</div><div class="more">자세히보기</div>
<div class="cat">유아·가족 / 중·고등학생</div><div class="tit">선인들이 즐겨 쓴 중국 글씨본 중국</div><div class="row" style="top:97.9px"><b>교육기간</b>2023.04.26 ~ 2023.10.25</div><div class="row" style="top:123.65px"><b>교육시간</b>10:00 ~ 11:40</div><div class="row" style="top:149.4px"><b>접수기간</b>2023.04.11 09:00 ~ 2023.10.24 00:00</div><div class="row" style="top:175.15px"><b>교육대상</b>초등4학년 ~ 고3학년 단체 1팀(최대 30명)</div></div>

<div class="card" style="left:-44px;top:503.3px"><svg class="poster" viewBox="0 0 126.7 189" preserveAspectRatio="none"><rect width="126.7" height="189" fill="#e9e6e0"/><g opacity="1.0"><circle cx="52.2" cy="-1.5" r="12.6" fill="#dddbd7" stroke="#b4b2ae" stroke-width="0.7"/><circle cx="52.2" cy="-1.5" r="10.08" fill="#e3e1dd" stroke="#c2c0bc" stroke-width="0.5"/><ellipse cx="57.98" cy="0.29" rx="2.52" ry="1.64" transform="rotate(17.2 57.98 0.29)" fill="#d3d1cd" stroke="#bab8b4" stroke-width="0.3"/><ellipse cx="55.02" cy="3.85" rx="2.52" ry="1.64" transform="rotate(62.2 55.02 3.85)" fill="#d3d1cd" stroke="#bab8b4" stroke-width="0.3"/><ellipse cx="50.41" cy="4.28" rx="2.52" ry="1.64" transform="rotate(107.2 50.41 4.28)" fill="#d3d1cd" stroke="#bab8b4" stroke-width="0.3"/><ellipse cx="46.85" cy="1.32" rx="2.52" ry="1.64" transform="rotate(152.2 46.85 1.32)" fill="#d3d1cd" stroke="#bab8b4" stroke-width="0.3"/><ellipse cx="46.42" cy="-3.29" rx="2.52" ry="1.64" transform="rotate(197.2 46.42 -3.29)" fill="#d3d1cd" stroke="#bab8b4" stroke-width="0.3"/><ellipse cx="49.38" cy="-6.85" rx="2.52" ry="1.64" transform="rotate(242.2 49.38 -6.85)" fill="#d3d1cd" stroke="#bab8b4" stroke-width="0.3"/><ellipse cx="53.99" cy="-7.28" rx="2.52" ry="1.64" transform="rotate(287.2 53.99 -7.28)" fill="#d3d1cd" stroke="#bab8b4" stroke-width="0.3"/><ellipse cx="57.55" cy="-4.32" rx="2.52" ry="1.64" transform="rotate(332.2 57.55 -4.32)" fill="#d3d1cd" stroke="#bab8b4" stroke-width="0.3"/><circle cx="52.2" cy="-1.5" r="2.52" fill="#d0cec9" stroke="#b8b6b2" stroke-width="0.4"/></g><g opacity="1.0"><circle cx="-11.5" cy="31" r="25.2" fill="#dddbd7" stroke="#b4b2ae" stroke-width="0.7"/><circle cx="-11.5" cy="31" r="20.16" fill="#e3e1dd" stroke="#c2c0bc" stroke-width="0.5"/><ellipse cx="0.06" cy="34.57" rx="5.04" ry="3.28" transform="rotate(17.2 0.06 34.57)" fill="#d3d1cd" stroke="#bab8b4" stroke-width="0.3"/><ellipse cx="-5.86" cy="41.70" rx="5.04" ry="3.28" transform="rotate(62.2 -5.86 41.70)" fill="#d3d1cd" stroke="#bab8b4" stroke-width="0.3"/><ellipse cx="-15.07" cy="42.56" rx="5.04" ry="3.28" transform="rotate(107.2 -15.07 42.56)" fill="#d3d1cd" stroke="#bab8b4" stroke-width="0.3"/><ellipse cx="-22.20" cy="36.64" rx="5.04" ry="3.28" transform="rotate(152.2 -22.20 36.64)" fill="#d3d1cd" stroke="#bab8b4" stroke-width="0.3"/><ellipse cx="-23.06" cy="27.43" rx="5.04" ry="3.28" transform="rotate(197.2 -23.06 27.43)" fill="#d3d1cd" stroke="#bab8b4" stroke-width="0.3"/><ellipse cx="-17.14" cy="20.30" rx="5.04" ry="3.28" transform="rotate(242.2 -17.14 20.30)" fill="#d3d1cd" stroke="#bab8b4" stroke-width="0.3"/><ellipse cx="-7.93" cy="19.44" rx="5.04" ry="3.28" transform="rotate(287.2 -7.93 19.44)" fill="#d3d1cd" stroke="#bab8b4" stroke-width="0.3"/><ellipse cx="-0.80" cy="25.36" rx="5.04" ry="3.28" transform="rotate(332.2 -0.80 25.36)" fill="#d3d1cd" stroke="#bab8b4" stroke-width="0.3"/><circle cx="-11.5" cy="31" r="5.04" fill="#d0cec9" stroke="#b8b6b2" stroke-width="0.4"/></g><g opacity="0.9"><circle cx="9" cy="184.5" r="19.5" fill="#dddbd7" stroke="#b4b2ae" stroke-width="0.7"/><circle cx="9" cy="184.5" r="15.60" fill="#e3e1dd" stroke="#c2c0bc" stroke-width="0.5"/><ellipse cx="17.94" cy="187.27" rx="3.90" ry="2.54" transform="rotate(17.2 17.94 187.27)" fill="#d3d1cd" stroke="#bab8b4" stroke-width="0.3"/><ellipse cx="13.37" cy="192.78" rx="3.90" ry="2.54" transform="rotate(62.2 13.37 192.78)" fill="#d3d1cd" stroke="#bab8b4" stroke-width="0.3"/><ellipse cx="6.23" cy="193.44" rx="3.90" ry="2.54" transform="rotate(107.2 6.23 193.44)" fill="#d3d1cd" stroke="#bab8b4" stroke-width="0.3"/><ellipse cx="0.72" cy="188.87" rx="3.90" ry="2.54" transform="rotate(152.2 0.72 188.87)" fill="#d3d1cd" stroke="#bab8b4" stroke-width="0.3"/><ellipse cx="0.06" cy="181.73" rx="3.90" ry="2.54" transform="rotate(197.2 0.06 181.73)" fill="#d3d1cd" stroke="#bab8b4" stroke-width="0.3"/><ellipse cx="4.63" cy="176.22" rx="3.90" ry="2.54" transform="rotate(242.2 4.63 176.22)" fill="#d3d1cd" stroke="#bab8b4" stroke-width="0.3"/><ellipse cx="11.77" cy="175.56" rx="3.90" ry="2.54" transform="rotate(287.2 11.77 175.56)" fill="#d3d1cd" stroke="#bab8b4" stroke-width="0.3"/><ellipse cx="17.28" cy="180.13" rx="3.90" ry="2.54" transform="rotate(332.2 17.28 180.13)" fill="#d3d1cd" stroke="#bab8b4" stroke-width="0.3"/><circle cx="9" cy="184.5" r="3.90" fill="#d0cec9" stroke="#b8b6b2" stroke-width="0.4"/></g><g opacity="0.9"><circle cx="57.6" cy="122.6" r="5.6" fill="#dddbd7" stroke="#b4b2ae" stroke-width="0.7"/><circle cx="57.6" cy="122.6" r="4.48" fill="#e3e1dd" stroke="#c2c0bc" stroke-width="0.5"/><ellipse cx="60.17" cy="123.39" rx="1.12" ry="0.73" transform="rotate(17.2 60.17 123.39)" fill="#d3d1cd" stroke="#bab8b4" stroke-width="0.3"/><ellipse cx="58.85" cy="124.98" rx="1.12" ry="0.73" transform="rotate(62.2 58.85 124.98)" fill="#d3d1cd" stroke="#bab8b4" stroke-width="0.3"/><ellipse cx="56.81" cy="125.17" rx="1.12" ry="0.73" transform="rotate(107.2 56.81 125.17)" fill="#d3d1cd" stroke="#bab8b4" stroke-width="0.3"/><ellipse cx="55.22" cy="123.85" rx="1.12" ry="0.73" transform="rotate(152.2 55.22 123.85)" fill="#d3d1cd" stroke="#bab8b4" stroke-width="0.3"/><ellipse cx="55.03" cy="121.81" rx="1.12" ry="0.73" transform="rotate(197.2 55.03 121.81)" fill="#d3d1cd" stroke="#bab8b4" stroke-width="0.3"/><ellipse cx="56.35" cy="120.22" rx="1.12" ry="0.73" transform="rotate(242.2 56.35 120.22)" fill="#d3d1cd" stroke="#bab8b4" stroke-width="0.3"/><ellipse cx="58.39" cy="120.03" rx="1.12" ry="0.73" transform="rotate(287.2 58.39 120.03)" fill="#d3d1cd" stroke="#bab8b4" stroke-width="0.3"/><ellipse cx="59.98" cy="121.35" rx="1.12" ry="0.73" transform="rotate(332.2 59.98 121.35)" fill="#d3d1cd" stroke="#bab8b4" stroke-width="0.3"/><circle cx="57.6" cy="122.6" r="1.12" fill="#d0cec9" stroke="#b8b6b2" stroke-width="0.4"/></g><circle cx="72.4" cy="10.4" r="1.6" fill="#c8102e"/><path d="M70.8 10.4a1.6 1.6 0 0 0 3.2 0z" fill="#1d3f94"/><text x="74.8" y="11.4" font-family="Liberation Sans,Noto Sans CJK KR,sans-serif" font-size="2.9" font-weight="700" fill="#333" textLength="13.5" lengthAdjust="spacingAndGlyphs">국립전주박물관</text><rect x="94.3" y="8.3" width="2.6" height="4.2" rx="0.8" fill="#8a5a2b"/><text x="98" y="11.3" font-family="Liberation Sans,Noto Sans CJK KR,sans-serif" font-size="2.6" font-weight="700" fill="#8a5a2b" textLength="18.5" lengthAdjust="spacingAndGlyphs">국립익산박물관</text><text x="70.6" y="36.9" font-family="Liberation Sans,Noto Sans CJK KR,sans-serif" font-weight="900" fill="#1b3d86" font-size="12.400" textLength="46.8" lengthAdjust="spacingAndGlyphs">세계유산</text><text x="94.2" y="52.4" font-family="Liberation Sans,Noto Sans CJK KR,sans-serif" font-weight="900" fill="#1b3d86" font-size="12.400" textLength="23.2" lengthAdjust="spacingAndGlyphs">백제</text><text x="70.6" y="67.6" font-family="Liberation Sans,Noto Sans CJK KR,sans-serif" font-weight="900" fill="#1b3d86" font-size="12.400" textLength="46.8" lengthAdjust="spacingAndGlyphs">아카데미</text><path d="M71.5 50.8c1.5 1.2 4 1 5-.2c1.6 1.5 5 1.5 6.4-.1c2 1.3 5.600 1 7.200-.5c1.300-1.300 .4-3-1.400-3c-.3-1.800-3.600-2.300-5-.9c-1-1.500-4.200-1.500-5 .3c-1.800-.6-3.600 .4-3.500 1.900c-1.800-.2-3.500 1-3.700 2.500z" fill="#f1e6d0" stroke="#c8a468" stroke-width="0.7"/><path d="M76 49.400c.2-1.300 2.400-1.500 2.800-.2m3.400-.2c.5-1.500 3.200-1.500 3.600 .2" fill="none" stroke="#c8a468" stroke-width="0.6"/><filter id="rg3" x="-10%" y="-10%" width="120%" height="120%"><feTurbulence type="fractalNoise" baseFrequency="0.55" numOctaves="2" seed="4" result="n"/><feDisplacementMap in="SourceGraphic" in2="n" scale="2.2" xChannelSelector="R" yChannelSelector="G"/></filter><g filter="url(#rg3)"><g transform="translate(28 34.6) scale(1.12) translate(-28 -33)"><path d="M19.400 19.800l3.200 1.600l4.300 3.300c.6-1.500 1.700-2.600 3-3.100c.3-1.400 1.300-2.600 2.600-3l1 1.500c1.300 .6 2.100 1.900 2 3.400c.8 1.300 .6 3-.4 4.100c-.2 1.800-1.300 3.200-2.900 3.800l.2 2.700h-2.200l-.2-2.500c-1.900-.3-3.500-1.500-4.300-3.200l-2.200-3.600z" fill="#80867c"/><path d="M19.400 19.800l7.200 5.800l-1 1z" fill="#9aa096"/><path d="M30 23.500c1.200-.8 2.800-.4 3.400 1c-.6 1.600-2.400 2.300-3.900 1.500z" fill="#4f5750"/><path d="M28.500 29.500c1.500 1 3.500 1 4.800-.2l-.3 1.600c-1.300 .8-3 .7-4.200-.2z" fill="#3c443e"/></g><path d="M31.300 33.500h3.400l.7 6.500h-4.800z" fill="#4e5750"/><rect x="30.600" y="36.200" width="4.800" height="1" fill="#8d7353"/><clipPath id="eggc3"><path d="M32.5 38.3L28.5 40.5L25.8 42.3L23.2 45L19.7 50L17.7 55L16.2 60L15.5 65L15.2 70L16.7 75L20.7 80L24.5 82.6L28.2 84L33.2 85L38.2 84L41.5 82.6L43.8 80L48.3 75L49.7 70L49.2 65L48.2 60L46.7 55L44.2 50L41.2 45L38.6 42.3L36 40.5L34 38.3z"/></clipPath><path d="M32.5 38.3L28.5 40.5L25.8 42.3L23.2 45L19.7 50L17.7 55L16.2 60L15.5 65L15.2 70L16.7 75L20.7 80L24.5 82.6L28.2 84L33.2 85L38.2 84L41.5 82.6L43.8 80L48.3 75L49.7 70L49.2 65L48.2 60L46.7 55L44.2 50L41.2 45L38.6 42.3L36 40.5L34 38.3z" fill="#383d36" stroke="#383d36" stroke-width="1" stroke-linejoin="round"/><g clip-path="url(#eggc3)"><path d="M14 67h40v20h-40z" fill="#4b554d"/><ellipse cx="26.7" cy="42.2" rx="1.2" ry="0.5" fill="#3b443e" opacity="0.63" transform="rotate(-56 26.7 42.2)"/><ellipse cx="47.7" cy="44.0" rx="0.5" ry="0.7" fill="#1f2622" opacity="0.63" transform="rotate(38 47.7 44.0)"/><ellipse cx="17.1" cy="53.8" rx="1.5" ry="0.9" fill="#3b443e" opacity="0.93" transform="rotate(31 17.1 53.8)"/><ellipse cx="16.8" cy="44.2" rx="1.1" ry="0.5" fill="#8b9488" opacity="0.65" transform="rotate(-40 16.8 44.2)"/><ellipse cx="35.6" cy="53.7" rx="1.2" ry="0.5" fill="#3b443e" opacity="0.82" transform="rotate(25 35.6 53.7)"/><ellipse cx="18.5" cy="57.9" rx="1.1" ry="0.9" fill="#a57d52" opacity="0.84" transform="rotate(39 18.5 57.9)"/><ellipse cx="43.0" cy="51.0" rx="1.5" ry="0.7" fill="#1f2622" opacity="0.88" transform="rotate(-8 43.0 51.0)"/><ellipse cx="17.9" cy="46.4" rx="1.0" ry="0.7" fill="#a57d52" opacity="0.70" transform="rotate(-52 17.9 46.4)"/><ellipse cx="19.3" cy="49.7" rx="1.3" ry="0.5" fill="#a57d52" opacity="0.75" transform="rotate(-51 19.3 49.7)"/><ellipse cx="42.5" cy="54.0" rx="1.5" ry="0.7" fill="#b08a5e" opacity="0.72" transform="rotate(57 42.5 54.0)"/><ellipse cx="35.9" cy="50.8" rx="1.4" ry="1.2" fill="#a57d52" opacity="0.84" transform="rotate(-54 35.9 50.8)"/><ellipse cx="17.2" cy="57.6" rx="1.2" ry="1.2" fill="#59635a" opacity="0.76" transform="rotate(28 17.2 57.6)"/><ellipse cx="46.9" cy="47.7" rx="1.5" ry="0.7" fill="#3b443e" opacity="0.64" transform="rotate(-55 46.9 47.7)"/><ellipse cx="22.9" cy="46.0" rx="1.3" ry="0.7" fill="#59635a" opacity="0.77" transform="rotate(-28 22.9 46.0)"/><ellipse cx="31.2" cy="53.4" rx="1.5" ry="1.1" fill="#59635a" opacity="0.79" transform="rotate(36 31.2 53.4)"/><ellipse cx="50.5" cy="57.1" rx="0.9" ry="0.6" fill="#2a2f2a" opacity="0.66" transform="rotate(-11 50.5 57.1)"/><ellipse cx="38.7" cy="38.3" rx="1.4" ry="0.5" fill="#1f2622" opacity="0.60" transform="rotate(37 38.7 38.3)"/><ellipse cx="34.2" cy="55.1" rx="0.8" ry="0.5" fill="#59635a" opacity="0.78" transform="rotate(-57 34.2 55.1)"/><ellipse cx="31.4" cy="62.4" rx="1.5" ry="0.9" fill="#3b443e" opacity="0.74" transform="rotate(32 31.4 62.4)"/><ellipse cx="29.2" cy="51.5" rx="0.9" ry="0.6" fill="#1f2622" opacity="0.75" transform="rotate(-42 29.2 51.5)"/><ellipse cx="27.2" cy="39.5" rx="0.4" ry="0.5" fill="#2a2f2a" opacity="0.93" transform="rotate(-64 27.2 39.5)"/><ellipse cx="17.5" cy="43.8" rx="0.9" ry="0.9" fill="#6c7468" opacity="0.81" transform="rotate(51 17.5 43.8)"/><ellipse cx="19.4" cy="61.8" rx="1.6" ry="0.8" fill="#a57d52" opacity="0.71" transform="rotate(-34 19.4 61.8)"/><ellipse cx="18.7" cy="47.6" rx="0.7" ry="1.1" fill="#1f2622" opacity="0.78" transform="rotate(-18 18.7 47.6)"/><ellipse cx="49.2" cy="52.8" rx="0.6" ry="0.8" fill="#2a2f2a" opacity="0.87" transform="rotate(6 49.2 52.8)"/><ellipse cx="50.2" cy="62.2" rx="1.2" ry="0.6" fill="#6c7468" opacity="0.92" transform="rotate(21 50.2 62.2)"/><ellipse cx="42.8" cy="52.9" rx="1.3" ry="0.7" fill="#1f2622" opacity="0.81" transform="rotate(-21 42.8 52.9)"/><ellipse cx="44.0" cy="60.9" rx="1.3" ry="0.6" fill="#3b443e" opacity="0.77" transform="rotate(-63 44.0 60.9)"/><ellipse cx="50.6" cy="60.1" rx="1.0" ry="0.6" fill="#3b443e" opacity="0.93" transform="rotate(44 50.6 60.1)"/><ellipse cx="44.1" cy="58.2" rx="0.8" ry="1.2" fill="#2a2f2a" opacity="0.68" transform="rotate(-12 44.1 58.2)"/><ellipse cx="31.9" cy="47.5" rx="1.0" ry="1.2" fill="#3b443e" opacity="0.89" transform="rotate(52 31.9 47.5)"/><ellipse cx="47.7" cy="47.6" rx="1.2" ry="1.1" fill="#2a2f2a" opacity="0.92" transform="rotate(-19 47.7 47.6)"/><ellipse cx="32.2" cy="43.0" rx="1.3" ry="0.7" fill="#8d6f4c" opacity="0.93" transform="rotate(31 32.2 43.0)"/><ellipse cx="31.7" cy="58.8" rx="0.5" ry="0.5" fill="#1f2622" opacity="0.61" transform="rotate(49 31.7 58.8)"/><ellipse cx="44.0" cy="42.1" rx="1.4" ry="1.2" fill="#7f8a7e" opacity="0.93" transform="rotate(-31 44.0 42.1)"/><ellipse cx="34.8" cy="41.7" rx="0.4" ry="1.2" fill="#7f8a7e" opacity="0.64" transform="rotate(-35 34.8 41.7)"/><ellipse cx="30.6" cy="62.4" rx="1.4" ry="0.6" fill="#1f2622" opacity="0.67" transform="rotate(58 30.6 62.4)"/><ellipse cx="23.7" cy="54.4" rx="0.7" ry="0.7" fill="#1f2622" opacity="0.62" transform="rotate(20 23.7 54.4)"/><ellipse cx="47.3" cy="56.5" rx="1.4" ry="0.8" fill="#59635a" opacity="0.92" transform="rotate(58 47.3 56.5)"/><ellipse cx="19.7" cy="42.3" rx="1.0" ry="1.1" fill="#8d6f4c" opacity="0.66" transform="rotate(-69 19.7 42.3)"/><ellipse cx="42.9" cy="42.2" rx="0.6" ry="0.9" fill="#2a2f2a" opacity="0.79" transform="rotate(13 42.9 42.2)"/><ellipse cx="39.6" cy="52.9" rx="1.0" ry="1.0" fill="#3b443e" opacity="0.62" transform="rotate(-22 39.6 52.9)"/><ellipse cx="25.0" cy="59.6" rx="1.0" ry="0.8" fill="#8d6f4c" opacity="0.91" transform="rotate(-54 25.0 59.6)"/><ellipse cx="31.0" cy="55.2" rx="1.0" ry="0.8" fill="#b08a5e" opacity="0.70" transform="rotate(60 31.0 55.2)"/><ellipse cx="34.2" cy="51.4" rx="1.5" ry="1.0" fill="#1f2622" opacity="0.92" transform="rotate(-19 34.2 51.4)"/><ellipse cx="45.2" cy="41.8" rx="0.5" ry="0.8" fill="#2a2f2a" opacity="0.83" transform="rotate(39 45.2 41.8)"/><ellipse cx="17.6" cy="56.7" rx="1.3" ry="1.1" fill="#1f2622" opacity="0.93" transform="rotate(23 17.6 56.7)"/><ellipse cx="20.1" cy="62.7" rx="1.6" ry="0.6" fill="#2a2f2a" opacity="0.74" transform="rotate(54 20.1 62.7)"/><ellipse cx="20.9" cy="56.7" rx="0.7" ry="1.0" fill="#3b443e" opacity="0.74" transform="rotate(37 20.9 56.7)"/><ellipse cx="22.0" cy="46.9" rx="1.3" ry="0.4" fill="#3b443e" opacity="0.76" transform="rotate(-66 22.0 46.9)"/><ellipse cx="28.8" cy="52.5" rx="0.8" ry="1.2" fill="#2a2f2a" opacity="0.94" transform="rotate(-12 28.8 52.5)"/><ellipse cx="50.0" cy="40.9" rx="0.7" ry="0.4" fill="#8d6f4c" opacity="0.66" transform="rotate(-37 50.0 40.9)"/><ellipse cx="44.5" cy="61.8" rx="1.2" ry="1.2" fill="#8b9488" opacity="0.65" transform="rotate(61 44.5 61.8)"/><ellipse cx="35.5" cy="57.6" rx="0.5" ry="0.4" fill="#b08a5e" opacity="0.66" transform="rotate(-52 35.5 57.6)"/><ellipse cx="24.7" cy="38.5" rx="0.5" ry="0.6" fill="#3b443e" opacity="0.90" transform="rotate(-53 24.7 38.5)"/><ellipse cx="24.5" cy="41.4" rx="0.4" ry="1.2" fill="#8b9488" opacity="0.92" transform="rotate(-2 24.5 41.4)"/><ellipse cx="37.4" cy="39.2" rx="1.3" ry="1.2" fill="#1f2622" opacity="0.69" transform="rotate(-24 37.4 39.2)"/><ellipse cx="22.3" cy="46.7" rx="0.8" ry="1.0" fill="#1f2622" opacity="0.76" transform="rotate(-25 22.3 46.7)"/><ellipse cx="24.7" cy="60.5" rx="1.6" ry="0.4" fill="#2a2f2a" opacity="0.86" transform="rotate(-22 24.7 60.5)"/><ellipse cx="33.5" cy="44.9" rx="0.9" ry="0.9" fill="#7f8a7e" opacity="0.75" transform="rotate(56 33.5 44.9)"/><ellipse cx="34.7" cy="62.9" rx="1.6" ry="0.6" fill="#1f2622" opacity="0.94" transform="rotate(17 34.7 62.9)"/><ellipse cx="22.2" cy="62.7" rx="1.3" ry="0.5" fill="#6c7468" opacity="0.94" transform="rotate(-37 22.2 62.7)"/><ellipse cx="15.5" cy="55.5" rx="1.5" ry="0.7" fill="#2a2f2a" opacity="0.63" transform="rotate(27 15.5 55.5)"/><ellipse cx="46.3" cy="56.8" rx="0.7" ry="0.6" fill="#1f2622" opacity="0.62" transform="rotate(-23 46.3 56.8)"/><ellipse cx="20.7" cy="50.5" rx="0.7" ry="1.2" fill="#3b443e" opacity="0.71" transform="rotate(-62 20.7 50.5)"/><ellipse cx="49.8" cy="46.7" rx="0.8" ry="0.4" fill="#8b9488" opacity="0.63" transform="rotate(1 49.8 46.7)"/><ellipse cx="33.1" cy="43.6" rx="1.0" ry="0.4" fill="#1f2622" opacity="0.89" transform="rotate(-34 33.1 43.6)"/><ellipse cx="29.4" cy="39.2" rx="0.4" ry="0.6" fill="#1f2622" opacity="0.63" transform="rotate(65 29.4 39.2)"/><ellipse cx="45.7" cy="42.3" rx="1.5" ry="1.0" fill="#3b443e" opacity="0.74" transform="rotate(13 45.7 42.3)"/><ellipse cx="40.9" cy="51.8" rx="0.7" ry="0.9" fill="#1f2622" opacity="0.62" transform="rotate(61 40.9 51.8)"/><ellipse cx="37.6" cy="58.5" rx="1.4" ry="0.5" fill="#3b443e" opacity="0.86" transform="rotate(-66 37.6 58.5)"/><ellipse cx="44.8" cy="54.4" rx="1.5" ry="0.9" fill="#b08a5e" opacity="0.83" transform="rotate(-49 44.8 54.4)"/><ellipse cx="16.1" cy="41.7" rx="0.8" ry="0.5" fill="#59635a" opacity="0.76" transform="rotate(-58 16.1 41.7)"/><ellipse cx="37.6" cy="55.5" rx="1.2" ry="0.8" fill="#2a2f2a" opacity="0.76" transform="rotate(-53 37.6 55.5)"/><ellipse cx="41.9" cy="52.1" rx="1.0" ry="0.9" fill="#2a2f2a" opacity="0.86" transform="rotate(51 41.9 52.1)"/><ellipse cx="24.1" cy="40.1" rx="0.7" ry="1.0" fill="#1f2622" opacity="0.68" transform="rotate(47 24.1 40.1)"/><ellipse cx="32.8" cy="48.7" rx="1.0" ry="0.9" fill="#8d6f4c" opacity="0.62" transform="rotate(-20 32.8 48.7)"/><ellipse cx="17.8" cy="42.1" rx="0.7" ry="1.0" fill="#1f2622" opacity="0.82" transform="rotate(-36 17.8 42.1)"/><ellipse cx="15.4" cy="39.7" rx="0.7" ry="0.9" fill="#b08a5e" opacity="0.68" transform="rotate(55 15.4 39.7)"/><ellipse cx="25.5" cy="52.5" rx="1.0" ry="0.8" fill="#2a2f2a" opacity="0.95" transform="rotate(70 25.5 52.5)"/><ellipse cx="22.2" cy="65.4" rx="1.5" ry="0.4" fill="#a57d52" opacity="0.63" transform="rotate(59 22.2 65.4)"/><ellipse cx="49.9" cy="50.6" rx="0.7" ry="0.6" fill="#1f2622" opacity="0.63" transform="rotate(-47 49.9 50.6)"/><ellipse cx="20.1" cy="52.7" rx="1.5" ry="0.5" fill="#59635a" opacity="0.82" transform="rotate(1 20.1 52.7)"/><ellipse cx="46.9" cy="57.7" rx="0.7" ry="1.1" fill="#a57d52" opacity="0.74" transform="rotate(-30 46.9 57.7)"/><ellipse cx="15.1" cy="51.8" rx="0.9" ry="0.6" fill="#1f2622" opacity="0.75" transform="rotate(26 15.1 51.8)"/><ellipse cx="26.4" cy="61.5" rx="0.4" ry="1.0" fill="#59635a" opacity="0.74" transform="rotate(-20 26.4 61.5)"/><ellipse cx="40.7" cy="63.2" rx="0.7" ry="0.7" fill="#8b9488" opacity="0.74" transform="rotate(-51 40.7 63.2)"/><ellipse cx="28.0" cy="50.0" rx="0.7" ry="0.4" fill="#2a2f2a" opacity="0.62" transform="rotate(3 28.0 50.0)"/><ellipse cx="37.9" cy="42.2" rx="1.6" ry="0.7" fill="#6c7468" opacity="0.67" transform="rotate(25 37.9 42.2)"/><ellipse cx="43.3" cy="50.0" rx="0.4" ry="1.0" fill="#8b9488" opacity="0.92" transform="rotate(70 43.3 50.0)"/><ellipse cx="22.3" cy="40.3" rx="1.5" ry="0.7" fill="#3b443e" opacity="0.86" transform="rotate(3 22.3 40.3)"/><ellipse cx="32.5" cy="63.5" rx="1.1" ry="0.5" fill="#8b9488" opacity="0.72" transform="rotate(6 32.5 63.5)"/><ellipse cx="24.2" cy="58.7" rx="1.2" ry="0.7" fill="#1f2622" opacity="0.71" transform="rotate(30 24.2 58.7)"/><ellipse cx="19.3" cy="56.0" rx="0.5" ry="0.8" fill="#8d6f4c" opacity="0.77" transform="rotate(-14 19.3 56.0)"/><ellipse cx="31.3" cy="47.3" rx="1.3" ry="0.7" fill="#3b443e" opacity="0.67" transform="rotate(-47 31.3 47.3)"/><ellipse cx="21.3" cy="53.6" rx="0.8" ry="0.7" fill="#8d6f4c" opacity="0.80" transform="rotate(-65 21.3 53.6)"/><ellipse cx="42.0" cy="49.6" rx="0.9" ry="0.8" fill="#8b9488" opacity="0.69" transform="rotate(-55 42.0 49.6)"/><ellipse cx="32.9" cy="54.1" rx="0.8" ry="0.9" fill="#3b443e" opacity="0.82" transform="rotate(-15 32.9 54.1)"/><ellipse cx="18.3" cy="63.1" rx="0.9" ry="0.9" fill="#8b9488" opacity="0.93" transform="rotate(-65 18.3 63.1)"/><ellipse cx="19.6" cy="49.9" rx="1.3" ry="1.0" fill="#3b443e" opacity="0.77" transform="rotate(-52 19.6 49.9)"/><ellipse cx="29.1" cy="64.0" rx="1.4" ry="1.1" fill="#a57d52" opacity="0.69" transform="rotate(-43 29.1 64.0)"/><ellipse cx="23.1" cy="42.3" rx="1.6" ry="0.5" fill="#59635a" opacity="0.85" transform="rotate(47 23.1 42.3)"/><ellipse cx="18.1" cy="59.8" rx="0.4" ry="0.5" fill="#3b443e" opacity="0.92" transform="rotate(7 18.1 59.8)"/><ellipse cx="49.6" cy="55.5" rx="1.0" ry="0.7" fill="#8d6f4c" opacity="0.64" transform="rotate(-52 49.6 55.5)"/><ellipse cx="25.8" cy="64.4" rx="0.6" ry="0.6" fill="#8d6f4c" opacity="0.81" transform="rotate(-68 25.8 64.4)"/><ellipse cx="34.3" cy="65.9" rx="0.7" ry="0.7" fill="#59635a" opacity="0.91" transform="rotate(51 34.3 65.9)"/><ellipse cx="33.9" cy="53.3" rx="0.4" ry="0.7" fill="#7f8a7e" opacity="0.71" transform="rotate(-65 33.9 53.3)"/><ellipse cx="22.0" cy="62.8" rx="1.2" ry="0.5" fill="#1f2622" opacity="0.83" transform="rotate(24 22.0 62.8)"/><ellipse cx="23.2" cy="39.0" rx="0.8" ry="0.7" fill="#7f8a7e" opacity="0.74" transform="rotate(-69 23.2 39.0)"/><ellipse cx="43.7" cy="58.7" rx="1.0" ry="0.6" fill="#1f2622" opacity="0.71" transform="rotate(-21 43.7 58.7)"/><ellipse cx="23.3" cy="44.2" rx="1.3" ry="0.6" fill="#3b443e" opacity="0.77" transform="rotate(-23 23.3 44.2)"/><ellipse cx="47.3" cy="51.6" rx="1.5" ry="0.4" fill="#3b443e" opacity="0.65" transform="rotate(30 47.3 51.6)"/><ellipse cx="17.0" cy="38.7" rx="1.1" ry="0.7" fill="#b08a5e" opacity="0.62" transform="rotate(30 17.0 38.7)"/><ellipse cx="31.2" cy="57.9" rx="0.8" ry="0.5" fill="#2a2f2a" opacity="0.93" transform="rotate(14 31.2 57.9)"/><ellipse cx="21.9" cy="56.3" rx="1.0" ry="0.8" fill="#1f2622" opacity="0.83" transform="rotate(26 21.9 56.3)"/><ellipse cx="45.2" cy="65.6" rx="0.9" ry="0.5" fill="#2a2f2a" opacity="0.70" transform="rotate(19 45.2 65.6)"/><ellipse cx="30.1" cy="62.8" rx="1.1" ry="1.0" fill="#8b9488" opacity="0.72" transform="rotate(9 30.1 62.8)"/><ellipse cx="44.6" cy="50.1" rx="0.5" ry="0.8" fill="#6c7468" opacity="0.79" transform="rotate(44 44.6 50.1)"/><ellipse cx="21.9" cy="48.2" rx="1.5" ry="0.4" fill="#8b9488" opacity="0.69" transform="rotate(33 21.9 48.2)"/><ellipse cx="16.5" cy="39.0" rx="0.5" ry="1.1" fill="#1f2622" opacity="0.67" transform="rotate(-54 16.5 39.0)"/><ellipse cx="47.3" cy="47.5" rx="0.7" ry="1.2" fill="#3b443e" opacity="0.62" transform="rotate(11 47.3 47.5)"/><ellipse cx="48.3" cy="46.3" rx="1.3" ry="0.9" fill="#8d6f4c" opacity="0.82" transform="rotate(-54 48.3 46.3)"/><ellipse cx="15.9" cy="44.5" rx="1.0" ry="1.2" fill="#8d6f4c" opacity="0.74" transform="rotate(-6 15.9 44.5)"/><ellipse cx="47.9" cy="60.8" rx="0.6" ry="0.8" fill="#2a2f2a" opacity="0.88" transform="rotate(7 47.9 60.8)"/><ellipse cx="44.6" cy="59.6" rx="1.1" ry="0.7" fill="#6c7468" opacity="0.76" transform="rotate(-50 44.6 59.6)"/><ellipse cx="33.4" cy="49.0" rx="0.6" ry="0.7" fill="#7f8a7e" opacity="0.61" transform="rotate(69 33.4 49.0)"/><ellipse cx="26.7" cy="65.4" rx="1.5" ry="1.2" fill="#1f2622" opacity="0.82" transform="rotate(-17 26.7 65.4)"/><ellipse cx="18.5" cy="52.0" rx="1.3" ry="0.8" fill="#1f2622" opacity="0.65" transform="rotate(47 18.5 52.0)"/><ellipse cx="37.3" cy="56.9" rx="1.3" ry="1.1" fill="#7f8a7e" opacity="0.87" transform="rotate(5 37.3 56.9)"/><ellipse cx="25.6" cy="53.9" rx="0.8" ry="1.0" fill="#1f2622" opacity="0.75" transform="rotate(-23 25.6 53.9)"/><ellipse cx="23.8" cy="42.3" rx="1.5" ry="0.9" fill="#6c7468" opacity="0.62" transform="rotate(-6 23.8 42.3)"/><ellipse cx="50.7" cy="52.2" rx="0.7" ry="1.0" fill="#7f8a7e" opacity="0.76" transform="rotate(-61 50.7 52.2)"/><ellipse cx="18.7" cy="51.3" rx="1.4" ry="1.1" fill="#6c7468" opacity="0.61" transform="rotate(5 18.7 51.3)"/><ellipse cx="23.4" cy="39.4" rx="1.1" ry="1.1" fill="#1f2622" opacity="0.93" transform="rotate(25 23.4 39.4)"/><ellipse cx="33.5" cy="43.0" rx="1.1" ry="1.0" fill="#7f8a7e" opacity="0.93" transform="rotate(-43 33.5 43.0)"/><ellipse cx="37.9" cy="57.9" rx="0.8" ry="0.4" fill="#6c7468" opacity="0.65" transform="rotate(-18 37.9 57.9)"/><ellipse cx="51.0" cy="39.1" rx="1.3" ry="1.1" fill="#59635a" opacity="0.60" transform="rotate(13 51.0 39.1)"/><ellipse cx="29.7" cy="48.4" rx="1.1" ry="0.5" fill="#2a2f2a" opacity="0.88" transform="rotate(70 29.7 48.4)"/><ellipse cx="32.4" cy="49.4" rx="1.4" ry="0.9" fill="#1f2622" opacity="0.82" transform="rotate(-47 32.4 49.4)"/><ellipse cx="38.5" cy="49.1" rx="0.7" ry="1.2" fill="#7f8a7e" opacity="0.71" transform="rotate(-57 38.5 49.1)"/><ellipse cx="26.2" cy="53.9" rx="0.8" ry="0.7" fill="#59635a" opacity="0.87" transform="rotate(23 26.2 53.9)"/><ellipse cx="38.2" cy="48.9" rx="0.9" ry="1.2" fill="#8b9488" opacity="0.92" transform="rotate(38 38.2 48.9)"/><ellipse cx="19.1" cy="40.5" rx="1.1" ry="0.7" fill="#8d6f4c" opacity="0.66" transform="rotate(-67 19.1 40.5)"/><ellipse cx="16.9" cy="42.0" rx="1.4" ry="0.7" fill="#3b443e" opacity="0.82" transform="rotate(24 16.9 42.0)"/><ellipse cx="41.5" cy="42.8" rx="0.8" ry="0.5" fill="#1f2622" opacity="0.92" transform="rotate(-43 41.5 42.8)"/><ellipse cx="28.8" cy="59.1" rx="1.4" ry="1.0" fill="#1f2622" opacity="0.64" transform="rotate(-59 28.8 59.1)"/><ellipse cx="50.1" cy="51.5" rx="0.5" ry="1.1" fill="#8b9488" opacity="0.63" transform="rotate(-29 50.1 51.5)"/><ellipse cx="38.1" cy="62.0" rx="1.1" ry="0.9" fill="#1f2622" opacity="0.89" transform="rotate(-24 38.1 62.0)"/><ellipse cx="35.4" cy="39.2" rx="1.5" ry="0.5" fill="#6c7468" opacity="0.64" transform="rotate(-7 35.4 39.2)"/><ellipse cx="49.9" cy="60.8" rx="0.6" ry="1.1" fill="#59635a" opacity="0.87" transform="rotate(-61 49.9 60.8)"/><ellipse cx="39.0" cy="47.1" rx="0.9" ry="0.8" fill="#59635a" opacity="0.82" transform="rotate(8 39.0 47.1)"/><ellipse cx="38.4" cy="46.6" rx="0.7" ry="0.7" fill="#6c7468" opacity="0.76" transform="rotate(42 38.4 46.6)"/><ellipse cx="21.4" cy="38.1" rx="1.6" ry="0.8" fill="#a57d52" opacity="0.87" transform="rotate(47 21.4 38.1)"/><ellipse cx="45.1" cy="60.7" rx="0.9" ry="0.5" fill="#6c7468" opacity="0.75" transform="rotate(-47 45.1 60.7)"/><ellipse cx="43.9" cy="52.1" rx="1.2" ry="0.4" fill="#1f2622" opacity="0.63" transform="rotate(10 43.9 52.1)"/><ellipse cx="43.0" cy="52.3" rx="0.5" ry="0.8" fill="#8b9488" opacity="0.83" transform="rotate(-36 43.0 52.3)"/><ellipse cx="15.9" cy="39.9" rx="1.1" ry="1.0" fill="#2a2f2a" opacity="0.67" transform="rotate(55 15.9 39.9)"/><ellipse cx="25.4" cy="60.7" rx="1.4" ry="0.9" fill="#b08a5e" opacity="0.93" transform="rotate(-54 25.4 60.7)"/><ellipse cx="45.0" cy="55.1" rx="0.7" ry="0.7" fill="#3b443e" opacity="0.70" transform="rotate(46 45.0 55.1)"/><ellipse cx="20.2" cy="52.1" rx="1.5" ry="0.6" fill="#1f2622" opacity="0.82" transform="rotate(-10 20.2 52.1)"/><ellipse cx="26.5" cy="39.0" rx="0.6" ry="0.5" fill="#1f2622" opacity="0.84" transform="rotate(26 26.5 39.0)"/><ellipse cx="21.1" cy="60.0" rx="0.5" ry="0.8" fill="#7f8a7e" opacity="0.90" transform="rotate(45 21.1 60.0)"/><ellipse cx="35.0" cy="54.2" rx="1.5" ry="0.5" fill="#3b443e" opacity="0.82" transform="rotate(30 35.0 54.2)"/><ellipse cx="41.6" cy="48.4" rx="0.9" ry="0.7" fill="#1f2622" opacity="0.73" transform="rotate(-50 41.6 48.4)"/><ellipse cx="30.9" cy="42.9" rx="1.3" ry="0.4" fill="#59635a" opacity="0.78" transform="rotate(9 30.9 42.9)"/><ellipse cx="38.0" cy="65.6" rx="1.1" ry="0.9" fill="#6c7468" opacity="0.86" transform="rotate(-62 38.0 65.6)"/><ellipse cx="23.0" cy="46.1" rx="1.2" ry="0.7" fill="#6c7468" opacity="0.91" transform="rotate(-37 23.0 46.1)"/><ellipse cx="32.6" cy="55.2" rx="0.5" ry="0.4" fill="#3b443e" opacity="0.72" transform="rotate(-43 32.6 55.2)"/><ellipse cx="33.8" cy="53.0" rx="0.9" ry="0.6" fill="#1f2622" opacity="0.67" transform="rotate(51 33.8 53.0)"/><ellipse cx="20.7" cy="38.4" rx="1.4" ry="1.0" fill="#a57d52" opacity="0.63" transform="rotate(-33 20.7 38.4)"/><ellipse cx="46.4" cy="82.1" rx="1.3" ry="0.6" fill="#2a2f2a" opacity="0.57" transform="rotate(22 46.4 82.1)"/><ellipse cx="35.2" cy="74.3" rx="1.8" ry="0.7" fill="#7f8a7e" opacity="0.81" transform="rotate(-15 35.2 74.3)"/><ellipse cx="20.9" cy="68.0" rx="0.7" ry="0.4" fill="#1f2622" opacity="0.63" transform="rotate(-27 20.9 68.0)"/><ellipse cx="47.8" cy="69.9" rx="1.7" ry="0.9" fill="#6c7468" opacity="0.60" transform="rotate(-18 47.8 69.9)"/><ellipse cx="33.7" cy="79.6" rx="1.8" ry="0.7" fill="#59635a" opacity="0.61" transform="rotate(-11 33.7 79.6)"/><ellipse cx="17.3" cy="79.3" rx="2.4" ry="0.9" fill="#3b443e" opacity="0.80" transform="rotate(-30 17.3 79.3)"/><ellipse cx="28.5" cy="75.9" rx="2.2" ry="0.5" fill="#a57d52" opacity="0.71" transform="rotate(-16 28.5 75.9)"/><ellipse cx="50.9" cy="72.7" rx="1.8" ry="0.5" fill="#8b9488" opacity="0.80" transform="rotate(-13 50.9 72.7)"/><ellipse cx="37.9" cy="80.2" rx="1.8" ry="1.0" fill="#8b9488" opacity="0.65" transform="rotate(29 37.9 80.2)"/><ellipse cx="49.7" cy="71.9" rx="2.2" ry="0.4" fill="#8b9488" opacity="0.87" transform="rotate(23 49.7 71.9)"/><ellipse cx="41.8" cy="85.0" rx="1.9" ry="0.6" fill="#3b443e" opacity="0.66" transform="rotate(-15 41.8 85.0)"/><ellipse cx="28.7" cy="83.3" rx="2.3" ry="1.1" fill="#7f8a7e" opacity="0.71" transform="rotate(23 28.7 83.3)"/><ellipse cx="34.1" cy="68.1" rx="0.6" ry="1.1" fill="#6c7468" opacity="0.75" transform="rotate(-11 34.1 68.1)"/><ellipse cx="43.4" cy="75.0" rx="1.7" ry="0.8" fill="#1f2622" opacity="0.60" transform="rotate(-29 43.4 75.0)"/><ellipse cx="19.0" cy="79.2" rx="0.9" ry="1.1" fill="#2a2f2a" opacity="0.56" transform="rotate(-22 19.0 79.2)"/><ellipse cx="39.9" cy="79.4" rx="1.9" ry="0.9" fill="#2a2f2a" opacity="0.85" transform="rotate(18 39.9 79.4)"/><ellipse cx="28.1" cy="82.7" rx="2.1" ry="1.0" fill="#2a2f2a" opacity="0.86" transform="rotate(18 28.1 82.7)"/><ellipse cx="47.9" cy="85.0" rx="0.8" ry="0.5" fill="#2a2f2a" opacity="0.56" transform="rotate(30 47.9 85.0)"/><ellipse cx="45.5" cy="82.6" rx="1.7" ry="1.0" fill="#a57d52" opacity="0.77" transform="rotate(0 45.5 82.6)"/><ellipse cx="18.6" cy="69.8" rx="2.0" ry="0.5" fill="#9aa69a" opacity="0.67" transform="rotate(-14 18.6 69.8)"/><ellipse cx="15.8" cy="72.6" rx="1.1" ry="0.9" fill="#9aa69a" opacity="0.87" transform="rotate(19 15.8 72.6)"/><ellipse cx="49.7" cy="77.1" rx="2.1" ry="0.8" fill="#2a2f2a" opacity="0.83" transform="rotate(-29 49.7 77.1)"/><ellipse cx="30.7" cy="81.9" rx="1.2" ry="0.9" fill="#7f8a7e" opacity="0.75" transform="rotate(15 30.7 81.9)"/><ellipse cx="46.0" cy="69.6" rx="2.1" ry="0.5" fill="#2a2f2a" opacity="0.73" transform="rotate(-12 46.0 69.6)"/><ellipse cx="42.4" cy="85.6" rx="0.6" ry="0.7" fill="#3b443e" opacity="0.79" transform="rotate(22 42.4 85.6)"/><ellipse cx="21.6" cy="76.9" rx="1.2" ry="1.0" fill="#8b9488" opacity="0.75" transform="rotate(-20 21.6 76.9)"/><ellipse cx="25.2" cy="71.9" rx="1.9" ry="0.7" fill="#2a2f2a" opacity="0.88" transform="rotate(19 25.2 71.9)"/><ellipse cx="17.9" cy="82.2" rx="1.9" ry="1.0" fill="#a57d52" opacity="0.66" transform="rotate(-24 17.9 82.2)"/><ellipse cx="29.4" cy="75.1" rx="2.2" ry="0.5" fill="#a57d52" opacity="0.56" transform="rotate(-17 29.4 75.1)"/><ellipse cx="25.9" cy="75.7" rx="1.6" ry="0.5" fill="#a57d52" opacity="0.63" transform="rotate(-1 25.9 75.7)"/><ellipse cx="19.6" cy="78.7" rx="1.8" ry="0.8" fill="#2a2f2a" opacity="0.67" transform="rotate(-10 19.6 78.7)"/><ellipse cx="33.8" cy="83.6" rx="1.4" ry="0.8" fill="#9aa69a" opacity="0.61" transform="rotate(-2 33.8 83.6)"/><ellipse cx="39.8" cy="72.6" rx="1.0" ry="0.6" fill="#a57d52" opacity="0.86" transform="rotate(-15 39.8 72.6)"/><ellipse cx="33.3" cy="72.8" rx="2.0" ry="1.0" fill="#59635a" opacity="0.60" transform="rotate(-21 33.3 72.8)"/><ellipse cx="50.1" cy="81.0" rx="1.7" ry="0.6" fill="#6c7468" opacity="0.66" transform="rotate(-18 50.1 81.0)"/><ellipse cx="24.3" cy="85.2" rx="2.4" ry="0.5" fill="#a57d52" opacity="0.59" transform="rotate(-6 24.3 85.2)"/><ellipse cx="20.4" cy="70.7" rx="1.1" ry="0.6" fill="#8b9488" opacity="0.62" transform="rotate(10 20.4 70.7)"/><ellipse cx="47.8" cy="73.1" rx="2.2" ry="0.7" fill="#2a2f2a" opacity="0.69" transform="rotate(20 47.8 73.1)"/><ellipse cx="30.7" cy="72.0" rx="2.4" ry="0.6" fill="#2a2f2a" opacity="0.60" transform="rotate(8 30.7 72.0)"/><ellipse cx="41.6" cy="68.1" rx="1.0" ry="1.0" fill="#59635a" opacity="0.76" transform="rotate(11 41.6 68.1)"/><ellipse cx="30.2" cy="72.1" rx="1.9" ry="1.0" fill="#a57d52" opacity="0.80" transform="rotate(24 30.2 72.1)"/><ellipse cx="23.2" cy="71.3" rx="0.8" ry="0.7" fill="#8b9488" opacity="0.77" transform="rotate(-24 23.2 71.3)"/><ellipse cx="47.2" cy="72.4" rx="1.3" ry="0.9" fill="#1f2622" opacity="0.64" transform="rotate(-3 47.2 72.4)"/><ellipse cx="32.4" cy="68.4" rx="2.1" ry="0.8" fill="#a57d52" opacity="0.88" transform="rotate(-19 32.4 68.4)"/><ellipse cx="47.2" cy="73.9" rx="0.6" ry="1.0" fill="#2a2f2a" opacity="0.56" transform="rotate(4 47.2 73.9)"/><ellipse cx="22.8" cy="80.9" rx="2.3" ry="0.5" fill="#9aa69a" opacity="0.59" transform="rotate(6 22.8 80.9)"/><ellipse cx="31.4" cy="71.7" rx="1.5" ry="0.4" fill="#9aa69a" opacity="0.73" transform="rotate(-4 31.4 71.7)"/><ellipse cx="41.7" cy="76.2" rx="2.4" ry="0.5" fill="#7f8a7e" opacity="0.82" transform="rotate(-23 41.7 76.2)"/><ellipse cx="41.2" cy="79.1" rx="1.7" ry="0.6" fill="#3b443e" opacity="0.69" transform="rotate(-30 41.2 79.1)"/><ellipse cx="17.7" cy="84.5" rx="1.7" ry="0.9" fill="#59635a" opacity="0.64" transform="rotate(-16 17.7 84.5)"/><ellipse cx="25.9" cy="75.2" rx="2.3" ry="1.1" fill="#3b443e" opacity="0.71" transform="rotate(-20 25.9 75.2)"/><ellipse cx="19.7" cy="82.0" rx="2.1" ry="0.8" fill="#3b443e" opacity="0.77" transform="rotate(16 19.7 82.0)"/><ellipse cx="23.1" cy="85.3" rx="1.2" ry="0.8" fill="#3b443e" opacity="0.71" transform="rotate(-12 23.1 85.3)"/><ellipse cx="42.4" cy="79.7" rx="2.0" ry="0.7" fill="#6c7468" opacity="0.64" transform="rotate(-6 42.4 79.7)"/><ellipse cx="39.7" cy="85.7" rx="1.8" ry="0.7" fill="#8b9488" opacity="0.68" transform="rotate(11 39.7 85.7)"/><ellipse cx="25.9" cy="76.6" rx="1.4" ry="0.8" fill="#a57d52" opacity="0.86" transform="rotate(-21 25.9 76.6)"/><ellipse cx="48.4" cy="83.4" rx="0.7" ry="1.0" fill="#9aa69a" opacity="0.82" transform="rotate(-22 48.4 83.4)"/><ellipse cx="34.1" cy="74.2" rx="1.6" ry="0.9" fill="#6c7468" opacity="0.88" transform="rotate(11 34.1 74.2)"/><ellipse cx="25.5" cy="78.9" rx="1.6" ry="1.0" fill="#1f2622" opacity="0.82" transform="rotate(-8 25.5 78.9)"/><ellipse cx="43.3" cy="71.8" rx="1.3" ry="0.8" fill="#59635a" opacity="0.86" transform="rotate(8 43.3 71.8)"/><ellipse cx="50.2" cy="69.6" rx="2.2" ry="0.8" fill="#a57d52" opacity="0.84" transform="rotate(-18 50.2 69.6)"/><ellipse cx="32.8" cy="71.8" rx="0.7" ry="1.0" fill="#a57d52" opacity="0.86" transform="rotate(5 32.8 71.8)"/><ellipse cx="19.3" cy="75.5" rx="2.1" ry="0.7" fill="#7f8a7e" opacity="0.57" transform="rotate(-1 19.3 75.5)"/><ellipse cx="47.6" cy="80.6" rx="1.0" ry="0.5" fill="#59635a" opacity="0.85" transform="rotate(-30 47.6 80.6)"/><ellipse cx="20.8" cy="73.8" rx="1.9" ry="0.7" fill="#8b9488" opacity="0.84" transform="rotate(-7 20.8 73.8)"/><ellipse cx="30.3" cy="86.0" rx="1.8" ry="0.5" fill="#9aa69a" opacity="0.77" transform="rotate(-29 30.3 86.0)"/><ellipse cx="15.7" cy="68.8" rx="1.9" ry="1.1" fill="#2a2f2a" opacity="0.73" transform="rotate(1 15.7 68.8)"/><ellipse cx="42.3" cy="70.6" rx="1.0" ry="0.7" fill="#1f2622" opacity="0.67" transform="rotate(25 42.3 70.6)"/><ellipse cx="38.7" cy="74.1" rx="2.0" ry="0.8" fill="#6c7468" opacity="0.65" transform="rotate(-9 38.7 74.1)"/><ellipse cx="30.2" cy="78.0" rx="2.1" ry="0.6" fill="#3b443e" opacity="0.69" transform="rotate(2 30.2 78.0)"/></g><path d="M24.5 44.5l1-3.2l1 3.2z" fill="#4a534c"/><path d="M27.5 42.5l1-3.6l1 3.6z" fill="#4a534c"/><path d="M35.5 42l1-3.4l1 3.4z" fill="#4a534c"/><path d="M38.5 44l1-3.2l1 3.2z" fill="#4a534c"/><path d="M21.5 48.5l1-2.8l1 2.8z" fill="#4a534c"/><path d="M42 48.5l1-2.8l1 2.8z" fill="#4a534c"/><path d="M19 53.5l1-2.4l1 2.4z" fill="#4a534c"/><path d="M44.6 53.5l1-2.4l1 2.4z" fill="#4a534c"/><path d="M17 59l1-2.2l1 2.2z" fill="#4a534c"/><path d="M46.5 59l1-2.2l1 2.2z" fill="#4a534c"/><path d="M30 41l1-2.5l1 2.5z" fill="#4a534c"/></g><path d="M15.300 66.200c6 1.300 28 1.300 34.200 0v1.500c-6 1.300-28 1.300-34.200 0z" fill="#a88863" opacity="0.9"/><path d="M15.200 69.800c6 1.300 28.500 1.300 34.500 0v.9c-6 1.300-28.500 1.300-34.500 0z" fill="#2a322d" opacity="0.7"/><path d="M15.800 64c6 1.200 27 1.200 33.200 0v.8c-6 1.200-27 1.200-33.200 0z" fill="#232a26" opacity="0.7"/><g filter="url(#rg3)"><path d="M32 84.500h2.600l.3 20h-3.200z" fill="#8a6c4a"/><rect x="30" y="86.200" width="6.600" height="1.300" fill="#5b6558"/><rect x="29.400" y="89.800" width="7.800" height="1.500" fill="#6b6f5c"/><rect x="30.200" y="93.500" width="6.200" height="1.200" fill="#5b6558"/><path d="M31.500 92c-1.200 6-3.500 12-8 17.500c-2.500 3-6 6-11 9" fill="none" stroke-linecap="round" stroke="#566054" stroke-width="3"/><path d="M32.500 99c-1 5-3.500 10-7.500 14c-2 2-4 3.500-6 4.500" fill="none" stroke-linecap="round" stroke="#8a7a5e" stroke-width="1.800"/><path d="M27 90.500l1.800 1.200l-1 2l-2-1.200zM25.500 100l1.500 1l-1 1.600l-1.600-1z" fill="#4f5a50"/><path d="M34.500 108.500c5 .5 9.500-1.500 12-5.500c1.800-3 2-6.500 .3-9c-.8-1.200-2.200-1.800-3.500-1.600" fill="none" stroke-linecap="round" stroke="#5f6a5c" stroke-width="3.200"/><path d="M41 89.500l2.200 1l1.800-1.500l.4 2.500l2 1.200l-2 1.200l-.5 2.300l-2-1.300l-2.300 .3l1.200-2.200z" fill="#66715f"/><path d="M36 108c4.500 0 8.500-2 10.500-5.500" fill="none" stroke-linecap="round" stroke="#a3ad9c" stroke-width="0.900"/><clipPath id="basec3"><path d="M11 118.500c2.500-2.200 6-3.200 9-4.500c3-1.500 6-3.500 8.500-5.500c2.500-.5 5.500-.5 8 0c3 .5 6 1.500 8.500 3c3.500 2 6.500 5 9 9.500c-1 1.600-3 2.600-5 3.200c-4.500 1.500-10 2-15.500 1.800c-6-.2-12-1.200-17-3.200c-2.500-1-4.700-2.500-5.500-4.300z"/></clipPath><path d="M11 118.500c2.500-2.200 6-3.200 9-4.500c3-1.500 6-3.500 8.500-5.500c2.500-.5 5.500-.5 8 0c3 .5 6 1.500 8.500 3c3.500 2 6.500 5 9 9.500c-1 1.600-3 2.600-5 3.200c-4.500 1.500-10 2-15.500 1.800c-6-.2-12-1.200-17-3.200c-2.500-1-4.700-2.500-5.500-4.300z" fill="#6b624e"/><g clip-path="url(#basec3)"><ellipse cx="54.3" cy="124.3" rx="1.2" ry="0.5" fill="#565e53" opacity="0.88" transform="rotate(2 54.3 124.3)"/><ellipse cx="18.7" cy="121.0" rx="0.8" ry="1.1" fill="#a57d52" opacity="0.87" transform="rotate(-35 18.7 121.0)"/><ellipse cx="27.9" cy="117.6" rx="1.3" ry="0.8" fill="#8b9488" opacity="0.71" transform="rotate(-40 27.9 117.6)"/><ellipse cx="12.1" cy="123.3" rx="1.5" ry="0.9" fill="#a57d52" opacity="0.88" transform="rotate(29 12.1 123.3)"/><ellipse cx="37.5" cy="119.0" rx="1.7" ry="0.9" fill="#3b443e" opacity="0.91" transform="rotate(-30 37.5 119.0)"/><ellipse cx="19.6" cy="120.0" rx="1.4" ry="0.9" fill="#a57d52" opacity="0.83" transform="rotate(-36 19.6 120.0)"/><ellipse cx="29.0" cy="108.1" rx="2.3" ry="0.4" fill="#b89068" opacity="0.88" transform="rotate(31 29.0 108.1)"/><ellipse cx="42.0" cy="124.1" rx="0.9" ry="0.4" fill="#a57d52" opacity="0.75" transform="rotate(34 42.0 124.1)"/><ellipse cx="52.0" cy="107.1" rx="1.6" ry="0.4" fill="#a57d52" opacity="0.87" transform="rotate(13 52.0 107.1)"/><ellipse cx="35.9" cy="125.3" rx="1.4" ry="0.4" fill="#8b9488" opacity="0.81" transform="rotate(-21 35.9 125.3)"/><ellipse cx="31.4" cy="114.7" rx="0.8" ry="0.9" fill="#2a2f2a" opacity="0.91" transform="rotate(40 31.4 114.7)"/><ellipse cx="10.7" cy="106.1" rx="1.8" ry="0.5" fill="#a57d52" opacity="0.68" transform="rotate(-25 10.7 106.1)"/><ellipse cx="15.8" cy="106.4" rx="1.9" ry="0.6" fill="#b89068" opacity="0.92" transform="rotate(6 15.8 106.4)"/><ellipse cx="44.8" cy="121.0" rx="2.1" ry="0.9" fill="#a57d52" opacity="0.70" transform="rotate(31 44.8 121.0)"/><ellipse cx="41.9" cy="115.7" rx="2.3" ry="0.6" fill="#a57d52" opacity="0.85" transform="rotate(-39 41.9 115.7)"/><ellipse cx="12.7" cy="124.5" rx="1.8" ry="0.8" fill="#8b9488" opacity="0.71" transform="rotate(36 12.7 124.5)"/><ellipse cx="17.5" cy="124.1" rx="1.5" ry="0.4" fill="#2a2f2a" opacity="0.93" transform="rotate(16 17.5 124.1)"/><ellipse cx="31.1" cy="109.5" rx="2.3" ry="0.5" fill="#8d6f4c" opacity="0.66" transform="rotate(13 31.1 109.5)"/><ellipse cx="31.5" cy="122.3" rx="1.4" ry="0.6" fill="#3b443e" opacity="0.72" transform="rotate(-5 31.5 122.3)"/><ellipse cx="12.7" cy="126.5" rx="1.9" ry="1.0" fill="#2a2f2a" opacity="0.90" transform="rotate(-39 12.7 126.5)"/><ellipse cx="47.4" cy="118.6" rx="1.2" ry="0.7" fill="#2a2f2a" opacity="0.73" transform="rotate(8 47.4 118.6)"/><ellipse cx="37.1" cy="124.8" rx="2.1" ry="0.6" fill="#a57d52" opacity="0.71" transform="rotate(-6 37.1 124.8)"/><ellipse cx="29.0" cy="118.3" rx="2.1" ry="1.0" fill="#a57d52" opacity="0.70" transform="rotate(-22 29.0 118.3)"/><ellipse cx="46.5" cy="124.2" rx="1.6" ry="0.6" fill="#3b443e" opacity="0.84" transform="rotate(23 46.5 124.2)"/><ellipse cx="25.6" cy="107.8" rx="1.6" ry="1.0" fill="#2a2f2a" opacity="0.88" transform="rotate(-11 25.6 107.8)"/><ellipse cx="23.9" cy="107.2" rx="1.3" ry="0.9" fill="#2a2f2a" opacity="0.81" transform="rotate(-39 23.9 107.2)"/><ellipse cx="45.6" cy="115.7" rx="0.8" ry="1.0" fill="#a57d52" opacity="0.68" transform="rotate(34 45.6 115.7)"/><ellipse cx="33.4" cy="111.5" rx="2.1" ry="0.6" fill="#3b443e" opacity="0.81" transform="rotate(-16 33.4 111.5)"/><ellipse cx="19.6" cy="107.9" rx="2.1" ry="0.6" fill="#3b443e" opacity="0.80" transform="rotate(11 19.6 107.9)"/><ellipse cx="45.1" cy="124.0" rx="1.0" ry="1.0" fill="#565e53" opacity="0.73" transform="rotate(-27 45.1 124.0)"/><ellipse cx="26.7" cy="115.7" rx="0.7" ry="0.6" fill="#a57d52" opacity="0.72" transform="rotate(26 26.7 115.7)"/><ellipse cx="37.3" cy="108.0" rx="1.0" ry="1.0" fill="#3b443e" opacity="0.77" transform="rotate(32 37.3 108.0)"/><ellipse cx="19.6" cy="125.4" rx="1.1" ry="0.5" fill="#565e53" opacity="0.87" transform="rotate(37 19.6 125.4)"/><ellipse cx="53.4" cy="111.3" rx="0.7" ry="0.5" fill="#b89068" opacity="0.73" transform="rotate(-37 53.4 111.3)"/><ellipse cx="12.3" cy="117.7" rx="2.2" ry="0.7" fill="#a57d52" opacity="0.90" transform="rotate(10 12.3 117.7)"/><ellipse cx="51.5" cy="120.8" rx="0.8" ry="0.6" fill="#2a2f2a" opacity="0.82" transform="rotate(24 51.5 120.8)"/><ellipse cx="27.7" cy="115.4" rx="0.9" ry="1.1" fill="#2a2f2a" opacity="0.66" transform="rotate(-8 27.7 115.4)"/><ellipse cx="52.4" cy="107.2" rx="1.6" ry="0.4" fill="#a57d52" opacity="0.69" transform="rotate(25 52.4 107.2)"/><ellipse cx="41.9" cy="119.6" rx="2.4" ry="0.4" fill="#b89068" opacity="0.71" transform="rotate(-40 41.9 119.6)"/><ellipse cx="52.3" cy="120.2" rx="1.1" ry="0.8" fill="#8d6f4c" opacity="0.64" transform="rotate(1 52.3 120.2)"/><ellipse cx="26.7" cy="114.2" rx="1.3" ry="0.7" fill="#565e53" opacity="0.68" transform="rotate(-22 26.7 114.2)"/><ellipse cx="51.1" cy="124.7" rx="1.4" ry="1.0" fill="#a57d52" opacity="0.65" transform="rotate(-12 51.1 124.7)"/><ellipse cx="13.5" cy="119.0" rx="1.3" ry="0.9" fill="#565e53" opacity="0.94" transform="rotate(9 13.5 119.0)"/><ellipse cx="47.9" cy="119.2" rx="1.4" ry="0.6" fill="#2a2f2a" opacity="0.77" transform="rotate(40 47.9 119.2)"/><ellipse cx="26.5" cy="113.0" rx="1.9" ry="0.5" fill="#565e53" opacity="0.79" transform="rotate(-22 26.5 113.0)"/><ellipse cx="29.8" cy="109.1" rx="1.4" ry="0.6" fill="#a57d52" opacity="0.69" transform="rotate(-3 29.8 109.1)"/><ellipse cx="25.1" cy="109.5" rx="1.5" ry="0.6" fill="#565e53" opacity="0.64" transform="rotate(25 25.1 109.5)"/><ellipse cx="12.6" cy="124.8" rx="1.8" ry="0.5" fill="#565e53" opacity="0.89" transform="rotate(-25 12.6 124.8)"/><ellipse cx="21.6" cy="110.2" rx="1.3" ry="1.1" fill="#2a2f2a" opacity="0.92" transform="rotate(-28 21.6 110.2)"/><ellipse cx="27.6" cy="114.7" rx="0.9" ry="1.0" fill="#2a2f2a" opacity="0.65" transform="rotate(-38 27.6 114.7)"/><ellipse cx="29.9" cy="116.7" rx="1.5" ry="0.7" fill="#3b443e" opacity="0.70" transform="rotate(6 29.9 116.7)"/><ellipse cx="29.6" cy="125.2" rx="1.0" ry="0.8" fill="#b89068" opacity="0.90" transform="rotate(26 29.6 125.2)"/><ellipse cx="44.7" cy="120.9" rx="1.0" ry="0.5" fill="#a57d52" opacity="0.91" transform="rotate(23 44.7 120.9)"/><ellipse cx="44.3" cy="109.7" rx="0.8" ry="0.9" fill="#8d6f4c" opacity="0.88" transform="rotate(34 44.3 109.7)"/><ellipse cx="23.9" cy="106.2" rx="1.8" ry="0.8" fill="#a57d52" opacity="0.78" transform="rotate(4 23.9 106.2)"/><ellipse cx="25.1" cy="123.7" rx="2.2" ry="0.7" fill="#a57d52" opacity="0.74" transform="rotate(21 25.1 123.7)"/><ellipse cx="16.0" cy="120.0" rx="1.0" ry="0.8" fill="#2a2f2a" opacity="0.61" transform="rotate(7 16.0 120.0)"/><ellipse cx="35.9" cy="124.0" rx="1.2" ry="1.1" fill="#3b443e" opacity="0.62" transform="rotate(5 35.9 124.0)"/><ellipse cx="42.2" cy="123.1" rx="2.2" ry="0.6" fill="#8b9488" opacity="0.80" transform="rotate(-33 42.2 123.1)"/><ellipse cx="23.1" cy="108.3" rx="1.9" ry="0.7" fill="#a57d52" opacity="0.79" transform="rotate(28 23.1 108.3)"/><ellipse cx="16.0" cy="111.1" rx="0.8" ry="0.8" fill="#b89068" opacity="0.64" transform="rotate(-8 16.0 111.1)"/><ellipse cx="35.0" cy="126.1" rx="0.6" ry="1.0" fill="#2a2f2a" opacity="0.69" transform="rotate(36 35.0 126.1)"/><ellipse cx="38.7" cy="115.7" rx="1.0" ry="0.7" fill="#2a2f2a" opacity="0.90" transform="rotate(-18 38.7 115.7)"/><ellipse cx="12.0" cy="108.6" rx="1.5" ry="0.8" fill="#2a2f2a" opacity="0.64" transform="rotate(-25 12.0 108.6)"/><ellipse cx="28.3" cy="108.9" rx="1.7" ry="1.0" fill="#b89068" opacity="0.83" transform="rotate(19 28.3 108.9)"/><ellipse cx="43.6" cy="109.5" rx="2.1" ry="1.1" fill="#8b9488" opacity="0.84" transform="rotate(36 43.6 109.5)"/><ellipse cx="47.8" cy="117.0" rx="1.3" ry="1.1" fill="#2a2f2a" opacity="0.72" transform="rotate(-10 47.8 117.0)"/><ellipse cx="47.7" cy="121.0" rx="2.1" ry="0.8" fill="#2a2f2a" opacity="0.89" transform="rotate(31 47.7 121.0)"/><ellipse cx="12.4" cy="116.9" rx="2.3" ry="1.1" fill="#2a2f2a" opacity="0.90" transform="rotate(40 12.4 116.9)"/><ellipse cx="10.5" cy="108.3" rx="0.9" ry="0.6" fill="#2a2f2a" opacity="0.78" transform="rotate(-38 10.5 108.3)"/><ellipse cx="20.1" cy="114.8" rx="1.3" ry="1.1" fill="#565e53" opacity="0.82" transform="rotate(-35 20.1 114.8)"/><ellipse cx="11.5" cy="119.5" rx="1.1" ry="0.9" fill="#2a2f2a" opacity="0.82" transform="rotate(-36 11.5 119.5)"/><ellipse cx="38.0" cy="111.3" rx="1.5" ry="0.7" fill="#a57d52" opacity="0.70" transform="rotate(-1 38.0 111.3)"/><ellipse cx="25.6" cy="109.5" rx="0.7" ry="1.1" fill="#3b443e" opacity="0.92" transform="rotate(-30 25.6 109.5)"/><ellipse cx="31.0" cy="117.2" rx="0.9" ry="0.5" fill="#b89068" opacity="0.91" transform="rotate(12 31.0 117.2)"/><ellipse cx="36.0" cy="111.8" rx="1.9" ry="0.9" fill="#2a2f2a" opacity="0.89" transform="rotate(38 36.0 111.8)"/><ellipse cx="41.3" cy="110.7" rx="1.3" ry="0.8" fill="#2a2f2a" opacity="0.76" transform="rotate(30 41.3 110.7)"/><ellipse cx="23.7" cy="116.0" rx="2.1" ry="0.4" fill="#2a2f2a" opacity="0.68" transform="rotate(25 23.7 116.0)"/><ellipse cx="34.6" cy="126.4" rx="1.3" ry="1.0" fill="#b89068" opacity="0.90" transform="rotate(-10 34.6 126.4)"/><ellipse cx="24.6" cy="112.8" rx="1.1" ry="1.0" fill="#2a2f2a" opacity="0.70" transform="rotate(-38 24.6 112.8)"/></g><path d="M37 111c2.500-1.200 6.500-1.200 8.500 .2l-.5 2c-2.500 .8-5.500 .6-7.500-.4z" fill="#151916"/></g><text x="11.3" y="135.700" font-family="Liberation Sans,Noto Sans CJK KR,sans-serif" font-weight="900" fill="#16733a" stroke="#16733a" stroke-width="0.45" stroke-linejoin="round" font-size="7.700" textLength="41" lengthAdjust="spacingAndGlyphs">2023. 04. 26.</text><text x="24" y="142.500" font-family="Liberation Sans,Noto Sans CJK KR,sans-serif" font-weight="900" fill="#16733a" stroke="#16733a" stroke-width="0.45" stroke-linejoin="round" font-size="7.700" textLength="28.3" lengthAdjust="spacingAndGlyphs">– 10. 25.</text><text x="11.3" y="148.300" font-family="Liberation Sans,Noto Sans CJK KR,sans-serif" fill="#333" font-weight="700" font-size="3.6" textLength="40.500" lengthAdjust="spacingAndGlyphs">매주 수요일 14:00~16:00</text><text x="11.3" y="155.70" font-family="Liberation Sans,Noto Sans CJK KR,sans-serif" fill="#333" font-size="2.800" textLength="23" lengthAdjust="spacingAndGlyphs">대상 : 성인 100명</text><text x="11.3" y="159.78" font-family="Liberation Sans,Noto Sans CJK KR,sans-serif" fill="#333" font-size="2.800" textLength="36" lengthAdjust="spacingAndGlyphs">장소 : 국립전주박물관 강당</text><text x="11.3" y="163.86" font-family="Liberation Sans,Noto Sans CJK KR,sans-serif" fill="#333" font-size="2.800" textLength="43.5" lengthAdjust="spacingAndGlyphs">접수 : 누리집 사전예약 및 현장접수</text><text x="11.3" y="167.94" font-family="Liberation Sans,Noto Sans CJK KR,sans-serif" fill="#333" font-size="2.800" textLength="35.5" lengthAdjust="spacingAndGlyphs">문의 : 063-220-1016, 1035</text><text x="11.3" y="172.02" font-family="Liberation Sans,Noto Sans CJK KR,sans-serif" fill="#333" font-size="2.800" textLength="52.5" lengthAdjust="spacingAndGlyphs">주최 : 국립전주박물관, (재)백제세계유산센터</text><rect x="75.400" y="79.50" width="7.800" height="3.800" rx="1.900" fill="#fff" stroke="#3e9a5e" stroke-width="0.2" stroke-opacity="0.35"/><text x="76.300" y="82.20" font-family="Liberation Sans,sans-serif" font-size="2.200" font-weight="700" fill="#3e9a5e" fill-opacity="0.7" textLength="6" lengthAdjust="spacingAndGlyphs">04/26</text><text x="85.600" y="81.20" font-family="Liberation Sans,Noto Sans CJK KR,sans-serif" fill="#333" font-weight="700" font-size="2.300" fill-opacity="0.85" textLength="22.1" lengthAdjust="spacingAndGlyphs">백제문화의 정수 백제금동대향로</text><rect x="85.600" y="82.60" width="20.4" height="0.800" fill="#888" opacity="0.6"/><rect x="75.400" y="86.43" width="7.800" height="3.800" rx="1.900" fill="#fff" stroke="#d75a5a" stroke-width="0.2" stroke-opacity="0.35"/><text x="76.300" y="89.13" font-family="Liberation Sans,sans-serif" font-size="2.200" font-weight="700" fill="#d75a5a" fill-opacity="0.7" textLength="6" lengthAdjust="spacingAndGlyphs">05/10</text><text x="85.600" y="88.13" font-family="Liberation Sans,Noto Sans CJK KR,sans-serif" fill="#333" font-weight="700" font-size="2.300" fill-opacity="0.85" textLength="23.3" lengthAdjust="spacingAndGlyphs">백제의 사찰과 불탑</text><rect x="85.600" y="89.53" width="20.8" height="0.800" fill="#888" opacity="0.6"/><rect x="75.400" y="93.36" width="7.800" height="3.800" rx="1.900" fill="#fff" stroke="#d75a5a" stroke-width="0.2" stroke-opacity="0.35"/><text x="76.300" y="96.06" font-family="Liberation Sans,sans-serif" font-size="2.200" font-weight="700" fill="#d75a5a" fill-opacity="0.7" textLength="6" lengthAdjust="spacingAndGlyphs">05/17</text><text x="85.600" y="95.06" font-family="Liberation Sans,Noto Sans CJK KR,sans-serif" fill="#333" font-weight="700" font-size="2.300" fill-opacity="0.85" textLength="25.6" lengthAdjust="spacingAndGlyphs">고고학으로 본 한성기의 백제왕도</text><rect x="85.600" y="96.46" width="16.5" height="0.800" fill="#888" opacity="0.6"/><rect x="75.400" y="100.29" width="7.800" height="3.800" rx="1.900" fill="#fff" stroke="#d75a5a" stroke-width="0.2" stroke-opacity="0.35"/><text x="76.300" y="102.99" font-family="Liberation Sans,sans-serif" font-size="2.200" font-weight="700" fill="#d75a5a" fill-opacity="0.7" textLength="6" lengthAdjust="spacingAndGlyphs">05/24</text><text x="85.600" y="101.99" font-family="Liberation Sans,Noto Sans CJK KR,sans-serif" fill="#333" font-weight="700" font-size="2.300" fill-opacity="0.85" textLength="20.1" lengthAdjust="spacingAndGlyphs">문헌으로 본 웅진기의 백제왕도와 문화</text><rect x="85.600" y="103.39" width="22.7" height="0.800" fill="#888" opacity="0.6"/><rect x="75.400" y="107.22" width="7.800" height="3.800" rx="1.900" fill="#fff" stroke="#3e9a5e" stroke-width="0.2" stroke-opacity="0.35"/><text x="76.300" y="109.92" font-family="Liberation Sans,sans-serif" font-size="2.200" font-weight="700" fill="#3e9a5e" fill-opacity="0.7" textLength="6" lengthAdjust="spacingAndGlyphs">06/14</text><text x="85.600" y="108.92" font-family="Liberation Sans,Noto Sans CJK KR,sans-serif" fill="#333" font-weight="700" font-size="2.300" fill-opacity="0.85" textLength="22.3" lengthAdjust="spacingAndGlyphs">백제의 고분</text><rect x="85.600" y="110.32" width="17.9" height="0.800" fill="#888" opacity="0.6"/><rect x="75.400" y="114.15" width="7.800" height="3.800" rx="1.900" fill="#fff" stroke="#3e9a5e" stroke-width="0.2" stroke-opacity="0.35"/><text x="76.300" y="116.85" font-family="Liberation Sans,sans-serif" font-size="2.200" font-weight="700" fill="#3e9a5e" fill-opacity="0.7" textLength="6" lengthAdjust="spacingAndGlyphs">06/28</text><text x="85.600" y="115.85" font-family="Liberation Sans,Noto Sans CJK KR,sans-serif" fill="#333" font-weight="700" font-size="2.300" fill-opacity="0.85" textLength="29.0" lengthAdjust="spacingAndGlyphs">금동신발로 풀어보는 마지막 백제왕도</text><rect x="85.600" y="117.25" width="19.8" height="0.800" fill="#888" opacity="0.6"/><rect x="75.400" y="121.08" width="7.800" height="3.800" rx="1.900" fill="#fff" stroke="#d75a5a" stroke-width="0.2" stroke-opacity="0.35"/><text x="76.300" y="123.78" font-family="Liberation Sans,sans-serif" font-size="2.200" font-weight="700" fill="#d75a5a" fill-opacity="0.7" textLength="6" lengthAdjust="spacingAndGlyphs">07/05</text><text x="85.600" y="122.78" font-family="Liberation Sans,Noto Sans CJK KR,sans-serif" fill="#333" font-weight="700" font-size="2.300" fill-opacity="0.85" textLength="27.5" lengthAdjust="spacingAndGlyphs">문헌으로 본 사비기의 백제왕도와 문화</text><rect x="85.600" y="124.18" width="19.8" height="0.800" fill="#888" opacity="0.6"/><rect x="75.400" y="128.01" width="7.800" height="3.800" rx="1.900" fill="#fff" stroke="#d75a5a" stroke-width="0.2" stroke-opacity="0.35"/><text x="76.300" y="130.71" font-family="Liberation Sans,sans-serif" font-size="2.200" font-weight="700" fill="#d75a5a" fill-opacity="0.7" textLength="6" lengthAdjust="spacingAndGlyphs">07/19</text><text x="85.600" y="129.71" font-family="Liberation Sans,Noto Sans CJK KR,sans-serif" fill="#333" font-weight="700" font-size="2.300" fill-opacity="0.85" textLength="25.8" lengthAdjust="spacingAndGlyphs">백제 왕릉의 비교 검토</text><rect x="85.600" y="131.11" width="17.2" height="0.800" fill="#888" opacity="0.6"/><rect x="75.400" y="134.94" width="7.800" height="3.800" rx="1.900" fill="#fff" stroke="#3e9a5e" stroke-width="0.2" stroke-opacity="0.35"/><text x="76.300" y="137.64" font-family="Liberation Sans,sans-serif" font-size="2.200" font-weight="700" fill="#3e9a5e" fill-opacity="0.7" textLength="6" lengthAdjust="spacingAndGlyphs">08/16</text><text x="85.600" y="136.64" font-family="Liberation Sans,Noto Sans CJK KR,sans-serif" fill="#333" font-weight="700" font-size="2.300" fill-opacity="0.85" textLength="25.7" lengthAdjust="spacingAndGlyphs">청소년박물관 교육 프로그램</text><rect x="85.600" y="138.04" width="22.9" height="0.800" fill="#888" opacity="0.6"/><rect x="75.400" y="141.87" width="7.800" height="3.800" rx="1.900" fill="#fff" stroke="#3e9a5e" stroke-width="0.2" stroke-opacity="0.35"/><text x="76.300" y="144.57" font-family="Liberation Sans,sans-serif" font-size="2.200" font-weight="700" fill="#3e9a5e" fill-opacity="0.7" textLength="6" lengthAdjust="spacingAndGlyphs">08/30</text><text x="85.600" y="143.57" font-family="Liberation Sans,Noto Sans CJK KR,sans-serif" fill="#333" font-weight="700" font-size="2.300" fill-opacity="0.85" textLength="24.7" lengthAdjust="spacingAndGlyphs">문헌으로 본 익산의 백제 왕도</text><rect x="85.600" y="144.97" width="21.9" height="0.800" fill="#888" opacity="0.6"/><rect x="75.400" y="148.80" width="7.800" height="3.800" rx="1.900" fill="#fff" stroke="#d75a5a" stroke-width="0.2" stroke-opacity="0.35"/><text x="76.300" y="151.50" font-family="Liberation Sans,sans-serif" font-size="2.200" font-weight="700" fill="#d75a5a" fill-opacity="0.7" textLength="6" lengthAdjust="spacingAndGlyphs">09/13</text><text x="85.600" y="150.50" font-family="Liberation Sans,Noto Sans CJK KR,sans-serif" fill="#333" font-weight="700" font-size="2.300" fill-opacity="0.85" textLength="26.0" lengthAdjust="spacingAndGlyphs">백제 불교 문화유산</text><rect x="85.600" y="151.90" width="16.5" height="0.800" fill="#888" opacity="0.6"/><rect x="75.400" y="155.73" width="7.800" height="3.800" rx="1.900" fill="#fff" stroke="#d75a5a" stroke-width="0.2" stroke-opacity="0.35"/><text x="76.300" y="158.43" font-family="Liberation Sans,sans-serif" font-size="2.200" font-weight="700" fill="#d75a5a" fill-opacity="0.7" textLength="6" lengthAdjust="spacingAndGlyphs">09/27</text><text x="85.600" y="157.43" font-family="Liberation Sans,Noto Sans CJK KR,sans-serif" fill="#333" font-weight="700" font-size="2.300" fill-opacity="0.85" textLength="26.8" lengthAdjust="spacingAndGlyphs">백제의 역사를 찾아서 미륵사 발굴 이야기</text><rect x="85.600" y="158.83" width="20.7" height="0.800" fill="#888" opacity="0.6"/><rect x="75.400" y="162.66" width="7.800" height="3.800" rx="1.900" fill="#fff" stroke="#3e9a5e" stroke-width="0.2" stroke-opacity="0.35"/><text x="76.300" y="165.36" font-family="Liberation Sans,sans-serif" font-size="2.200" font-weight="700" fill="#3e9a5e" fill-opacity="0.7" textLength="6" lengthAdjust="spacingAndGlyphs">10/11</text><text x="85.600" y="164.36" font-family="Liberation Sans,Noto Sans CJK KR,sans-serif" fill="#333" font-weight="700" font-size="2.300" fill-opacity="0.85" textLength="22.7" lengthAdjust="spacingAndGlyphs">청소년문화재 박물관에서 배움</text><rect x="85.600" y="165.76" width="16.2" height="0.800" fill="#888" opacity="0.6"/><rect x="75.400" y="169.59" width="7.800" height="3.800" rx="1.900" fill="#fff" stroke="#3e9a5e" stroke-width="0.2" stroke-opacity="0.35"/><text x="76.300" y="172.29" font-family="Liberation Sans,sans-serif" font-size="2.200" font-weight="700" fill="#3e9a5e" fill-opacity="0.7" textLength="6" lengthAdjust="spacingAndGlyphs">10/25</text><text x="85.600" y="171.29" font-family="Liberation Sans,Noto Sans CJK KR,sans-serif" fill="#333" font-weight="700" font-size="2.300" fill-opacity="0.85" textLength="27.8" lengthAdjust="spacingAndGlyphs">백제의 멸망 과정</text><rect x="85.600" y="172.69" width="19.8" height="0.800" fill="#888" opacity="0.6"/><rect x="74.800" y="181.200" width="28" height="0.700" fill="#999"/><rect x="74.800" y="184.500" width="51.9" height="4.500" fill="#1a3567"/></svg>
<div class="bd b1 green">접수예정</div><div class="bd b2">온라인 선착순</div><div class="more">자세히보기</div>
<div class="cat">유아·가족 / 중·고등학생</div><div class="tit">선인들이 즐겨 쓴 중국 글씨본 중국</div><div class="row" style="top:97.9px"><b>교육기간</b>2023.04.26 ~ 2023.10.25</div><div class="row" style="top:123.65px"><b>교육시간</b>10:00 ~ 11:40</div><div class="row" style="top:149.4px"><b>접수기간</b>2023.04.11 09:00 ~ 2023.10.24 00:00</div><div class="row" style="top:175.15px"><b>교육대상</b>초등4학년 ~ 고3학년 단체 1팀(최대 30명)</div></div>
<div class="card" style="left:409.5px;top:503.3px"><svg class="poster" viewBox="0 0 126.7 189" preserveAspectRatio="none"><rect width="126.7" height="189" fill="#e9e6e0"/><g opacity="1.0"><circle cx="52.2" cy="-1.5" r="12.6" fill="#dddbd7" stroke="#b4b2ae" stroke-width="0.7"/><circle cx="52.2" cy="-1.5" r="10.08" fill="#e3e1dd" stroke="#c2c0bc" stroke-width="0.5"/><ellipse cx="57.98" cy="0.29" rx="2.52" ry="1.64" transform="rotate(17.2 57.98 0.29)" fill="#d3d1cd" stroke="#bab8b4" stroke-width="0.3"/><ellipse cx="55.02" cy="3.85" rx="2.52" ry="1.64" transform="rotate(62.2 55.02 3.85)" fill="#d3d1cd" stroke="#bab8b4" stroke-width="0.3"/><ellipse cx="50.41" cy="4.28" rx="2.52" ry="1.64" transform="rotate(107.2 50.41 4.28)" fill="#d3d1cd" stroke="#bab8b4" stroke-width="0.3"/><ellipse cx="46.85" cy="1.32" rx="2.52" ry="1.64" transform="rotate(152.2 46.85 1.32)" fill="#d3d1cd" stroke="#bab8b4" stroke-width="0.3"/><ellipse cx="46.42" cy="-3.29" rx="2.52" ry="1.64" transform="rotate(197.2 46.42 -3.29)" fill="#d3d1cd" stroke="#bab8b4" stroke-width="0.3"/><ellipse cx="49.38" cy="-6.85" rx="2.52" ry="1.64" transform="rotate(242.2 49.38 -6.85)" fill="#d3d1cd" stroke="#bab8b4" stroke-width="0.3"/><ellipse cx="53.99" cy="-7.28" rx="2.52" ry="1.64" transform="rotate(287.2 53.99 -7.28)" fill="#d3d1cd" stroke="#bab8b4" stroke-width="0.3"/><ellipse cx="57.55" cy="-4.32" rx="2.52" ry="1.64" transform="rotate(332.2 57.55 -4.32)" fill="#d3d1cd" stroke="#bab8b4" stroke-width="0.3"/><circle cx="52.2" cy="-1.5" r="2.52" fill="#d0cec9" stroke="#b8b6b2" stroke-width="0.4"/></g><g opacity="1.0"><circle cx="-11.5" cy="31" r="25.2" fill="#dddbd7" stroke="#b4b2ae" stroke-width="0.7"/><circle cx="-11.5" cy="31" r="20.16" fill="#e3e1dd" stroke="#c2c0bc" stroke-width="0.5"/><ellipse cx="0.06" cy="34.57" rx="5.04" ry="3.28" transform="rotate(17.2 0.06 34.57)" fill="#d3d1cd" stroke="#bab8b4" stroke-width="0.3"/><ellipse cx="-5.86" cy="41.70" rx="5.04" ry="3.28" transform="rotate(62.2 -5.86 41.70)" fill="#d3d1cd" stroke="#bab8b4" stroke-width="0.3"/><ellipse cx="-15.07" cy="42.56" rx="5.04" ry="3.28" transform="rotate(107.2 -15.07 42.56)" fill="#d3d1cd" stroke="#bab8b4" stroke-width="0.3"/><ellipse cx="-22.20" cy="36.64" rx="5.04" ry="3.28" transform="rotate(152.2 -22.20 36.64)" fill="#d3d1cd" stroke="#bab8b4" stroke-width="0.3"/><ellipse cx="-23.06" cy="27.43" rx="5.04" ry="3.28" transform="rotate(197.2 -23.06 27.43)" fill="#d3d1cd" stroke="#bab8b4" stroke-width="0.3"/><ellipse cx="-17.14" cy="20.30" rx="5.04" ry="3.28" transform="rotate(242.2 -17.14 20.30)" fill="#d3d1cd" stroke="#bab8b4" stroke-width="0.3"/><ellipse cx="-7.93" cy="19.44" rx="5.04" ry="3.28" transform="rotate(287.2 -7.93 19.44)" fill="#d3d1cd" stroke="#bab8b4" stroke-width="0.3"/><ellipse cx="-0.80" cy="25.36" rx="5.04" ry="3.28" transform="rotate(332.2 -0.80 25.36)" fill="#d3d1cd" stroke="#bab8b4" stroke-width="0.3"/><circle cx="-11.5" cy="31" r="5.04" fill="#d0cec9" stroke="#b8b6b2" stroke-width="0.4"/></g><g opacity="0.9"><circle cx="9" cy="184.5" r="19.5" fill="#dddbd7" stroke="#b4b2ae" stroke-width="0.7"/><circle cx="9" cy="184.5" r="15.60" fill="#e3e1dd" stroke="#c2c0bc" stroke-width="0.5"/><ellipse cx="17.94" cy="187.27" rx="3.90" ry="2.54" transform="rotate(17.2 17.94 187.27)" fill="#d3d1cd" stroke="#bab8b4" stroke-width="0.3"/><ellipse cx="13.37" cy="192.78" rx="3.90" ry="2.54" transform="rotate(62.2 13.37 192.78)" fill="#d3d1cd" stroke="#bab8b4" stroke-width="0.3"/><ellipse cx="6.23" cy="193.44" rx="3.90" ry="2.54" transform="rotate(107.2 6.23 193.44)" fill="#d3d1cd" stroke="#bab8b4" stroke-width="0.3"/><ellipse cx="0.72" cy="188.87" rx="3.90" ry="2.54" transform="rotate(152.2 0.72 188.87)" fill="#d3d1cd" stroke="#bab8b4" stroke-width="0.3"/><ellipse cx="0.06" cy="181.73" rx="3.90" ry="2.54" transform="rotate(197.2 0.06 181.73)" fill="#d3d1cd" stroke="#bab8b4" stroke-width="0.3"/><ellipse cx="4.63" cy="176.22" rx="3.90" ry="2.54" transform="rotate(242.2 4.63 176.22)" fill="#d3d1cd" stroke="#bab8b4" stroke-width="0.3"/><ellipse cx="11.77" cy="175.56" rx="3.90" ry="2.54" transform="rotate(287.2 11.77 175.56)" fill="#d3d1cd" stroke="#bab8b4" stroke-width="0.3"/><ellipse cx="17.28" cy="180.13" rx="3.90" ry="2.54" transform="rotate(332.2 17.28 180.13)" fill="#d3d1cd" stroke="#bab8b4" stroke-width="0.3"/><circle cx="9" cy="184.5" r="3.90" fill="#d0cec9" stroke="#b8b6b2" stroke-width="0.4"/></g><g opacity="0.9"><circle cx="57.6" cy="122.6" r="5.6" fill="#dddbd7" stroke="#b4b2ae" stroke-width="0.7"/><circle cx="57.6" cy="122.6" r="4.48" fill="#e3e1dd" stroke="#c2c0bc" stroke-width="0.5"/><ellipse cx="60.17" cy="123.39" rx="1.12" ry="0.73" transform="rotate(17.2 60.17 123.39)" fill="#d3d1cd" stroke="#bab8b4" stroke-width="0.3"/><ellipse cx="58.85" cy="124.98" rx="1.12" ry="0.73" transform="rotate(62.2 58.85 124.98)" fill="#d3d1cd" stroke="#bab8b4" stroke-width="0.3"/><ellipse cx="56.81" cy="125.17" rx="1.12" ry="0.73" transform="rotate(107.2 56.81 125.17)" fill="#d3d1cd" stroke="#bab8b4" stroke-width="0.3"/><ellipse cx="55.22" cy="123.85" rx="1.12" ry="0.73" transform="rotate(152.2 55.22 123.85)" fill="#d3d1cd" stroke="#bab8b4" stroke-width="0.3"/><ellipse cx="55.03" cy="121.81" rx="1.12" ry="0.73" transform="rotate(197.2 55.03 121.81)" fill="#d3d1cd" stroke="#bab8b4" stroke-width="0.3"/><ellipse cx="56.35" cy="120.22" rx="1.12" ry="0.73" transform="rotate(242.2 56.35 120.22)" fill="#d3d1cd" stroke="#bab8b4" stroke-width="0.3"/><ellipse cx="58.39" cy="120.03" rx="1.12" ry="0.73" transform="rotate(287.2 58.39 120.03)" fill="#d3d1cd" stroke="#bab8b4" stroke-width="0.3"/><ellipse cx="59.98" cy="121.35" rx="1.12" ry="0.73" transform="rotate(332.2 59.98 121.35)" fill="#d3d1cd" stroke="#bab8b4" stroke-width="0.3"/><circle cx="57.6" cy="122.6" r="1.12" fill="#d0cec9" stroke="#b8b6b2" stroke-width="0.4"/></g><circle cx="72.4" cy="10.4" r="1.6" fill="#c8102e"/><path d="M70.8 10.4a1.6 1.6 0 0 0 3.2 0z" fill="#1d3f94"/><text x="74.8" y="11.4" font-family="Liberation Sans,Noto Sans CJK KR,sans-serif" font-size="2.9" font-weight="700" fill="#333" textLength="13.5" lengthAdjust="spacingAndGlyphs">국립전주박물관</text><rect x="94.3" y="8.3" width="2.6" height="4.2" rx="0.8" fill="#8a5a2b"/><text x="98" y="11.3" font-family="Liberation Sans,Noto Sans CJK KR,sans-serif" font-size="2.6" font-weight="700" fill="#8a5a2b" textLength="18.5" lengthAdjust="spacingAndGlyphs">국립익산박물관</text><text x="70.6" y="36.9" font-family="Liberation Sans,Noto Sans CJK KR,sans-serif" font-weight="900" fill="#1b3d86" font-size="12.400" textLength="46.8" lengthAdjust="spacingAndGlyphs">세계유산</text><text x="94.2" y="52.4" font-family="Liberation Sans,Noto Sans CJK KR,sans-serif" font-weight="900" fill="#1b3d86" font-size="12.400" textLength="23.2" lengthAdjust="spacingAndGlyphs">백제</text><text x="70.6" y="67.6" font-family="Liberation Sans,Noto Sans CJK KR,sans-serif" font-weight="900" fill="#1b3d86" font-size="12.400" textLength="46.8" lengthAdjust="spacingAndGlyphs">아카데미</text><path d="M71.5 50.8c1.5 1.2 4 1 5-.2c1.6 1.5 5 1.5 6.4-.1c2 1.3 5.600 1 7.200-.5c1.300-1.300 .4-3-1.400-3c-.3-1.800-3.600-2.300-5-.9c-1-1.500-4.200-1.500-5 .3c-1.800-.6-3.600 .4-3.500 1.900c-1.800-.2-3.500 1-3.700 2.500z" fill="#f1e6d0" stroke="#c8a468" stroke-width="0.7"/><path d="M76 49.400c.2-1.300 2.400-1.500 2.800-.2m3.400-.2c.5-1.500 3.200-1.500 3.600 .2" fill="none" stroke="#c8a468" stroke-width="0.6"/><filter id="rg4" x="-10%" y="-10%" width="120%" height="120%"><feTurbulence type="fractalNoise" baseFrequency="0.55" numOctaves="2" seed="4" result="n"/><feDisplacementMap in="SourceGraphic" in2="n" scale="2.2" xChannelSelector="R" yChannelSelector="G"/></filter><g filter="url(#rg4)"><g transform="translate(28 34.6) scale(1.12) translate(-28 -33)"><path d="M19.400 19.800l3.200 1.600l4.300 3.300c.6-1.500 1.700-2.600 3-3.100c.3-1.400 1.300-2.600 2.600-3l1 1.500c1.300 .6 2.100 1.900 2 3.400c.8 1.300 .6 3-.4 4.100c-.2 1.800-1.300 3.200-2.900 3.800l.2 2.700h-2.200l-.2-2.500c-1.900-.3-3.500-1.500-4.300-3.200l-2.200-3.600z" fill="#80867c"/><path d="M19.400 19.800l7.200 5.800l-1 1z" fill="#9aa096"/><path d="M30 23.500c1.200-.8 2.800-.4 3.400 1c-.6 1.600-2.400 2.300-3.900 1.500z" fill="#4f5750"/><path d="M28.500 29.500c1.500 1 3.500 1 4.800-.2l-.3 1.600c-1.300 .8-3 .7-4.200-.2z" fill="#3c443e"/></g><path d="M31.300 33.500h3.400l.7 6.500h-4.800z" fill="#4e5750"/><rect x="30.600" y="36.200" width="4.800" height="1" fill="#8d7353"/><clipPath id="eggc4"><path d="M32.5 38.3L28.5 40.5L25.8 42.3L23.2 45L19.7 50L17.7 55L16.2 60L15.5 65L15.2 70L16.7 75L20.7 80L24.5 82.6L28.2 84L33.2 85L38.2 84L41.5 82.6L43.8 80L48.3 75L49.7 70L49.2 65L48.2 60L46.7 55L44.2 50L41.2 45L38.6 42.3L36 40.5L34 38.3z"/></clipPath><path d="M32.5 38.3L28.5 40.5L25.8 42.3L23.2 45L19.7 50L17.7 55L16.2 60L15.5 65L15.2 70L16.7 75L20.7 80L24.5 82.6L28.2 84L33.2 85L38.2 84L41.5 82.6L43.8 80L48.3 75L49.7 70L49.2 65L48.2 60L46.7 55L44.2 50L41.2 45L38.6 42.3L36 40.5L34 38.3z" fill="#383d36" stroke="#383d36" stroke-width="1" stroke-linejoin="round"/><g clip-path="url(#eggc4)"><path d="M14 67h40v20h-40z" fill="#4b554d"/><ellipse cx="26.7" cy="42.2" rx="1.2" ry="0.5" fill="#3b443e" opacity="0.63" transform="rotate(-56 26.7 42.2)"/><ellipse cx="47.7" cy="44.0" rx="0.5" ry="0.7" fill="#1f2622" opacity="0.63" transform="rotate(38 47.7 44.0)"/><ellipse cx="17.1" cy="53.8" rx="1.5" ry="0.9" fill="#3b443e" opacity="0.93" transform="rotate(31 17.1 53.8)"/><ellipse cx="16.8" cy="44.2" rx="1.1" ry="0.5" fill="#8b9488" opacity="0.65" transform="rotate(-40 16.8 44.2)"/><ellipse cx="35.6" cy="53.7" rx="1.2" ry="0.5" fill="#3b443e" opacity="0.82" transform="rotate(25 35.6 53.7)"/><ellipse cx="18.5" cy="57.9" rx="1.1" ry="0.9" fill="#a57d52" opacity="0.84" transform="rotate(39 18.5 57.9)"/><ellipse cx="43.0" cy="51.0" rx="1.5" ry="0.7" fill="#1f2622" opacity="0.88" transform="rotate(-8 43.0 51.0)"/><ellipse cx="17.9" cy="46.4" rx="1.0" ry="0.7" fill="#a57d52" opacity="0.70" transform="rotate(-52 17.9 46.4)"/><ellipse cx="19.3" cy="49.7" rx="1.3" ry="0.5" fill="#a57d52" opacity="0.75" transform="rotate(-51 19.3 49.7)"/><ellipse cx="42.5" cy="54.0" rx="1.5" ry="0.7" fill="#b08a5e" opacity="0.72" transform="rotate(57 42.5 54.0)"/><ellipse cx="35.9" cy="50.8" rx="1.4" ry="1.2" fill="#a57d52" opacity="0.84" transform="rotate(-54 35.9 50.8)"/><ellipse cx="17.2" cy="57.6" rx="1.2" ry="1.2" fill="#59635a" opacity="0.76" transform="rotate(28 17.2 57.6)"/><ellipse cx="46.9" cy="47.7" rx="1.5" ry="0.7" fill="#3b443e" opacity="0.64" transform="rotate(-55 46.9 47.7)"/><ellipse cx="22.9" cy="46.0" rx="1.3" ry="0.7" fill="#59635a" opacity="0.77" transform="rotate(-28 22.9 46.0)"/><ellipse cx="31.2" cy="53.4" rx="1.5" ry="1.1" fill="#59635a" opacity="0.79" transform="rotate(36 31.2 53.4)"/><ellipse cx="50.5" cy="57.1" rx="0.9" ry="0.6" fill="#2a2f2a" opacity="0.66" transform="rotate(-11 50.5 57.1)"/><ellipse cx="38.7" cy="38.3" rx="1.4" ry="0.5" fill="#1f2622" opacity="0.60" transform="rotate(37 38.7 38.3)"/><ellipse cx="34.2" cy="55.1" rx="0.8" ry="0.5" fill="#59635a" opacity="0.78" transform="rotate(-57 34.2 55.1)"/><ellipse cx="31.4" cy="62.4" rx="1.5" ry="0.9" fill="#3b443e" opacity="0.74" transform="rotate(32 31.4 62.4)"/><ellipse cx="29.2" cy="51.5" rx="0.9" ry="0.6" fill="#1f2622" opacity="0.75" transform="rotate(-42 29.2 51.5)"/><ellipse cx="27.2" cy="39.5" rx="0.4" ry="0.5" fill="#2a2f2a" opacity="0.93" transform="rotate(-64 27.2 39.5)"/><ellipse cx="17.5" cy="43.8" rx="0.9" ry="0.9" fill="#6c7468" opacity="0.81" transform="rotate(51 17.5 43.8)"/><ellipse cx="19.4" cy="61.8" rx="1.6" ry="0.8" fill="#a57d52" opacity="0.71" transform="rotate(-34 19.4 61.8)"/><ellipse cx="18.7" cy="47.6" rx="0.7" ry="1.1" fill="#1f2622" opacity="0.78" transform="rotate(-18 18.7 47.6)"/><ellipse cx="49.2" cy="52.8" rx="0.6" ry="0.8" fill="#2a2f2a" opacity="0.87" transform="rotate(6 49.2 52.8)"/><ellipse cx="50.2" cy="62.2" rx="1.2" ry="0.6" fill="#6c7468" opacity="0.92" transform="rotate(21 50.2 62.2)"/><ellipse cx="42.8" cy="52.9" rx="1.3" ry="0.7" fill="#1f2622" opacity="0.81" transform="rotate(-21 42.8 52.9)"/><ellipse cx="44.0" cy="60.9" rx="1.3" ry="0.6" fill="#3b443e" opacity="0.77" transform="rotate(-63 44.0 60.9)"/><ellipse cx="50.6" cy="60.1" rx="1.0" ry="0.6" fill="#3b443e" opacity="0.93" transform="rotate(44 50.6 60.1)"/><ellipse cx="44.1" cy="58.2" rx="0.8" ry="1.2" fill="#2a2f2a" opacity="0.68" transform="rotate(-12 44.1 58.2)"/><ellipse cx="31.9" cy="47.5" rx="1.0" ry="1.2" fill="#3b443e" opacity="0.89" transform="rotate(52 31.9 47.5)"/><ellipse cx="47.7" cy="47.6" rx="1.2" ry="1.1" fill="#2a2f2a" opacity="0.92" transform="rotate(-19 47.7 47.6)"/><ellipse cx="32.2" cy="43.0" rx="1.3" ry="0.7" fill="#8d6f4c" opacity="0.93" transform="rotate(31 32.2 43.0)"/><ellipse cx="31.7" cy="58.8" rx="0.5" ry="0.5" fill="#1f2622" opacity="0.61" transform="rotate(49 31.7 58.8)"/><ellipse cx="44.0" cy="42.1" rx="1.4" ry="1.2" fill="#7f8a7e" opacity="0.93" transform="rotate(-31 44.0 42.1)"/><ellipse cx="34.8" cy="41.7" rx="0.4" ry="1.2" fill="#7f8a7e" opacity="0.64" transform="rotate(-35 34.8 41.7)"/><ellipse cx="30.6" cy="62.4" rx="1.4" ry="0.6" fill="#1f2622" opacity="0.67" transform="rotate(58 30.6 62.4)"/><ellipse cx="23.7" cy="54.4" rx="0.7" ry="0.7" fill="#1f2622" opacity="0.62" transform="rotate(20 23.7 54.4)"/><ellipse cx="47.3" cy="56.5" rx="1.4" ry="0.8" fill="#59635a" opacity="0.92" transform="rotate(58 47.3 56.5)"/><ellipse cx="19.7" cy="42.3" rx="1.0" ry="1.1" fill="#8d6f4c" opacity="0.66" transform="rotate(-69 19.7 42.3)"/><ellipse cx="42.9" cy="42.2" rx="0.6" ry="0.9" fill="#2a2f2a" opacity="0.79" transform="rotate(13 42.9 42.2)"/><ellipse cx="39.6" cy="52.9" rx="1.0" ry="1.0" fill="#3b443e" opacity="0.62" transform="rotate(-22 39.6 52.9)"/><ellipse cx="25.0" cy="59.6" rx="1.0" ry="0.8" fill="#8d6f4c" opacity="0.91" transform="rotate(-54 25.0 59.6)"/><ellipse cx="31.0" cy="55.2" rx="1.0" ry="0.8" fill="#b08a5e" opacity="0.70" transform="rotate(60 31.0 55.2)"/><ellipse cx="34.2" cy="51.4" rx="1.5" ry="1.0" fill="#1f2622" opacity="0.92" transform="rotate(-19 34.2 51.4)"/><ellipse cx="45.2" cy="41.8" rx="0.5" ry="0.8" fill="#2a2f2a" opacity="0.83" transform="rotate(39 45.2 41.8)"/><ellipse cx="17.6" cy="56.7" rx="1.3" ry="1.1" fill="#1f2622" opacity="0.93" transform="rotate(23 17.6 56.7)"/><ellipse cx="20.1" cy="62.7" rx="1.6" ry="0.6" fill="#2a2f2a" opacity="0.74" transform="rotate(54 20.1 62.7)"/><ellipse cx="20.9" cy="56.7" rx="0.7" ry="1.0" fill="#3b443e" opacity="0.74" transform="rotate(37 20.9 56.7)"/><ellipse cx="22.0" cy="46.9" rx="1.3" ry="0.4" fill="#3b443e" opacity="0.76" transform="rotate(-66 22.0 46.9)"/><ellipse cx="28.8" cy="52.5" rx="0.8" ry="1.2" fill="#2a2f2a" opacity="0.94" transform="rotate(-12 28.8 52.5)"/><ellipse cx="50.0" cy="40.9" rx="0.7" ry="0.4" fill="#8d6f4c" opacity="0.66" transform="rotate(-37 50.0 40.9)"/><ellipse cx="44.5" cy="61.8" rx="1.2" ry="1.2" fill="#8b9488" opacity="0.65" transform="rotate(61 44.5 61.8)"/><ellipse cx="35.5" cy="57.6" rx="0.5" ry="0.4" fill="#b08a5e" opacity="0.66" transform="rotate(-52 35.5 57.6)"/><ellipse cx="24.7" cy="38.5" rx="0.5" ry="0.6" fill="#3b443e" opacity="0.90" transform="rotate(-53 24.7 38.5)"/><ellipse cx="24.5" cy="41.4" rx="0.4" ry="1.2" fill="#8b9488" opacity="0.92" transform="rotate(-2 24.5 41.4)"/><ellipse cx="37.4" cy="39.2" rx="1.3" ry="1.2" fill="#1f2622" opacity="0.69" transform="rotate(-24 37.4 39.2)"/><ellipse cx="22.3" cy="46.7" rx="0.8" ry="1.0" fill="#1f2622" opacity="0.76" transform="rotate(-25 22.3 46.7)"/><ellipse cx="24.7" cy="60.5" rx="1.6" ry="0.4" fill="#2a2f2a" opacity="0.86" transform="rotate(-22 24.7 60.5)"/><ellipse cx="33.5" cy="44.9" rx="0.9" ry="0.9" fill="#7f8a7e" opacity="0.75" transform="rotate(56 33.5 44.9)"/><ellipse cx="34.7" cy="62.9" rx="1.6" ry="0.6" fill="#1f2622" opacity="0.94" transform="rotate(17 34.7 62.9)"/><ellipse cx="22.2" cy="62.7" rx="1.3" ry="0.5" fill="#6c7468" opacity="0.94" transform="rotate(-37 22.2 62.7)"/><ellipse cx="15.5" cy="55.5" rx="1.5" ry="0.7" fill="#2a2f2a" opacity="0.63" transform="rotate(27 15.5 55.5)"/><ellipse cx="46.3" cy="56.8" rx="0.7" ry="0.6" fill="#1f2622" opacity="0.62" transform="rotate(-23 46.3 56.8)"/><ellipse cx="20.7" cy="50.5" rx="0.7" ry="1.2" fill="#3b443e" opacity="0.71" transform="rotate(-62 20.7 50.5)"/><ellipse cx="49.8" cy="46.7" rx="0.8" ry="0.4" fill="#8b9488" opacity="0.63" transform="rotate(1 49.8 46.7)"/><ellipse cx="33.1" cy="43.6" rx="1.0" ry="0.4" fill="#1f2622" opacity="0.89" transform="rotate(-34 33.1 43.6)"/><ellipse cx="29.4" cy="39.2" rx="0.4" ry="0.6" fill="#1f2622" opacity="0.63" transform="rotate(65 29.4 39.2)"/><ellipse cx="45.7" cy="42.3" rx="1.5" ry="1.0" fill="#3b443e" opacity="0.74" transform="rotate(13 45.7 42.3)"/><ellipse cx="40.9" cy="51.8" rx="0.7" ry="0.9" fill="#1f2622" opacity="0.62" transform="rotate(61 40.9 51.8)"/><ellipse cx="37.6" cy="58.5" rx="1.4" ry="0.5" fill="#3b443e" opacity="0.86" transform="rotate(-66 37.6 58.5)"/><ellipse cx="44.8" cy="54.4" rx="1.5" ry="0.9" fill="#b08a5e" opacity="0.83" transform="rotate(-49 44.8 54.4)"/><ellipse cx="16.1" cy="41.7" rx="0.8" ry="0.5" fill="#59635a" opacity="0.76" transform="rotate(-58 16.1 41.7)"/><ellipse cx="37.6" cy="55.5" rx="1.2" ry="0.8" fill="#2a2f2a" opacity="0.76" transform="rotate(-53 37.6 55.5)"/><ellipse cx="41.9" cy="52.1" rx="1.0" ry="0.9" fill="#2a2f2a" opacity="0.86" transform="rotate(51 41.9 52.1)"/><ellipse cx="24.1" cy="40.1" rx="0.7" ry="1.0" fill="#1f2622" opacity="0.68" transform="rotate(47 24.1 40.1)"/><ellipse cx="32.8" cy="48.7" rx="1.0" ry="0.9" fill="#8d6f4c" opacity="0.62" transform="rotate(-20 32.8 48.7)"/><ellipse cx="17.8" cy="42.1" rx="0.7" ry="1.0" fill="#1f2622" opacity="0.82" transform="rotate(-36 17.8 42.1)"/><ellipse cx="15.4" cy="39.7" rx="0.7" ry="0.9" fill="#b08a5e" opacity="0.68" transform="rotate(55 15.4 39.7)"/><ellipse cx="25.5" cy="52.5" rx="1.0" ry="0.8" fill="#2a2f2a" opacity="0.95" transform="rotate(70 25.5 52.5)"/><ellipse cx="22.2" cy="65.4" rx="1.5" ry="0.4" fill="#a57d52" opacity="0.63" transform="rotate(59 22.2 65.4)"/><ellipse cx="49.9" cy="50.6" rx="0.7" ry="0.6" fill="#1f2622" opacity="0.63" transform="rotate(-47 49.9 50.6)"/><ellipse cx="20.1" cy="52.7" rx="1.5" ry="0.5" fill="#59635a" opacity="0.82" transform="rotate(1 20.1 52.7)"/><ellipse cx="46.9" cy="57.7" rx="0.7" ry="1.1" fill="#a57d52" opacity="0.74" transform="rotate(-30 46.9 57.7)"/><ellipse cx="15.1" cy="51.8" rx="0.9" ry="0.6" fill="#1f2622" opacity="0.75" transform="rotate(26 15.1 51.8)"/><ellipse cx="26.4" cy="61.5" rx="0.4" ry="1.0" fill="#59635a" opacity="0.74" transform="rotate(-20 26.4 61.5)"/><ellipse cx="40.7" cy="63.2" rx="0.7" ry="0.7" fill="#8b9488" opacity="0.74" transform="rotate(-51 40.7 63.2)"/><ellipse cx="28.0" cy="50.0" rx="0.7" ry="0.4" fill="#2a2f2a" opacity="0.62" transform="rotate(3 28.0 50.0)"/><ellipse cx="37.9" cy="42.2" rx="1.6" ry="0.7" fill="#6c7468" opacity="0.67" transform="rotate(25 37.9 42.2)"/><ellipse cx="43.3" cy="50.0" rx="0.4" ry="1.0" fill="#8b9488" opacity="0.92" transform="rotate(70 43.3 50.0)"/><ellipse cx="22.3" cy="40.3" rx="1.5" ry="0.7" fill="#3b443e" opacity="0.86" transform="rotate(3 22.3 40.3)"/><ellipse cx="32.5" cy="63.5" rx="1.1" ry="0.5" fill="#8b9488" opacity="0.72" transform="rotate(6 32.5 63.5)"/><ellipse cx="24.2" cy="58.7" rx="1.2" ry="0.7" fill="#1f2622" opacity="0.71" transform="rotate(30 24.2 58.7)"/><ellipse cx="19.3" cy="56.0" rx="0.5" ry="0.8" fill="#8d6f4c" opacity="0.77" transform="rotate(-14 19.3 56.0)"/><ellipse cx="31.3" cy="47.3" rx="1.3" ry="0.7" fill="#3b443e" opacity="0.67" transform="rotate(-47 31.3 47.3)"/><ellipse cx="21.3" cy="53.6" rx="0.8" ry="0.7" fill="#8d6f4c" opacity="0.80" transform="rotate(-65 21.3 53.6)"/><ellipse cx="42.0" cy="49.6" rx="0.9" ry="0.8" fill="#8b9488" opacity="0.69" transform="rotate(-55 42.0 49.6)"/><ellipse cx="32.9" cy="54.1" rx="0.8" ry="0.9" fill="#3b443e" opacity="0.82" transform="rotate(-15 32.9 54.1)"/><ellipse cx="18.3" cy="63.1" rx="0.9" ry="0.9" fill="#8b9488" opacity="0.93" transform="rotate(-65 18.3 63.1)"/><ellipse cx="19.6" cy="49.9" rx="1.3" ry="1.0" fill="#3b443e" opacity="0.77" transform="rotate(-52 19.6 49.9)"/><ellipse cx="29.1" cy="64.0" rx="1.4" ry="1.1" fill="#a57d52" opacity="0.69" transform="rotate(-43 29.1 64.0)"/><ellipse cx="23.1" cy="42.3" rx="1.6" ry="0.5" fill="#59635a" opacity="0.85" transform="rotate(47 23.1 42.3)"/><ellipse cx="18.1" cy="59.8" rx="0.4" ry="0.5" fill="#3b443e" opacity="0.92" transform="rotate(7 18.1 59.8)"/><ellipse cx="49.6" cy="55.5" rx="1.0" ry="0.7" fill="#8d6f4c" opacity="0.64" transform="rotate(-52 49.6 55.5)"/><ellipse cx="25.8" cy="64.4" rx="0.6" ry="0.6" fill="#8d6f4c" opacity="0.81" transform="rotate(-68 25.8 64.4)"/><ellipse cx="34.3" cy="65.9" rx="0.7" ry="0.7" fill="#59635a" opacity="0.91" transform="rotate(51 34.3 65.9)"/><ellipse cx="33.9" cy="53.3" rx="0.4" ry="0.7" fill="#7f8a7e" opacity="0.71" transform="rotate(-65 33.9 53.3)"/><ellipse cx="22.0" cy="62.8" rx="1.2" ry="0.5" fill="#1f2622" opacity="0.83" transform="rotate(24 22.0 62.8)"/><ellipse cx="23.2" cy="39.0" rx="0.8" ry="0.7" fill="#7f8a7e" opacity="0.74" transform="rotate(-69 23.2 39.0)"/><ellipse cx="43.7" cy="58.7" rx="1.0" ry="0.6" fill="#1f2622" opacity="0.71" transform="rotate(-21 43.7 58.7)"/><ellipse cx="23.3" cy="44.2" rx="1.3" ry="0.6" fill="#3b443e" opacity="0.77" transform="rotate(-23 23.3 44.2)"/><ellipse cx="47.3" cy="51.6" rx="1.5" ry="0.4" fill="#3b443e" opacity="0.65" transform="rotate(30 47.3 51.6)"/><ellipse cx="17.0" cy="38.7" rx="1.1" ry="0.7" fill="#b08a5e" opacity="0.62" transform="rotate(30 17.0 38.7)"/><ellipse cx="31.2" cy="57.9" rx="0.8" ry="0.5" fill="#2a2f2a" opacity="0.93" transform="rotate(14 31.2 57.9)"/><ellipse cx="21.9" cy="56.3" rx="1.0" ry="0.8" fill="#1f2622" opacity="0.83" transform="rotate(26 21.9 56.3)"/><ellipse cx="45.2" cy="65.6" rx="0.9" ry="0.5" fill="#2a2f2a" opacity="0.70" transform="rotate(19 45.2 65.6)"/><ellipse cx="30.1" cy="62.8" rx="1.1" ry="1.0" fill="#8b9488" opacity="0.72" transform="rotate(9 30.1 62.8)"/><ellipse cx="44.6" cy="50.1" rx="0.5" ry="0.8" fill="#6c7468" opacity="0.79" transform="rotate(44 44.6 50.1)"/><ellipse cx="21.9" cy="48.2" rx="1.5" ry="0.4" fill="#8b9488" opacity="0.69" transform="rotate(33 21.9 48.2)"/><ellipse cx="16.5" cy="39.0" rx="0.5" ry="1.1" fill="#1f2622" opacity="0.67" transform="rotate(-54 16.5 39.0)"/><ellipse cx="47.3" cy="47.5" rx="0.7" ry="1.2" fill="#3b443e" opacity="0.62" transform="rotate(11 47.3 47.5)"/><ellipse cx="48.3" cy="46.3" rx="1.3" ry="0.9" fill="#8d6f4c" opacity="0.82" transform="rotate(-54 48.3 46.3)"/><ellipse cx="15.9" cy="44.5" rx="1.0" ry="1.2" fill="#8d6f4c" opacity="0.74" transform="rotate(-6 15.9 44.5)"/><ellipse cx="47.9" cy="60.8" rx="0.6" ry="0.8" fill="#2a2f2a" opacity="0.88" transform="rotate(7 47.9 60.8)"/><ellipse cx="44.6" cy="59.6" rx="1.1" ry="0.7" fill="#6c7468" opacity="0.76" transform="rotate(-50 44.6 59.6)"/><ellipse cx="33.4" cy="49.0" rx="0.6" ry="0.7" fill="#7f8a7e" opacity="0.61" transform="rotate(69 33.4 49.0)"/><ellipse cx="26.7" cy="65.4" rx="1.5" ry="1.2" fill="#1f2622" opacity="0.82" transform="rotate(-17 26.7 65.4)"/><ellipse cx="18.5" cy="52.0" rx="1.3" ry="0.8" fill="#1f2622" opacity="0.65" transform="rotate(47 18.5 52.0)"/><ellipse cx="37.3" cy="56.9" rx="1.3" ry="1.1" fill="#7f8a7e" opacity="0.87" transform="rotate(5 37.3 56.9)"/><ellipse cx="25.6" cy="53.9" rx="0.8" ry="1.0" fill="#1f2622" opacity="0.75" transform="rotate(-23 25.6 53.9)"/><ellipse cx="23.8" cy="42.3" rx="1.5" ry="0.9" fill="#6c7468" opacity="0.62" transform="rotate(-6 23.8 42.3)"/><ellipse cx="50.7" cy="52.2" rx="0.7" ry="1.0" fill="#7f8a7e" opacity="0.76" transform="rotate(-61 50.7 52.2)"/><ellipse cx="18.7" cy="51.3" rx="1.4" ry="1.1" fill="#6c7468" opacity="0.61" transform="rotate(5 18.7 51.3)"/><ellipse cx="23.4" cy="39.4" rx="1.1" ry="1.1" fill="#1f2622" opacity="0.93" transform="rotate(25 23.4 39.4)"/><ellipse cx="33.5" cy="43.0" rx="1.1" ry="1.0" fill="#7f8a7e" opacity="0.93" transform="rotate(-43 33.5 43.0)"/><ellipse cx="37.9" cy="57.9" rx="0.8" ry="0.4" fill="#6c7468" opacity="0.65" transform="rotate(-18 37.9 57.9)"/><ellipse cx="51.0" cy="39.1" rx="1.3" ry="1.1" fill="#59635a" opacity="0.60" transform="rotate(13 51.0 39.1)"/><ellipse cx="29.7" cy="48.4" rx="1.1" ry="0.5" fill="#2a2f2a" opacity="0.88" transform="rotate(70 29.7 48.4)"/><ellipse cx="32.4" cy="49.4" rx="1.4" ry="0.9" fill="#1f2622" opacity="0.82" transform="rotate(-47 32.4 49.4)"/><ellipse cx="38.5" cy="49.1" rx="0.7" ry="1.2" fill="#7f8a7e" opacity="0.71" transform="rotate(-57 38.5 49.1)"/><ellipse cx="26.2" cy="53.9" rx="0.8" ry="0.7" fill="#59635a" opacity="0.87" transform="rotate(23 26.2 53.9)"/><ellipse cx="38.2" cy="48.9" rx="0.9" ry="1.2" fill="#8b9488" opacity="0.92" transform="rotate(38 38.2 48.9)"/><ellipse cx="19.1" cy="40.5" rx="1.1" ry="0.7" fill="#8d6f4c" opacity="0.66" transform="rotate(-67 19.1 40.5)"/><ellipse cx="16.9" cy="42.0" rx="1.4" ry="0.7" fill="#3b443e" opacity="0.82" transform="rotate(24 16.9 42.0)"/><ellipse cx="41.5" cy="42.8" rx="0.8" ry="0.5" fill="#1f2622" opacity="0.92" transform="rotate(-43 41.5 42.8)"/><ellipse cx="28.8" cy="59.1" rx="1.4" ry="1.0" fill="#1f2622" opacity="0.64" transform="rotate(-59 28.8 59.1)"/><ellipse cx="50.1" cy="51.5" rx="0.5" ry="1.1" fill="#8b9488" opacity="0.63" transform="rotate(-29 50.1 51.5)"/><ellipse cx="38.1" cy="62.0" rx="1.1" ry="0.9" fill="#1f2622" opacity="0.89" transform="rotate(-24 38.1 62.0)"/><ellipse cx="35.4" cy="39.2" rx="1.5" ry="0.5" fill="#6c7468" opacity="0.64" transform="rotate(-7 35.4 39.2)"/><ellipse cx="49.9" cy="60.8" rx="0.6" ry="1.1" fill="#59635a" opacity="0.87" transform="rotate(-61 49.9 60.8)"/><ellipse cx="39.0" cy="47.1" rx="0.9" ry="0.8" fill="#59635a" opacity="0.82" transform="rotate(8 39.0 47.1)"/><ellipse cx="38.4" cy="46.6" rx="0.7" ry="0.7" fill="#6c7468" opacity="0.76" transform="rotate(42 38.4 46.6)"/><ellipse cx="21.4" cy="38.1" rx="1.6" ry="0.8" fill="#a57d52" opacity="0.87" transform="rotate(47 21.4 38.1)"/><ellipse cx="45.1" cy="60.7" rx="0.9" ry="0.5" fill="#6c7468" opacity="0.75" transform="rotate(-47 45.1 60.7)"/><ellipse cx="43.9" cy="52.1" rx="1.2" ry="0.4" fill="#1f2622" opacity="0.63" transform="rotate(10 43.9 52.1)"/><ellipse cx="43.0" cy="52.3" rx="0.5" ry="0.8" fill="#8b9488" opacity="0.83" transform="rotate(-36 43.0 52.3)"/><ellipse cx="15.9" cy="39.9" rx="1.1" ry="1.0" fill="#2a2f2a" opacity="0.67" transform="rotate(55 15.9 39.9)"/><ellipse cx="25.4" cy="60.7" rx="1.4" ry="0.9" fill="#b08a5e" opacity="0.93" transform="rotate(-54 25.4 60.7)"/><ellipse cx="45.0" cy="55.1" rx="0.7" ry="0.7" fill="#3b443e" opacity="0.70" transform="rotate(46 45.0 55.1)"/><ellipse cx="20.2" cy="52.1" rx="1.5" ry="0.6" fill="#1f2622" opacity="0.82" transform="rotate(-10 20.2 52.1)"/><ellipse cx="26.5" cy="39.0" rx="0.6" ry="0.5" fill="#1f2622" opacity="0.84" transform="rotate(26 26.5 39.0)"/><ellipse cx="21.1" cy="60.0" rx="0.5" ry="0.8" fill="#7f8a7e" opacity="0.90" transform="rotate(45 21.1 60.0)"/><ellipse cx="35.0" cy="54.2" rx="1.5" ry="0.5" fill="#3b443e" opacity="0.82" transform="rotate(30 35.0 54.2)"/><ellipse cx="41.6" cy="48.4" rx="0.9" ry="0.7" fill="#1f2622" opacity="0.73" transform="rotate(-50 41.6 48.4)"/><ellipse cx="30.9" cy="42.9" rx="1.3" ry="0.4" fill="#59635a" opacity="0.78" transform="rotate(9 30.9 42.9)"/><ellipse cx="38.0" cy="65.6" rx="1.1" ry="0.9" fill="#6c7468" opacity="0.86" transform="rotate(-62 38.0 65.6)"/><ellipse cx="23.0" cy="46.1" rx="1.2" ry="0.7" fill="#6c7468" opacity="0.91" transform="rotate(-37 23.0 46.1)"/><ellipse cx="32.6" cy="55.2" rx="0.5" ry="0.4" fill="#3b443e" opacity="0.72" transform="rotate(-43 32.6 55.2)"/><ellipse cx="33.8" cy="53.0" rx="0.9" ry="0.6" fill="#1f2622" opacity="0.67" transform="rotate(51 33.8 53.0)"/><ellipse cx="20.7" cy="38.4" rx="1.4" ry="1.0" fill="#a57d52" opacity="0.63" transform="rotate(-33 20.7 38.4)"/><ellipse cx="46.4" cy="82.1" rx="1.3" ry="0.6" fill="#2a2f2a" opacity="0.57" transform="rotate(22 46.4 82.1)"/><ellipse cx="35.2" cy="74.3" rx="1.8" ry="0.7" fill="#7f8a7e" opacity="0.81" transform="rotate(-15 35.2 74.3)"/><ellipse cx="20.9" cy="68.0" rx="0.7" ry="0.4" fill="#1f2622" opacity="0.63" transform="rotate(-27 20.9 68.0)"/><ellipse cx="47.8" cy="69.9" rx="1.7" ry="0.9" fill="#6c7468" opacity="0.60" transform="rotate(-18 47.8 69.9)"/><ellipse cx="33.7" cy="79.6" rx="1.8" ry="0.7" fill="#59635a" opacity="0.61" transform="rotate(-11 33.7 79.6)"/><ellipse cx="17.3" cy="79.3" rx="2.4" ry="0.9" fill="#3b443e" opacity="0.80" transform="rotate(-30 17.3 79.3)"/><ellipse cx="28.5" cy="75.9" rx="2.2" ry="0.5" fill="#a57d52" opacity="0.71" transform="rotate(-16 28.5 75.9)"/><ellipse cx="50.9" cy="72.7" rx="1.8" ry="0.5" fill="#8b9488" opacity="0.80" transform="rotate(-13 50.9 72.7)"/><ellipse cx="37.9" cy="80.2" rx="1.8" ry="1.0" fill="#8b9488" opacity="0.65" transform="rotate(29 37.9 80.2)"/><ellipse cx="49.7" cy="71.9" rx="2.2" ry="0.4" fill="#8b9488" opacity="0.87" transform="rotate(23 49.7 71.9)"/><ellipse cx="41.8" cy="85.0" rx="1.9" ry="0.6" fill="#3b443e" opacity="0.66" transform="rotate(-15 41.8 85.0)"/><ellipse cx="28.7" cy="83.3" rx="2.3" ry="1.1" fill="#7f8a7e" opacity="0.71" transform="rotate(23 28.7 83.3)"/><ellipse cx="34.1" cy="68.1" rx="0.6" ry="1.1" fill="#6c7468" opacity="0.75" transform="rotate(-11 34.1 68.1)"/><ellipse cx="43.4" cy="75.0" rx="1.7" ry="0.8" fill="#1f2622" opacity="0.60" transform="rotate(-29 43.4 75.0)"/><ellipse cx="19.0" cy="79.2" rx="0.9" ry="1.1" fill="#2a2f2a" opacity="0.56" transform="rotate(-22 19.0 79.2)"/><ellipse cx="39.9" cy="79.4" rx="1.9" ry="0.9" fill="#2a2f2a" opacity="0.85" transform="rotate(18 39.9 79.4)"/><ellipse cx="28.1" cy="82.7" rx="2.1" ry="1.0" fill="#2a2f2a" opacity="0.86" transform="rotate(18 28.1 82.7)"/><ellipse cx="47.9" cy="85.0" rx="0.8" ry="0.5" fill="#2a2f2a" opacity="0.56" transform="rotate(30 47.9 85.0)"/><ellipse cx="45.5" cy="82.6" rx="1.7" ry="1.0" fill="#a57d52" opacity="0.77" transform="rotate(0 45.5 82.6)"/><ellipse cx="18.6" cy="69.8" rx="2.0" ry="0.5" fill="#9aa69a" opacity="0.67" transform="rotate(-14 18.6 69.8)"/><ellipse cx="15.8" cy="72.6" rx="1.1" ry="0.9" fill="#9aa69a" opacity="0.87" transform="rotate(19 15.8 72.6)"/><ellipse cx="49.7" cy="77.1" rx="2.1" ry="0.8" fill="#2a2f2a" opacity="0.83" transform="rotate(-29 49.7 77.1)"/><ellipse cx="30.7" cy="81.9" rx="1.2" ry="0.9" fill="#7f8a7e" opacity="0.75" transform="rotate(15 30.7 81.9)"/><ellipse cx="46.0" cy="69.6" rx="2.1" ry="0.5" fill="#2a2f2a" opacity="0.73" transform="rotate(-12 46.0 69.6)"/><ellipse cx="42.4" cy="85.6" rx="0.6" ry="0.7" fill="#3b443e" opacity="0.79" transform="rotate(22 42.4 85.6)"/><ellipse cx="21.6" cy="76.9" rx="1.2" ry="1.0" fill="#8b9488" opacity="0.75" transform="rotate(-20 21.6 76.9)"/><ellipse cx="25.2" cy="71.9" rx="1.9" ry="0.7" fill="#2a2f2a" opacity="0.88" transform="rotate(19 25.2 71.9)"/><ellipse cx="17.9" cy="82.2" rx="1.9" ry="1.0" fill="#a57d52" opacity="0.66" transform="rotate(-24 17.9 82.2)"/><ellipse cx="29.4" cy="75.1" rx="2.2" ry="0.5" fill="#a57d52" opacity="0.56" transform="rotate(-17 29.4 75.1)"/><ellipse cx="25.9" cy="75.7" rx="1.6" ry="0.5" fill="#a57d52" opacity="0.63" transform="rotate(-1 25.9 75.7)"/><ellipse cx="19.6" cy="78.7" rx="1.8" ry="0.8" fill="#2a2f2a" opacity="0.67" transform="rotate(-10 19.6 78.7)"/><ellipse cx="33.8" cy="83.6" rx="1.4" ry="0.8" fill="#9aa69a" opacity="0.61" transform="rotate(-2 33.8 83.6)"/><ellipse cx="39.8" cy="72.6" rx="1.0" ry="0.6" fill="#a57d52" opacity="0.86" transform="rotate(-15 39.8 72.6)"/><ellipse cx="33.3" cy="72.8" rx="2.0" ry="1.0" fill="#59635a" opacity="0.60" transform="rotate(-21 33.3 72.8)"/><ellipse cx="50.1" cy="81.0" rx="1.7" ry="0.6" fill="#6c7468" opacity="0.66" transform="rotate(-18 50.1 81.0)"/><ellipse cx="24.3" cy="85.2" rx="2.4" ry="0.5" fill="#a57d52" opacity="0.59" transform="rotate(-6 24.3 85.2)"/><ellipse cx="20.4" cy="70.7" rx="1.1" ry="0.6" fill="#8b9488" opacity="0.62" transform="rotate(10 20.4 70.7)"/><ellipse cx="47.8" cy="73.1" rx="2.2" ry="0.7" fill="#2a2f2a" opacity="0.69" transform="rotate(20 47.8 73.1)"/><ellipse cx="30.7" cy="72.0" rx="2.4" ry="0.6" fill="#2a2f2a" opacity="0.60" transform="rotate(8 30.7 72.0)"/><ellipse cx="41.6" cy="68.1" rx="1.0" ry="1.0" fill="#59635a" opacity="0.76" transform="rotate(11 41.6 68.1)"/><ellipse cx="30.2" cy="72.1" rx="1.9" ry="1.0" fill="#a57d52" opacity="0.80" transform="rotate(24 30.2 72.1)"/><ellipse cx="23.2" cy="71.3" rx="0.8" ry="0.7" fill="#8b9488" opacity="0.77" transform="rotate(-24 23.2 71.3)"/><ellipse cx="47.2" cy="72.4" rx="1.3" ry="0.9" fill="#1f2622" opacity="0.64" transform="rotate(-3 47.2 72.4)"/><ellipse cx="32.4" cy="68.4" rx="2.1" ry="0.8" fill="#a57d52" opacity="0.88" transform="rotate(-19 32.4 68.4)"/><ellipse cx="47.2" cy="73.9" rx="0.6" ry="1.0" fill="#2a2f2a" opacity="0.56" transform="rotate(4 47.2 73.9)"/><ellipse cx="22.8" cy="80.9" rx="2.3" ry="0.5" fill="#9aa69a" opacity="0.59" transform="rotate(6 22.8 80.9)"/><ellipse cx="31.4" cy="71.7" rx="1.5" ry="0.4" fill="#9aa69a" opacity="0.73" transform="rotate(-4 31.4 71.7)"/><ellipse cx="41.7" cy="76.2" rx="2.4" ry="0.5" fill="#7f8a7e" opacity="0.82" transform="rotate(-23 41.7 76.2)"/><ellipse cx="41.2" cy="79.1" rx="1.7" ry="0.6" fill="#3b443e" opacity="0.69" transform="rotate(-30 41.2 79.1)"/><ellipse cx="17.7" cy="84.5" rx="1.7" ry="0.9" fill="#59635a" opacity="0.64" transform="rotate(-16 17.7 84.5)"/><ellipse cx="25.9" cy="75.2" rx="2.3" ry="1.1" fill="#3b443e" opacity="0.71" transform="rotate(-20 25.9 75.2)"/><ellipse cx="19.7" cy="82.0" rx="2.1" ry="0.8" fill="#3b443e" opacity="0.77" transform="rotate(16 19.7 82.0)"/><ellipse cx="23.1" cy="85.3" rx="1.2" ry="0.8" fill="#3b443e" opacity="0.71" transform="rotate(-12 23.1 85.3)"/><ellipse cx="42.4" cy="79.7" rx="2.0" ry="0.7" fill="#6c7468" opacity="0.64" transform="rotate(-6 42.4 79.7)"/><ellipse cx="39.7" cy="85.7" rx="1.8" ry="0.7" fill="#8b9488" opacity="0.68" transform="rotate(11 39.7 85.7)"/><ellipse cx="25.9" cy="76.6" rx="1.4" ry="0.8" fill="#a57d52" opacity="0.86" transform="rotate(-21 25.9 76.6)"/><ellipse cx="48.4" cy="83.4" rx="0.7" ry="1.0" fill="#9aa69a" opacity="0.82" transform="rotate(-22 48.4 83.4)"/><ellipse cx="34.1" cy="74.2" rx="1.6" ry="0.9" fill="#6c7468" opacity="0.88" transform="rotate(11 34.1 74.2)"/><ellipse cx="25.5" cy="78.9" rx="1.6" ry="1.0" fill="#1f2622" opacity="0.82" transform="rotate(-8 25.5 78.9)"/><ellipse cx="43.3" cy="71.8" rx="1.3" ry="0.8" fill="#59635a" opacity="0.86" transform="rotate(8 43.3 71.8)"/><ellipse cx="50.2" cy="69.6" rx="2.2" ry="0.8" fill="#a57d52" opacity="0.84" transform="rotate(-18 50.2 69.6)"/><ellipse cx="32.8" cy="71.8" rx="0.7" ry="1.0" fill="#a57d52" opacity="0.86" transform="rotate(5 32.8 71.8)"/><ellipse cx="19.3" cy="75.5" rx="2.1" ry="0.7" fill="#7f8a7e" opacity="0.57" transform="rotate(-1 19.3 75.5)"/><ellipse cx="47.6" cy="80.6" rx="1.0" ry="0.5" fill="#59635a" opacity="0.85" transform="rotate(-30 47.6 80.6)"/><ellipse cx="20.8" cy="73.8" rx="1.9" ry="0.7" fill="#8b9488" opacity="0.84" transform="rotate(-7 20.8 73.8)"/><ellipse cx="30.3" cy="86.0" rx="1.8" ry="0.5" fill="#9aa69a" opacity="0.77" transform="rotate(-29 30.3 86.0)"/><ellipse cx="15.7" cy="68.8" rx="1.9" ry="1.1" fill="#2a2f2a" opacity="0.73" transform="rotate(1 15.7 68.8)"/><ellipse cx="42.3" cy="70.6" rx="1.0" ry="0.7" fill="#1f2622" opacity="0.67" transform="rotate(25 42.3 70.6)"/><ellipse cx="38.7" cy="74.1" rx="2.0" ry="0.8" fill="#6c7468" opacity="0.65" transform="rotate(-9 38.7 74.1)"/><ellipse cx="30.2" cy="78.0" rx="2.1" ry="0.6" fill="#3b443e" opacity="0.69" transform="rotate(2 30.2 78.0)"/></g><path d="M24.5 44.5l1-3.2l1 3.2z" fill="#4a534c"/><path d="M27.5 42.5l1-3.6l1 3.6z" fill="#4a534c"/><path d="M35.5 42l1-3.4l1 3.4z" fill="#4a534c"/><path d="M38.5 44l1-3.2l1 3.2z" fill="#4a534c"/><path d="M21.5 48.5l1-2.8l1 2.8z" fill="#4a534c"/><path d="M42 48.5l1-2.8l1 2.8z" fill="#4a534c"/><path d="M19 53.5l1-2.4l1 2.4z" fill="#4a534c"/><path d="M44.6 53.5l1-2.4l1 2.4z" fill="#4a534c"/><path d="M17 59l1-2.2l1 2.2z" fill="#4a534c"/><path d="M46.5 59l1-2.2l1 2.2z" fill="#4a534c"/><path d="M30 41l1-2.5l1 2.5z" fill="#4a534c"/></g><path d="M15.300 66.200c6 1.300 28 1.300 34.200 0v1.500c-6 1.300-28 1.300-34.200 0z" fill="#a88863" opacity="0.9"/><path d="M15.200 69.800c6 1.300 28.500 1.300 34.500 0v.9c-6 1.300-28.500 1.300-34.500 0z" fill="#2a322d" opacity="0.7"/><path d="M15.800 64c6 1.200 27 1.200 33.200 0v.8c-6 1.200-27 1.200-33.200 0z" fill="#232a26" opacity="0.7"/><g filter="url(#rg4)"><path d="M32 84.500h2.600l.3 20h-3.200z" fill="#8a6c4a"/><rect x="30" y="86.200" width="6.600" height="1.300" fill="#5b6558"/><rect x="29.400" y="89.800" width="7.800" height="1.500" fill="#6b6f5c"/><rect x="30.200" y="93.500" width="6.200" height="1.200" fill="#5b6558"/><path d="M31.500 92c-1.200 6-3.500 12-8 17.500c-2.500 3-6 6-11 9" fill="none" stroke-linecap="round" stroke="#566054" stroke-width="3"/><path d="M32.500 99c-1 5-3.500 10-7.500 14c-2 2-4 3.500-6 4.500" fill="none" stroke-linecap="round" stroke="#8a7a5e" stroke-width="1.800"/><path d="M27 90.500l1.800 1.200l-1 2l-2-1.200zM25.500 100l1.500 1l-1 1.600l-1.600-1z" fill="#4f5a50"/><path d="M34.500 108.500c5 .5 9.500-1.500 12-5.500c1.800-3 2-6.500 .3-9c-.8-1.200-2.200-1.800-3.500-1.600" fill="none" stroke-linecap="round" stroke="#5f6a5c" stroke-width="3.200"/><path d="M41 89.500l2.200 1l1.800-1.500l.4 2.500l2 1.200l-2 1.200l-.5 2.300l-2-1.300l-2.300 .3l1.200-2.200z" fill="#66715f"/><path d="M36 108c4.500 0 8.500-2 10.500-5.500" fill="none" stroke-linecap="round" stroke="#a3ad9c" stroke-width="0.900"/><clipPath id="basec4"><path d="M11 118.500c2.500-2.200 6-3.200 9-4.500c3-1.500 6-3.500 8.500-5.500c2.500-.5 5.500-.5 8 0c3 .5 6 1.500 8.500 3c3.500 2 6.500 5 9 9.500c-1 1.600-3 2.600-5 3.200c-4.500 1.500-10 2-15.500 1.800c-6-.2-12-1.200-17-3.200c-2.500-1-4.700-2.500-5.500-4.300z"/></clipPath><path d="M11 118.500c2.500-2.200 6-3.200 9-4.500c3-1.500 6-3.500 8.500-5.500c2.500-.5 5.500-.5 8 0c3 .5 6 1.500 8.500 3c3.500 2 6.500 5 9 9.500c-1 1.600-3 2.600-5 3.200c-4.500 1.500-10 2-15.500 1.800c-6-.2-12-1.200-17-3.200c-2.500-1-4.700-2.500-5.500-4.300z" fill="#6b624e"/><g clip-path="url(#basec4)"><ellipse cx="54.3" cy="124.3" rx="1.2" ry="0.5" fill="#565e53" opacity="0.88" transform="rotate(2 54.3 124.3)"/><ellipse cx="18.7" cy="121.0" rx="0.8" ry="1.1" fill="#a57d52" opacity="0.87" transform="rotate(-35 18.7 121.0)"/><ellipse cx="27.9" cy="117.6" rx="1.3" ry="0.8" fill="#8b9488" opacity="0.71" transform="rotate(-40 27.9 117.6)"/><ellipse cx="12.1" cy="123.3" rx="1.5" ry="0.9" fill="#a57d52" opacity="0.88" transform="rotate(29 12.1 123.3)"/><ellipse cx="37.5" cy="119.0" rx="1.7" ry="0.9" fill="#3b443e" opacity="0.91" transform="rotate(-30 37.5 119.0)"/><ellipse cx="19.6" cy="120.0" rx="1.4" ry="0.9" fill="#a57d52" opacity="0.83" transform="rotate(-36 19.6 120.0)"/><ellipse cx="29.0" cy="108.1" rx="2.3" ry="0.4" fill="#b89068" opacity="0.88" transform="rotate(31 29.0 108.1)"/><ellipse cx="42.0" cy="124.1" rx="0.9" ry="0.4" fill="#a57d52" opacity="0.75" transform="rotate(34 42.0 124.1)"/><ellipse cx="52.0" cy="107.1" rx="1.6" ry="0.4" fill="#a57d52" opacity="0.87" transform="rotate(13 52.0 107.1)"/><ellipse cx="35.9" cy="125.3" rx="1.4" ry="0.4" fill="#8b9488" opacity="0.81" transform="rotate(-21 35.9 125.3)"/><ellipse cx="31.4" cy="114.7" rx="0.8" ry="0.9" fill="#2a2f2a" opacity="0.91" transform="rotate(40 31.4 114.7)"/><ellipse cx="10.7" cy="106.1" rx="1.8" ry="0.5" fill="#a57d52" opacity="0.68" transform="rotate(-25 10.7 106.1)"/><ellipse cx="15.8" cy="106.4" rx="1.9" ry="0.6" fill="#b89068" opacity="0.92" transform="rotate(6 15.8 106.4)"/><ellipse cx="44.8" cy="121.0" rx="2.1" ry="0.9" fill="#a57d52" opacity="0.70" transform="rotate(31 44.8 121.0)"/><ellipse cx="41.9" cy="115.7" rx="2.3" ry="0.6" fill="#a57d52" opacity="0.85" transform="rotate(-39 41.9 115.7)"/><ellipse cx="12.7" cy="124.5" rx="1.8" ry="0.8" fill="#8b9488" opacity="0.71" transform="rotate(36 12.7 124.5)"/><ellipse cx="17.5" cy="124.1" rx="1.5" ry="0.4" fill="#2a2f2a" opacity="0.93" transform="rotate(16 17.5 124.1)"/><ellipse cx="31.1" cy="109.5" rx="2.3" ry="0.5" fill="#8d6f4c" opacity="0.66" transform="rotate(13 31.1 109.5)"/><ellipse cx="31.5" cy="122.3" rx="1.4" ry="0.6" fill="#3b443e" opacity="0.72" transform="rotate(-5 31.5 122.3)"/><ellipse cx="12.7" cy="126.5" rx="1.9" ry="1.0" fill="#2a2f2a" opacity="0.90" transform="rotate(-39 12.7 126.5)"/><ellipse cx="47.4" cy="118.6" rx="1.2" ry="0.7" fill="#2a2f2a" opacity="0.73" transform="rotate(8 47.4 118.6)"/><ellipse cx="37.1" cy="124.8" rx="2.1" ry="0.6" fill="#a57d52" opacity="0.71" transform="rotate(-6 37.1 124.8)"/><ellipse cx="29.0" cy="118.3" rx="2.1" ry="1.0" fill="#a57d52" opacity="0.70" transform="rotate(-22 29.0 118.3)"/><ellipse cx="46.5" cy="124.2" rx="1.6" ry="0.6" fill="#3b443e" opacity="0.84" transform="rotate(23 46.5 124.2)"/><ellipse cx="25.6" cy="107.8" rx="1.6" ry="1.0" fill="#2a2f2a" opacity="0.88" transform="rotate(-11 25.6 107.8)"/><ellipse cx="23.9" cy="107.2" rx="1.3" ry="0.9" fill="#2a2f2a" opacity="0.81" transform="rotate(-39 23.9 107.2)"/><ellipse cx="45.6" cy="115.7" rx="0.8" ry="1.0" fill="#a57d52" opacity="0.68" transform="rotate(34 45.6 115.7)"/><ellipse cx="33.4" cy="111.5" rx="2.1" ry="0.6" fill="#3b443e" opacity="0.81" transform="rotate(-16 33.4 111.5)"/><ellipse cx="19.6" cy="107.9" rx="2.1" ry="0.6" fill="#3b443e" opacity="0.80" transform="rotate(11 19.6 107.9)"/><ellipse cx="45.1" cy="124.0" rx="1.0" ry="1.0" fill="#565e53" opacity="0.73" transform="rotate(-27 45.1 124.0)"/><ellipse cx="26.7" cy="115.7" rx="0.7" ry="0.6" fill="#a57d52" opacity="0.72" transform="rotate(26 26.7 115.7)"/><ellipse cx="37.3" cy="108.0" rx="1.0" ry="1.0" fill="#3b443e" opacity="0.77" transform="rotate(32 37.3 108.0)"/><ellipse cx="19.6" cy="125.4" rx="1.1" ry="0.5" fill="#565e53" opacity="0.87" transform="rotate(37 19.6 125.4)"/><ellipse cx="53.4" cy="111.3" rx="0.7" ry="0.5" fill="#b89068" opacity="0.73" transform="rotate(-37 53.4 111.3)"/><ellipse cx="12.3" cy="117.7" rx="2.2" ry="0.7" fill="#a57d52" opacity="0.90" transform="rotate(10 12.3 117.7)"/><ellipse cx="51.5" cy="120.8" rx="0.8" ry="0.6" fill="#2a2f2a" opacity="0.82" transform="rotate(24 51.5 120.8)"/><ellipse cx="27.7" cy="115.4" rx="0.9" ry="1.1" fill="#2a2f2a" opacity="0.66" transform="rotate(-8 27.7 115.4)"/><ellipse cx="52.4" cy="107.2" rx="1.6" ry="0.4" fill="#a57d52" opacity="0.69" transform="rotate(25 52.4 107.2)"/><ellipse cx="41.9" cy="119.6" rx="2.4" ry="0.4" fill="#b89068" opacity="0.71" transform="rotate(-40 41.9 119.6)"/><ellipse cx="52.3" cy="120.2" rx="1.1" ry="0.8" fill="#8d6f4c" opacity="0.64" transform="rotate(1 52.3 120.2)"/><ellipse cx="26.7" cy="114.2" rx="1.3" ry="0.7" fill="#565e53" opacity="0.68" transform="rotate(-22 26.7 114.2)"/><ellipse cx="51.1" cy="124.7" rx="1.4" ry="1.0" fill="#a57d52" opacity="0.65" transform="rotate(-12 51.1 124.7)"/><ellipse cx="13.5" cy="119.0" rx="1.3" ry="0.9" fill="#565e53" opacity="0.94" transform="rotate(9 13.5 119.0)"/><ellipse cx="47.9" cy="119.2" rx="1.4" ry="0.6" fill="#2a2f2a" opacity="0.77" transform="rotate(40 47.9 119.2)"/><ellipse cx="26.5" cy="113.0" rx="1.9" ry="0.5" fill="#565e53" opacity="0.79" transform="rotate(-22 26.5 113.0)"/><ellipse cx="29.8" cy="109.1" rx="1.4" ry="0.6" fill="#a57d52" opacity="0.69" transform="rotate(-3 29.8 109.1)"/><ellipse cx="25.1" cy="109.5" rx="1.5" ry="0.6" fill="#565e53" opacity="0.64" transform="rotate(25 25.1 109.5)"/><ellipse cx="12.6" cy="124.8" rx="1.8" ry="0.5" fill="#565e53" opacity="0.89" transform="rotate(-25 12.6 124.8)"/><ellipse cx="21.6" cy="110.2" rx="1.3" ry="1.1" fill="#2a2f2a" opacity="0.92" transform="rotate(-28 21.6 110.2)"/><ellipse cx="27.6" cy="114.7" rx="0.9" ry="1.0" fill="#2a2f2a" opacity="0.65" transform="rotate(-38 27.6 114.7)"/><ellipse cx="29.9" cy="116.7" rx="1.5" ry="0.7" fill="#3b443e" opacity="0.70" transform="rotate(6 29.9 116.7)"/><ellipse cx="29.6" cy="125.2" rx="1.0" ry="0.8" fill="#b89068" opacity="0.90" transform="rotate(26 29.6 125.2)"/><ellipse cx="44.7" cy="120.9" rx="1.0" ry="0.5" fill="#a57d52" opacity="0.91" transform="rotate(23 44.7 120.9)"/><ellipse cx="44.3" cy="109.7" rx="0.8" ry="0.9" fill="#8d6f4c" opacity="0.88" transform="rotate(34 44.3 109.7)"/><ellipse cx="23.9" cy="106.2" rx="1.8" ry="0.8" fill="#a57d52" opacity="0.78" transform="rotate(4 23.9 106.2)"/><ellipse cx="25.1" cy="123.7" rx="2.2" ry="0.7" fill="#a57d52" opacity="0.74" transform="rotate(21 25.1 123.7)"/><ellipse cx="16.0" cy="120.0" rx="1.0" ry="0.8" fill="#2a2f2a" opacity="0.61" transform="rotate(7 16.0 120.0)"/><ellipse cx="35.9" cy="124.0" rx="1.2" ry="1.1" fill="#3b443e" opacity="0.62" transform="rotate(5 35.9 124.0)"/><ellipse cx="42.2" cy="123.1" rx="2.2" ry="0.6" fill="#8b9488" opacity="0.80" transform="rotate(-33 42.2 123.1)"/><ellipse cx="23.1" cy="108.3" rx="1.9" ry="0.7" fill="#a57d52" opacity="0.79" transform="rotate(28 23.1 108.3)"/><ellipse cx="16.0" cy="111.1" rx="0.8" ry="0.8" fill="#b89068" opacity="0.64" transform="rotate(-8 16.0 111.1)"/><ellipse cx="35.0" cy="126.1" rx="0.6" ry="1.0" fill="#2a2f2a" opacity="0.69" transform="rotate(36 35.0 126.1)"/><ellipse cx="38.7" cy="115.7" rx="1.0" ry="0.7" fill="#2a2f2a" opacity="0.90" transform="rotate(-18 38.7 115.7)"/><ellipse cx="12.0" cy="108.6" rx="1.5" ry="0.8" fill="#2a2f2a" opacity="0.64" transform="rotate(-25 12.0 108.6)"/><ellipse cx="28.3" cy="108.9" rx="1.7" ry="1.0" fill="#b89068" opacity="0.83" transform="rotate(19 28.3 108.9)"/><ellipse cx="43.6" cy="109.5" rx="2.1" ry="1.1" fill="#8b9488" opacity="0.84" transform="rotate(36 43.6 109.5)"/><ellipse cx="47.8" cy="117.0" rx="1.3" ry="1.1" fill="#2a2f2a" opacity="0.72" transform="rotate(-10 47.8 117.0)"/><ellipse cx="47.7" cy="121.0" rx="2.1" ry="0.8" fill="#2a2f2a" opacity="0.89" transform="rotate(31 47.7 121.0)"/><ellipse cx="12.4" cy="116.9" rx="2.3" ry="1.1" fill="#2a2f2a" opacity="0.90" transform="rotate(40 12.4 116.9)"/><ellipse cx="10.5" cy="108.3" rx="0.9" ry="0.6" fill="#2a2f2a" opacity="0.78" transform="rotate(-38 10.5 108.3)"/><ellipse cx="20.1" cy="114.8" rx="1.3" ry="1.1" fill="#565e53" opacity="0.82" transform="rotate(-35 20.1 114.8)"/><ellipse cx="11.5" cy="119.5" rx="1.1" ry="0.9" fill="#2a2f2a" opacity="0.82" transform="rotate(-36 11.5 119.5)"/><ellipse cx="38.0" cy="111.3" rx="1.5" ry="0.7" fill="#a57d52" opacity="0.70" transform="rotate(-1 38.0 111.3)"/><ellipse cx="25.6" cy="109.5" rx="0.7" ry="1.1" fill="#3b443e" opacity="0.92" transform="rotate(-30 25.6 109.5)"/><ellipse cx="31.0" cy="117.2" rx="0.9" ry="0.5" fill="#b89068" opacity="0.91" transform="rotate(12 31.0 117.2)"/><ellipse cx="36.0" cy="111.8" rx="1.9" ry="0.9" fill="#2a2f2a" opacity="0.89" transform="rotate(38 36.0 111.8)"/><ellipse cx="41.3" cy="110.7" rx="1.3" ry="0.8" fill="#2a2f2a" opacity="0.76" transform="rotate(30 41.3 110.7)"/><ellipse cx="23.7" cy="116.0" rx="2.1" ry="0.4" fill="#2a2f2a" opacity="0.68" transform="rotate(25 23.7 116.0)"/><ellipse cx="34.6" cy="126.4" rx="1.3" ry="1.0" fill="#b89068" opacity="0.90" transform="rotate(-10 34.6 126.4)"/><ellipse cx="24.6" cy="112.8" rx="1.1" ry="1.0" fill="#2a2f2a" opacity="0.70" transform="rotate(-38 24.6 112.8)"/></g><path d="M37 111c2.500-1.200 6.500-1.200 8.500 .2l-.5 2c-2.500 .8-5.500 .6-7.500-.4z" fill="#151916"/></g><text x="11.3" y="135.700" font-family="Liberation Sans,Noto Sans CJK KR,sans-serif" font-weight="900" fill="#16733a" stroke="#16733a" stroke-width="0.45" stroke-linejoin="round" font-size="7.700" textLength="41" lengthAdjust="spacingAndGlyphs">2023. 04. 26.</text><text x="24" y="142.500" font-family="Liberation Sans,Noto Sans CJK KR,sans-serif" font-weight="900" fill="#16733a" stroke="#16733a" stroke-width="0.45" stroke-linejoin="round" font-size="7.700" textLength="28.3" lengthAdjust="spacingAndGlyphs">– 10. 25.</text><text x="11.3" y="148.300" font-family="Liberation Sans,Noto Sans CJK KR,sans-serif" fill="#333" font-weight="700" font-size="3.6" textLength="40.500" lengthAdjust="spacingAndGlyphs">매주 수요일 14:00~16:00</text><text x="11.3" y="155.70" font-family="Liberation Sans,Noto Sans CJK KR,sans-serif" fill="#333" font-size="2.800" textLength="23" lengthAdjust="spacingAndGlyphs">대상 : 성인 100명</text><text x="11.3" y="159.78" font-family="Liberation Sans,Noto Sans CJK KR,sans-serif" fill="#333" font-size="2.800" textLength="36" lengthAdjust="spacingAndGlyphs">장소 : 국립전주박물관 강당</text><text x="11.3" y="163.86" font-family="Liberation Sans,Noto Sans CJK KR,sans-serif" fill="#333" font-size="2.800" textLength="43.5" lengthAdjust="spacingAndGlyphs">접수 : 누리집 사전예약 및 현장접수</text><text x="11.3" y="167.94" font-family="Liberation Sans,Noto Sans CJK KR,sans-serif" fill="#333" font-size="2.800" textLength="35.5" lengthAdjust="spacingAndGlyphs">문의 : 063-220-1016, 1035</text><text x="11.3" y="172.02" font-family="Liberation Sans,Noto Sans CJK KR,sans-serif" fill="#333" font-size="2.800" textLength="52.5" lengthAdjust="spacingAndGlyphs">주최 : 국립전주박물관, (재)백제세계유산센터</text><rect x="75.400" y="79.50" width="7.800" height="3.800" rx="1.900" fill="#fff" stroke="#3e9a5e" stroke-width="0.2" stroke-opacity="0.35"/><text x="76.300" y="82.20" font-family="Liberation Sans,sans-serif" font-size="2.200" font-weight="700" fill="#3e9a5e" fill-opacity="0.7" textLength="6" lengthAdjust="spacingAndGlyphs">04/26</text><text x="85.600" y="81.20" font-family="Liberation Sans,Noto Sans CJK KR,sans-serif" fill="#333" font-weight="700" font-size="2.300" fill-opacity="0.85" textLength="22.1" lengthAdjust="spacingAndGlyphs">백제문화의 정수 백제금동대향로</text><rect x="85.600" y="82.60" width="20.4" height="0.800" fill="#888" opacity="0.6"/><rect x="75.400" y="86.43" width="7.800" height="3.800" rx="1.900" fill="#fff" stroke="#d75a5a" stroke-width="0.2" stroke-opacity="0.35"/><text x="76.300" y="89.13" font-family="Liberation Sans,sans-serif" font-size="2.200" font-weight="700" fill="#d75a5a" fill-opacity="0.7" textLength="6" lengthAdjust="spacingAndGlyphs">05/10</text><text x="85.600" y="88.13" font-family="Liberation Sans,Noto Sans CJK KR,sans-serif" fill="#333" font-weight="700" font-size="2.300" fill-opacity="0.85" textLength="23.3" lengthAdjust="spacingAndGlyphs">백제의 사찰과 불탑</text><rect x="85.600" y="89.53" width="20.8" height="0.800" fill="#888" opacity="0.6"/><rect x="75.400" y="93.36" width="7.800" height="3.800" rx="1.900" fill="#fff" stroke="#d75a5a" stroke-width="0.2" stroke-opacity="0.35"/><text x="76.300" y="96.06" font-family="Liberation Sans,sans-serif" font-size="2.200" font-weight="700" fill="#d75a5a" fill-opacity="0.7" textLength="6" lengthAdjust="spacingAndGlyphs">05/17</text><text x="85.600" y="95.06" font-family="Liberation Sans,Noto Sans CJK KR,sans-serif" fill="#333" font-weight="700" font-size="2.300" fill-opacity="0.85" textLength="25.6" lengthAdjust="spacingAndGlyphs">고고학으로 본 한성기의 백제왕도</text><rect x="85.600" y="96.46" width="16.5" height="0.800" fill="#888" opacity="0.6"/><rect x="75.400" y="100.29" width="7.800" height="3.800" rx="1.900" fill="#fff" stroke="#d75a5a" stroke-width="0.2" stroke-opacity="0.35"/><text x="76.300" y="102.99" font-family="Liberation Sans,sans-serif" font-size="2.200" font-weight="700" fill="#d75a5a" fill-opacity="0.7" textLength="6" lengthAdjust="spacingAndGlyphs">05/24</text><text x="85.600" y="101.99" font-family="Liberation Sans,Noto Sans CJK KR,sans-serif" fill="#333" font-weight="700" font-size="2.300" fill-opacity="0.85" textLength="20.1" lengthAdjust="spacingAndGlyphs">문헌으로 본 웅진기의 백제왕도와 문화</text><rect x="85.600" y="103.39" width="22.7" height="0.800" fill="#888" opacity="0.6"/><rect x="75.400" y="107.22" width="7.800" height="3.800" rx="1.900" fill="#fff" stroke="#3e9a5e" stroke-width="0.2" stroke-opacity="0.35"/><text x="76.300" y="109.92" font-family="Liberation Sans,sans-serif" font-size="2.200" font-weight="700" fill="#3e9a5e" fill-opacity="0.7" textLength="6" lengthAdjust="spacingAndGlyphs">06/14</text><text x="85.600" y="108.92" font-family="Liberation Sans,Noto Sans CJK KR,sans-serif" fill="#333" font-weight="700" font-size="2.300" fill-opacity="0.85" textLength="22.3" lengthAdjust="spacingAndGlyphs">백제의 고분</text><rect x="85.600" y="110.32" width="17.9" height="0.800" fill="#888" opacity="0.6"/><rect x="75.400" y="114.15" width="7.800" height="3.800" rx="1.900" fill="#fff" stroke="#3e9a5e" stroke-width="0.2" stroke-opacity="0.35"/><text x="76.300" y="116.85" font-family="Liberation Sans,sans-serif" font-size="2.200" font-weight="700" fill="#3e9a5e" fill-opacity="0.7" textLength="6" lengthAdjust="spacingAndGlyphs">06/28</text><text x="85.600" y="115.85" font-family="Liberation Sans,Noto Sans CJK KR,sans-serif" fill="#333" font-weight="700" font-size="2.300" fill-opacity="0.85" textLength="29.0" lengthAdjust="spacingAndGlyphs">금동신발로 풀어보는 마지막 백제왕도</text><rect x="85.600" y="117.25" width="19.8" height="0.800" fill="#888" opacity="0.6"/><rect x="75.400" y="121.08" width="7.800" height="3.800" rx="1.900" fill="#fff" stroke="#d75a5a" stroke-width="0.2" stroke-opacity="0.35"/><text x="76.300" y="123.78" font-family="Liberation Sans,sans-serif" font-size="2.200" font-weight="700" fill="#d75a5a" fill-opacity="0.7" textLength="6" lengthAdjust="spacingAndGlyphs">07/05</text><text x="85.600" y="122.78" font-family="Liberation Sans,Noto Sans CJK KR,sans-serif" fill="#333" font-weight="700" font-size="2.300" fill-opacity="0.85" textLength="27.5" lengthAdjust="spacingAndGlyphs">문헌으로 본 사비기의 백제왕도와 문화</text><rect x="85.600" y="124.18" width="19.8" height="0.800" fill="#888" opacity="0.6"/><rect x="75.400" y="128.01" width="7.800" height="3.800" rx="1.900" fill="#fff" stroke="#d75a5a" stroke-width="0.2" stroke-opacity="0.35"/><text x="76.300" y="130.71" font-family="Liberation Sans,sans-serif" font-size="2.200" font-weight="700" fill="#d75a5a" fill-opacity="0.7" textLength="6" lengthAdjust="spacingAndGlyphs">07/19</text><text x="85.600" y="129.71" font-family="Liberation Sans,Noto Sans CJK KR,sans-serif" fill="#333" font-weight="700" font-size="2.300" fill-opacity="0.85" textLength="25.8" lengthAdjust="spacingAndGlyphs">백제 왕릉의 비교 검토</text><rect x="85.600" y="131.11" width="17.2" height="0.800" fill="#888" opacity="0.6"/><rect x="75.400" y="134.94" width="7.800" height="3.800" rx="1.900" fill="#fff" stroke="#3e9a5e" stroke-width="0.2" stroke-opacity="0.35"/><text x="76.300" y="137.64" font-family="Liberation Sans,sans-serif" font-size="2.200" font-weight="700" fill="#3e9a5e" fill-opacity="0.7" textLength="6" lengthAdjust="spacingAndGlyphs">08/16</text><text x="85.600" y="136.64" font-family="Liberation Sans,Noto Sans CJK KR,sans-serif" fill="#333" font-weight="700" font-size="2.300" fill-opacity="0.85" textLength="25.7" lengthAdjust="spacingAndGlyphs">청소년박물관 교육 프로그램</text><rect x="85.600" y="138.04" width="22.9" height="0.800" fill="#888" opacity="0.6"/><rect x="75.400" y="141.87" width="7.800" height="3.800" rx="1.900" fill="#fff" stroke="#3e9a5e" stroke-width="0.2" stroke-opacity="0.35"/><text x="76.300" y="144.57" font-family="Liberation Sans,sans-serif" font-size="2.200" font-weight="700" fill="#3e9a5e" fill-opacity="0.7" textLength="6" lengthAdjust="spacingAndGlyphs">08/30</text><text x="85.600" y="143.57" font-family="Liberation Sans,Noto Sans CJK KR,sans-serif" fill="#333" font-weight="700" font-size="2.300" fill-opacity="0.85" textLength="24.7" lengthAdjust="spacingAndGlyphs">문헌으로 본 익산의 백제 왕도</text><rect x="85.600" y="144.97" width="21.9" height="0.800" fill="#888" opacity="0.6"/><rect x="75.400" y="148.80" width="7.800" height="3.800" rx="1.900" fill="#fff" stroke="#d75a5a" stroke-width="0.2" stroke-opacity="0.35"/><text x="76.300" y="151.50" font-family="Liberation Sans,sans-serif" font-size="2.200" font-weight="700" fill="#d75a5a" fill-opacity="0.7" textLength="6" lengthAdjust="spacingAndGlyphs">09/13</text><text x="85.600" y="150.50" font-family="Liberation Sans,Noto Sans CJK KR,sans-serif" fill="#333" font-weight="700" font-size="2.300" fill-opacity="0.85" textLength="26.0" lengthAdjust="spacingAndGlyphs">백제 불교 문화유산</text><rect x="85.600" y="151.90" width="16.5" height="0.800" fill="#888" opacity="0.6"/><rect x="75.400" y="155.73" width="7.800" height="3.800" rx="1.900" fill="#fff" stroke="#d75a5a" stroke-width="0.2" stroke-opacity="0.35"/><text x="76.300" y="158.43" font-family="Liberation Sans,sans-serif" font-size="2.200" font-weight="700" fill="#d75a5a" fill-opacity="0.7" textLength="6" lengthAdjust="spacingAndGlyphs">09/27</text><text x="85.600" y="157.43" font-family="Liberation Sans,Noto Sans CJK KR,sans-serif" fill="#333" font-weight="700" font-size="2.300" fill-opacity="0.85" textLength="26.8" lengthAdjust="spacingAndGlyphs">백제의 역사를 찾아서 미륵사 발굴 이야기</text><rect x="85.600" y="158.83" width="20.7" height="0.800" fill="#888" opacity="0.6"/><rect x="75.400" y="162.66" width="7.800" height="3.800" rx="1.900" fill="#fff" stroke="#3e9a5e" stroke-width="0.2" stroke-opacity="0.35"/><text x="76.300" y="165.36" font-family="Liberation Sans,sans-serif" font-size="2.200" font-weight="700" fill="#3e9a5e" fill-opacity="0.7" textLength="6" lengthAdjust="spacingAndGlyphs">10/11</text><text x="85.600" y="164.36" font-family="Liberation Sans,Noto Sans CJK KR,sans-serif" fill="#333" font-weight="700" font-size="2.300" fill-opacity="0.85" textLength="22.7" lengthAdjust="spacingAndGlyphs">청소년문화재 박물관에서 배움</text><rect x="85.600" y="165.76" width="16.2" height="0.800" fill="#888" opacity="0.6"/><rect x="75.400" y="169.59" width="7.800" height="3.800" rx="1.900" fill="#fff" stroke="#3e9a5e" stroke-width="0.2" stroke-opacity="0.35"/><text x="76.300" y="172.29" font-family="Liberation Sans,sans-serif" font-size="2.200" font-weight="700" fill="#3e9a5e" fill-opacity="0.7" textLength="6" lengthAdjust="spacingAndGlyphs">10/25</text><text x="85.600" y="171.29" font-family="Liberation Sans,Noto Sans CJK KR,sans-serif" fill="#333" font-weight="700" font-size="2.300" fill-opacity="0.85" textLength="27.8" lengthAdjust="spacingAndGlyphs">백제의 멸망 과정</text><rect x="85.600" y="172.69" width="19.8" height="0.800" fill="#888" opacity="0.6"/><rect x="74.800" y="181.200" width="28" height="0.700" fill="#999"/><rect x="74.800" y="184.500" width="51.9" height="4.500" fill="#1a3567"/></svg>
<div class="bd b1 gray">접수마감</div><div class="bd b2">온라인 선착순</div><div class="more">자세히보기</div>
<div class="cat">유아·가족 / 중·고등학생</div><div class="tit">선인들이 즐겨 쓴 중국 글씨본 중국</div><div class="row" style="top:97.9px"><b>교육기간</b>2023.04.26 ~ 2023.10.25</div><div class="row" style="top:123.65px"><b>교육시간</b>10:00 ~ 11:40</div><div class="row" style="top:149.4px"><b>접수기간</b>2023.04.11 09:00 ~ 2023.10.24 00:00</div><div class="row" style="top:175.15px"><b>교육대상</b>초등4학년 ~ 고3학년 단체 1팀(최대 30명)</div></div>

<div class="pg c" style="left:183.8px"><svg viewBox="0 0 25 25"><path d="M11.8 9.6L8.9 12.5L11.8 15.4M15.7 9.6L12.8 12.5L15.7 15.4" fill="none" stroke="#222" stroke-width="1.2"/></svg></div><div class="pg on" style="left:214.5px">1</div><div class="pg" style="left:246.10000000000002px">2</div><div class="pg" style="left:280.40000000000003px">3</div><div class="pg" style="left:314.70000000000005px">4</div><div class="pg" style="left:349.0px">5</div><div class="pg" style="left:383.3px">6</div><div class="pg" style="left:417.6px">7</div><div class="pg" style="left:451.9px">8</div><div class="pg" style="left:486.2px">9</div><div class="pg" style="left:520.5px">10</div><div class="pg c" style="left:554.9px"><svg viewBox="0 0 25 25"><path d="M9.3 9.600L12.2 12.5L9.3 15.4M13.2 9.600L16.100 12.5L13.2 15.4" fill="none" stroke="#222" stroke-width="1.2"/></svg></div><div class="pg c" style="left:589.1px"><svg viewBox="0 0 25 25"><path d="M11.3 9.500L14.300 12.5L11.3 15.500" fill="none" stroke="#222" stroke-width="1.3"/></svg></div>
</body></html>
